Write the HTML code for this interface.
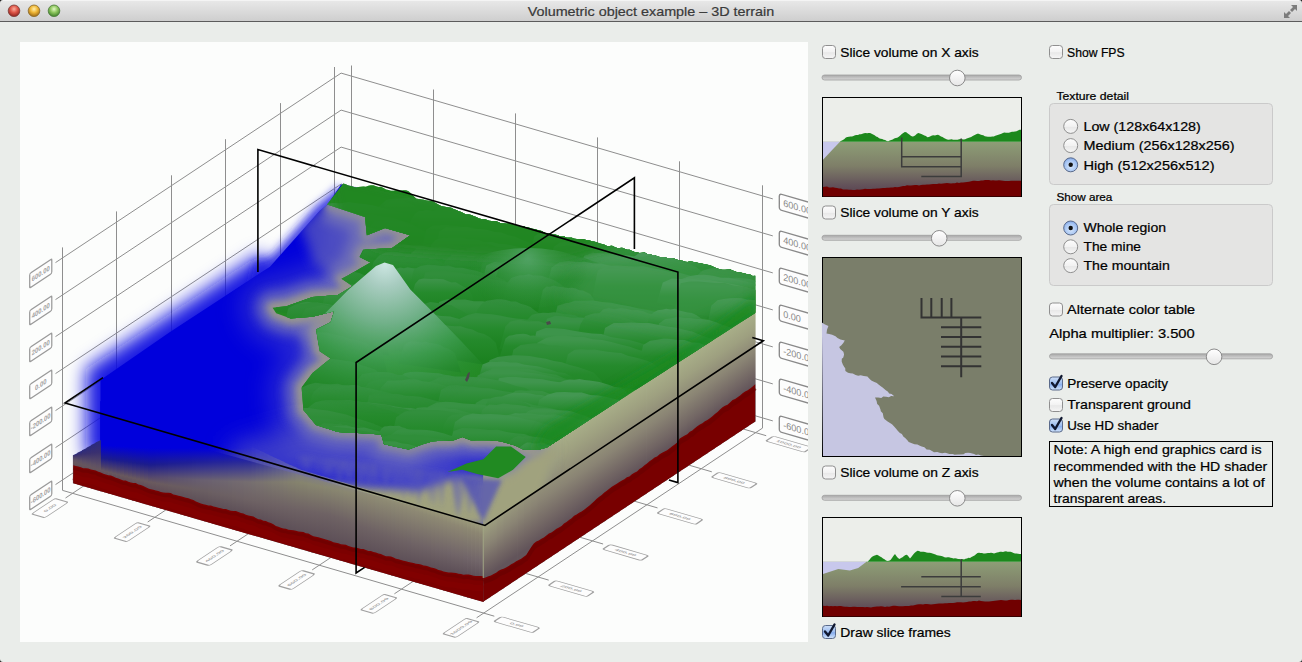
<!DOCTYPE html><html><head><meta charset="utf-8"><title>Volumetric object example - 3D terrain</title><style>html,body{margin:0;padding:0;background:#eaedea;width:1302px;height:662px;overflow:hidden;font-family:"Liberation Sans",sans-serif}</style></head><body><svg width="1302" height="662" viewBox="0 0 1302 662" style="display:block"><defs><linearGradient id="tbar" x1="0" y1="0" x2="0" y2="1"><stop offset="0" stop-color="#e9e9e9"/><stop offset="0.1" stop-color="#e6e6e6"/><stop offset="1" stop-color="#cdcdcd"/></linearGradient><radialGradient id="tlr" cx="0.5" cy="0.35" r="0.6"><stop offset="0" stop-color="#f8b0a0"/><stop offset="0.5" stop-color="#e0584a"/><stop offset="1" stop-color="#9a2a24"/></radialGradient><radialGradient id="tly" cx="0.5" cy="0.35" r="0.6"><stop offset="0" stop-color="#fff0b0"/><stop offset="0.5" stop-color="#f0b838"/><stop offset="1" stop-color="#a87418"/></radialGradient><radialGradient id="tlg" cx="0.5" cy="0.35" r="0.6"><stop offset="0" stop-color="#e4f8c8"/><stop offset="0.5" stop-color="#90c860"/><stop offset="1" stop-color="#4a8a30"/></radialGradient><clipPath id="gclip"><rect x="20" y="42" width="788" height="600"/></clipPath><filter id="blur2" x="-30%" y="-30%" width="160%" height="160%"><feGaussianBlur stdDeviation="2"/></filter><filter id="blur3" x="-30%" y="-30%" width="160%" height="160%"><feGaussianBlur stdDeviation="3"/></filter><filter id="blur4" x="-30%" y="-30%" width="160%" height="160%"><feGaussianBlur stdDeviation="4"/></filter><filter id="blur5" x="-30%" y="-30%" width="160%" height="160%"><feGaussianBlur stdDeviation="5"/></filter><filter id="blur6" x="-30%" y="-30%" width="160%" height="160%"><feGaussianBlur stdDeviation="6"/></filter><filter id="blur8" x="-30%" y="-30%" width="160%" height="160%"><feGaussianBlur stdDeviation="8"/></filter><filter id="blur7" x="-30%" y="-30%" width="160%" height="160%"><feGaussianBlur stdDeviation="9"/></filter><linearGradient id="rf0" gradientUnits="userSpaceOnUse" x1="486.90" y1="467.75" x2="548.04" y2="557.67"><stop offset="0.151" stop-color="#a8ae88"/><stop offset="0.432" stop-color="#9ea080"/><stop offset="0.588" stop-color="#8a8474"/><stop offset="0.728" stop-color="#726664"/><stop offset="0.821" stop-color="#62545a"/></linearGradient><linearGradient id="rf1" gradientUnits="userSpaceOnUse" x1="493.69" y1="463.25" x2="554.83" y2="553.17"><stop offset="0.149" stop-color="#a8ae88"/><stop offset="0.413" stop-color="#9ea080"/><stop offset="0.579" stop-color="#8a8474"/><stop offset="0.725" stop-color="#726664"/><stop offset="0.821" stop-color="#62545a"/></linearGradient><linearGradient id="rf2" gradientUnits="userSpaceOnUse" x1="500.48" y1="458.75" x2="561.62" y2="548.67"><stop offset="0.146" stop-color="#a8ae88"/><stop offset="0.394" stop-color="#9ea080"/><stop offset="0.569" stop-color="#8a8474"/><stop offset="0.722" stop-color="#726664"/><stop offset="0.820" stop-color="#62545a"/></linearGradient><linearGradient id="rf3" gradientUnits="userSpaceOnUse" x1="507.27" y1="454.25" x2="568.42" y2="544.16"><stop offset="0.144" stop-color="#a8ae88"/><stop offset="0.375" stop-color="#9ea080"/><stop offset="0.559" stop-color="#8a8474"/><stop offset="0.719" stop-color="#726664"/><stop offset="0.820" stop-color="#62545a"/></linearGradient><linearGradient id="rf4" gradientUnits="userSpaceOnUse" x1="514.07" y1="449.75" x2="575.21" y2="539.66"><stop offset="0.142" stop-color="#a8ae88"/><stop offset="0.356" stop-color="#9ea080"/><stop offset="0.550" stop-color="#8a8474"/><stop offset="0.715" stop-color="#726664"/><stop offset="0.819" stop-color="#62545a"/></linearGradient><linearGradient id="rf5" gradientUnits="userSpaceOnUse" x1="520.86" y1="445.25" x2="582.00" y2="535.16"><stop offset="0.139" stop-color="#a8ae88"/><stop offset="0.338" stop-color="#9ea080"/><stop offset="0.540" stop-color="#8a8474"/><stop offset="0.712" stop-color="#726664"/><stop offset="0.819" stop-color="#62545a"/></linearGradient><linearGradient id="rf6" gradientUnits="userSpaceOnUse" x1="527.65" y1="440.75" x2="588.79" y2="530.66"><stop offset="0.137" stop-color="#a8ae88"/><stop offset="0.319" stop-color="#9ea080"/><stop offset="0.530" stop-color="#8a8474"/><stop offset="0.709" stop-color="#726664"/><stop offset="0.818" stop-color="#62545a"/></linearGradient><linearGradient id="rf7" gradientUnits="userSpaceOnUse" x1="534.44" y1="436.25" x2="595.58" y2="526.16"><stop offset="0.134" stop-color="#a8ae88"/><stop offset="0.300" stop-color="#9ea080"/><stop offset="0.521" stop-color="#8a8474"/><stop offset="0.706" stop-color="#726664"/><stop offset="0.818" stop-color="#62545a"/></linearGradient><linearGradient id="rf8" gradientUnits="userSpaceOnUse" x1="541.24" y1="431.75" x2="602.37" y2="521.66"><stop offset="0.133" stop-color="#a8ae88"/><stop offset="0.285" stop-color="#9ea080"/><stop offset="0.513" stop-color="#8a8474"/><stop offset="0.703" stop-color="#726664"/><stop offset="0.817" stop-color="#62545a"/></linearGradient><linearGradient id="rf9" gradientUnits="userSpaceOnUse" x1="548.03" y1="427.25" x2="609.16" y2="517.15"><stop offset="0.135" stop-color="#a8ae88"/><stop offset="0.284" stop-color="#9ea080"/><stop offset="0.513" stop-color="#8a8474"/><stop offset="0.700" stop-color="#726664"/><stop offset="0.814" stop-color="#62545a"/></linearGradient><linearGradient id="rf10" gradientUnits="userSpaceOnUse" x1="554.82" y1="422.75" x2="615.96" y2="512.65"><stop offset="0.138" stop-color="#a8ae88"/><stop offset="0.284" stop-color="#9ea080"/><stop offset="0.512" stop-color="#8a8474"/><stop offset="0.697" stop-color="#726664"/><stop offset="0.811" stop-color="#62545a"/></linearGradient><linearGradient id="rf11" gradientUnits="userSpaceOnUse" x1="561.61" y1="418.25" x2="622.75" y2="508.15"><stop offset="0.140" stop-color="#a8ae88"/><stop offset="0.284" stop-color="#9ea080"/><stop offset="0.512" stop-color="#8a8474"/><stop offset="0.694" stop-color="#726664"/><stop offset="0.808" stop-color="#62545a"/></linearGradient><linearGradient id="rf12" gradientUnits="userSpaceOnUse" x1="568.41" y1="413.75" x2="629.54" y2="503.65"><stop offset="0.142" stop-color="#a8ae88"/><stop offset="0.284" stop-color="#9ea080"/><stop offset="0.512" stop-color="#8a8474"/><stop offset="0.691" stop-color="#726664"/><stop offset="0.805" stop-color="#62545a"/></linearGradient><linearGradient id="rf13" gradientUnits="userSpaceOnUse" x1="575.20" y1="409.25" x2="636.33" y2="499.15"><stop offset="0.145" stop-color="#a8ae88"/><stop offset="0.284" stop-color="#9ea080"/><stop offset="0.512" stop-color="#8a8474"/><stop offset="0.689" stop-color="#726664"/><stop offset="0.803" stop-color="#62545a"/></linearGradient><linearGradient id="rf14" gradientUnits="userSpaceOnUse" x1="581.99" y1="404.75" x2="643.12" y2="494.65"><stop offset="0.147" stop-color="#a8ae88"/><stop offset="0.283" stop-color="#9ea080"/><stop offset="0.512" stop-color="#8a8474"/><stop offset="0.686" stop-color="#726664"/><stop offset="0.800" stop-color="#62545a"/></linearGradient><linearGradient id="rf15" gradientUnits="userSpaceOnUse" x1="588.78" y1="400.25" x2="649.91" y2="490.14"><stop offset="0.150" stop-color="#a8ae88"/><stop offset="0.283" stop-color="#9ea080"/><stop offset="0.511" stop-color="#8a8474"/><stop offset="0.683" stop-color="#726664"/><stop offset="0.797" stop-color="#62545a"/></linearGradient><linearGradient id="rf16" gradientUnits="userSpaceOnUse" x1="595.58" y1="395.75" x2="656.70" y2="485.64"><stop offset="0.152" stop-color="#a8ae88"/><stop offset="0.283" stop-color="#9ea080"/><stop offset="0.511" stop-color="#8a8474"/><stop offset="0.680" stop-color="#726664"/><stop offset="0.794" stop-color="#62545a"/></linearGradient><linearGradient id="rf17" gradientUnits="userSpaceOnUse" x1="602.37" y1="391.25" x2="663.49" y2="481.14"><stop offset="0.154" stop-color="#a8ae88"/><stop offset="0.284" stop-color="#9ea080"/><stop offset="0.511" stop-color="#8a8474"/><stop offset="0.678" stop-color="#726664"/><stop offset="0.792" stop-color="#62545a"/></linearGradient><linearGradient id="rf18" gradientUnits="userSpaceOnUse" x1="609.16" y1="386.75" x2="670.29" y2="476.64"><stop offset="0.155" stop-color="#a8ae88"/><stop offset="0.285" stop-color="#9ea080"/><stop offset="0.509" stop-color="#8a8474"/><stop offset="0.678" stop-color="#726664"/><stop offset="0.789" stop-color="#62545a"/></linearGradient><linearGradient id="rf19" gradientUnits="userSpaceOnUse" x1="615.95" y1="382.25" x2="677.08" y2="472.14"><stop offset="0.157" stop-color="#a8ae88"/><stop offset="0.287" stop-color="#9ea080"/><stop offset="0.508" stop-color="#8a8474"/><stop offset="0.677" stop-color="#726664"/><stop offset="0.786" stop-color="#62545a"/></linearGradient><linearGradient id="rf20" gradientUnits="userSpaceOnUse" x1="622.75" y1="377.75" x2="683.87" y2="467.64"><stop offset="0.158" stop-color="#a8ae88"/><stop offset="0.289" stop-color="#9ea080"/><stop offset="0.507" stop-color="#8a8474"/><stop offset="0.676" stop-color="#726664"/><stop offset="0.784" stop-color="#62545a"/></linearGradient><linearGradient id="rf21" gradientUnits="userSpaceOnUse" x1="629.54" y1="373.25" x2="690.66" y2="463.13"><stop offset="0.159" stop-color="#a8ae88"/><stop offset="0.291" stop-color="#9ea080"/><stop offset="0.505" stop-color="#8a8474"/><stop offset="0.676" stop-color="#726664"/><stop offset="0.781" stop-color="#62545a"/></linearGradient><linearGradient id="rf22" gradientUnits="userSpaceOnUse" x1="636.33" y1="368.75" x2="697.45" y2="458.63"><stop offset="0.160" stop-color="#a8ae88"/><stop offset="0.293" stop-color="#9ea080"/><stop offset="0.504" stop-color="#8a8474"/><stop offset="0.675" stop-color="#726664"/><stop offset="0.779" stop-color="#62545a"/></linearGradient><linearGradient id="rf23" gradientUnits="userSpaceOnUse" x1="643.12" y1="364.25" x2="704.24" y2="454.13"><stop offset="0.162" stop-color="#a8ae88"/><stop offset="0.295" stop-color="#9ea080"/><stop offset="0.503" stop-color="#8a8474"/><stop offset="0.674" stop-color="#726664"/><stop offset="0.776" stop-color="#62545a"/></linearGradient><linearGradient id="rf24" gradientUnits="userSpaceOnUse" x1="649.92" y1="359.75" x2="711.03" y2="449.63"><stop offset="0.163" stop-color="#a8ae88"/><stop offset="0.297" stop-color="#9ea080"/><stop offset="0.502" stop-color="#8a8474"/><stop offset="0.674" stop-color="#726664"/><stop offset="0.774" stop-color="#62545a"/></linearGradient><linearGradient id="rf25" gradientUnits="userSpaceOnUse" x1="656.71" y1="355.25" x2="717.83" y2="445.13"><stop offset="0.164" stop-color="#a8ae88"/><stop offset="0.299" stop-color="#9ea080"/><stop offset="0.500" stop-color="#8a8474"/><stop offset="0.673" stop-color="#726664"/><stop offset="0.771" stop-color="#62545a"/></linearGradient><linearGradient id="rf26" gradientUnits="userSpaceOnUse" x1="663.50" y1="350.75" x2="724.62" y2="440.63"><stop offset="0.166" stop-color="#a8ae88"/><stop offset="0.301" stop-color="#9ea080"/><stop offset="0.499" stop-color="#8a8474"/><stop offset="0.672" stop-color="#726664"/><stop offset="0.768" stop-color="#62545a"/></linearGradient><linearGradient id="rf27" gradientUnits="userSpaceOnUse" x1="670.29" y1="346.25" x2="731.41" y2="436.12"><stop offset="0.167" stop-color="#a8ae88"/><stop offset="0.303" stop-color="#9ea080"/><stop offset="0.498" stop-color="#8a8474"/><stop offset="0.672" stop-color="#726664"/><stop offset="0.766" stop-color="#62545a"/></linearGradient><linearGradient id="rf28" gradientUnits="userSpaceOnUse" x1="677.09" y1="341.75" x2="738.20" y2="431.62"><stop offset="0.168" stop-color="#a8ae88"/><stop offset="0.305" stop-color="#9ea080"/><stop offset="0.496" stop-color="#8a8474"/><stop offset="0.671" stop-color="#726664"/><stop offset="0.763" stop-color="#62545a"/></linearGradient><linearGradient id="rf29" gradientUnits="userSpaceOnUse" x1="683.88" y1="337.25" x2="744.99" y2="427.12"><stop offset="0.169" stop-color="#a8ae88"/><stop offset="0.306" stop-color="#9ea080"/><stop offset="0.495" stop-color="#8a8474"/><stop offset="0.669" stop-color="#726664"/><stop offset="0.760" stop-color="#62545a"/></linearGradient><linearGradient id="rf30" gradientUnits="userSpaceOnUse" x1="690.67" y1="332.75" x2="751.78" y2="422.62"><stop offset="0.170" stop-color="#a8ae88"/><stop offset="0.306" stop-color="#9ea080"/><stop offset="0.493" stop-color="#8a8474"/><stop offset="0.664" stop-color="#726664"/><stop offset="0.757" stop-color="#62545a"/></linearGradient><linearGradient id="rf31" gradientUnits="userSpaceOnUse" x1="697.46" y1="328.25" x2="758.57" y2="418.12"><stop offset="0.170" stop-color="#a8ae88"/><stop offset="0.305" stop-color="#9ea080"/><stop offset="0.490" stop-color="#8a8474"/><stop offset="0.660" stop-color="#726664"/><stop offset="0.753" stop-color="#62545a"/></linearGradient><linearGradient id="rf32" gradientUnits="userSpaceOnUse" x1="704.26" y1="323.75" x2="765.36" y2="413.62"><stop offset="0.171" stop-color="#a8ae88"/><stop offset="0.305" stop-color="#9ea080"/><stop offset="0.488" stop-color="#8a8474"/><stop offset="0.656" stop-color="#726664"/><stop offset="0.750" stop-color="#62545a"/></linearGradient><linearGradient id="rf33" gradientUnits="userSpaceOnUse" x1="711.05" y1="319.25" x2="772.16" y2="409.11"><stop offset="0.171" stop-color="#a8ae88"/><stop offset="0.305" stop-color="#9ea080"/><stop offset="0.486" stop-color="#8a8474"/><stop offset="0.652" stop-color="#726664"/><stop offset="0.746" stop-color="#62545a"/></linearGradient><linearGradient id="rf34" gradientUnits="userSpaceOnUse" x1="717.84" y1="314.75" x2="778.95" y2="404.61"><stop offset="0.172" stop-color="#a8ae88"/><stop offset="0.305" stop-color="#9ea080"/><stop offset="0.484" stop-color="#8a8474"/><stop offset="0.647" stop-color="#726664"/><stop offset="0.742" stop-color="#62545a"/></linearGradient><linearGradient id="rf35" gradientUnits="userSpaceOnUse" x1="724.63" y1="310.25" x2="785.74" y2="400.11"><stop offset="0.172" stop-color="#a8ae88"/><stop offset="0.305" stop-color="#9ea080"/><stop offset="0.482" stop-color="#8a8474"/><stop offset="0.643" stop-color="#726664"/><stop offset="0.739" stop-color="#62545a"/></linearGradient><linearGradient id="rf36" gradientUnits="userSpaceOnUse" x1="731.43" y1="305.75" x2="792.53" y2="395.61"><stop offset="0.173" stop-color="#a8ae88"/><stop offset="0.305" stop-color="#9ea080"/><stop offset="0.479" stop-color="#8a8474"/><stop offset="0.639" stop-color="#726664"/><stop offset="0.735" stop-color="#62545a"/></linearGradient><linearGradient id="rf37" gradientUnits="userSpaceOnUse" x1="738.22" y1="301.25" x2="799.32" y2="391.11"><stop offset="0.174" stop-color="#a8ae88"/><stop offset="0.305" stop-color="#9ea080"/><stop offset="0.477" stop-color="#8a8474"/><stop offset="0.635" stop-color="#726664"/><stop offset="0.732" stop-color="#62545a"/></linearGradient><linearGradient id="rf38" gradientUnits="userSpaceOnUse" x1="745.01" y1="296.75" x2="806.11" y2="386.60"><stop offset="0.174" stop-color="#a8ae88"/><stop offset="0.305" stop-color="#9ea080"/><stop offset="0.475" stop-color="#8a8474"/><stop offset="0.630" stop-color="#726664"/><stop offset="0.728" stop-color="#62545a"/></linearGradient><linearGradient id="rf39" gradientUnits="userSpaceOnUse" x1="751.80" y1="292.25" x2="812.90" y2="382.10"><stop offset="0.175" stop-color="#a8ae88"/><stop offset="0.304" stop-color="#9ea080"/><stop offset="0.473" stop-color="#8a8474"/><stop offset="0.626" stop-color="#726664"/><stop offset="0.725" stop-color="#62545a"/></linearGradient><linearGradient id="ff0" gradientUnits="userSpaceOnUse" x1="102.49" y1="401.60" x2="102.49" y2="491.75"><stop offset="0.483" stop-color="#0000dc"/><stop offset="0.629" stop-color="#1c1c8c"/><stop offset="0.719" stop-color="#4a3e6a"/><stop offset="0.764" stop-color="#66565e"/><stop offset="0.799" stop-color="#62505a"/></linearGradient><linearGradient id="ff1" gradientUnits="userSpaceOnUse" x1="106.48" y1="402.80" x2="106.48" y2="492.90"><stop offset="0.472" stop-color="#0000dc"/><stop offset="0.622" stop-color="#1c1c8c"/><stop offset="0.715" stop-color="#4b3f6b"/><stop offset="0.762" stop-color="#66565e"/><stop offset="0.799" stop-color="#62505a"/></linearGradient><linearGradient id="ff2" gradientUnits="userSpaceOnUse" x1="110.47" y1="404.00" x2="110.47" y2="494.06"><stop offset="0.462" stop-color="#0000dc"/><stop offset="0.615" stop-color="#1c1c8c"/><stop offset="0.711" stop-color="#4b3f6b"/><stop offset="0.760" stop-color="#67575e"/><stop offset="0.799" stop-color="#62505a"/></linearGradient><linearGradient id="ff3" gradientUnits="userSpaceOnUse" x1="114.46" y1="405.20" x2="114.46" y2="495.21"><stop offset="0.452" stop-color="#0000dc"/><stop offset="0.609" stop-color="#1c1c8c"/><stop offset="0.707" stop-color="#4c406c"/><stop offset="0.758" stop-color="#67575e"/><stop offset="0.799" stop-color="#62505a"/></linearGradient><linearGradient id="ff4" gradientUnits="userSpaceOnUse" x1="118.45" y1="406.40" x2="118.45" y2="496.37"><stop offset="0.441" stop-color="#0000dc"/><stop offset="0.602" stop-color="#1c1c8c"/><stop offset="0.703" stop-color="#4c406c"/><stop offset="0.755" stop-color="#67575e"/><stop offset="0.799" stop-color="#62505a"/></linearGradient><linearGradient id="ff5" gradientUnits="userSpaceOnUse" x1="122.44" y1="407.60" x2="122.44" y2="497.52"><stop offset="0.431" stop-color="#0000dc"/><stop offset="0.595" stop-color="#1c1c8c"/><stop offset="0.699" stop-color="#4d416d"/><stop offset="0.753" stop-color="#68585e"/><stop offset="0.799" stop-color="#62505a"/></linearGradient><linearGradient id="ff6" gradientUnits="userSpaceOnUse" x1="126.43" y1="408.81" x2="126.43" y2="498.67"><stop offset="0.420" stop-color="#0000dc"/><stop offset="0.588" stop-color="#1c1c8c"/><stop offset="0.695" stop-color="#4d416d"/><stop offset="0.751" stop-color="#68585e"/><stop offset="0.799" stop-color="#62505a"/></linearGradient><linearGradient id="ff7" gradientUnits="userSpaceOnUse" x1="130.42" y1="410.01" x2="130.42" y2="499.83"><stop offset="0.410" stop-color="#0000dc"/><stop offset="0.581" stop-color="#1c1c8c"/><stop offset="0.691" stop-color="#4e426e"/><stop offset="0.749" stop-color="#68585e"/><stop offset="0.800" stop-color="#62505a"/></linearGradient><linearGradient id="ff8" gradientUnits="userSpaceOnUse" x1="134.41" y1="411.21" x2="134.41" y2="500.98"><stop offset="0.399" stop-color="#0000dc"/><stop offset="0.575" stop-color="#1c1c8c"/><stop offset="0.687" stop-color="#4e426e"/><stop offset="0.746" stop-color="#69595e"/><stop offset="0.800" stop-color="#62505a"/></linearGradient><linearGradient id="ff9" gradientUnits="userSpaceOnUse" x1="138.40" y1="412.41" x2="138.40" y2="502.14"><stop offset="0.389" stop-color="#0000dc"/><stop offset="0.568" stop-color="#1c1c8c"/><stop offset="0.683" stop-color="#4f436f"/><stop offset="0.744" stop-color="#69595e"/><stop offset="0.800" stop-color="#62505a"/></linearGradient><linearGradient id="ff10" gradientUnits="userSpaceOnUse" x1="142.39" y1="413.61" x2="142.39" y2="503.29"><stop offset="0.378" stop-color="#0000dc"/><stop offset="0.561" stop-color="#1c1c8c"/><stop offset="0.679" stop-color="#4f436f"/><stop offset="0.742" stop-color="#69595e"/><stop offset="0.800" stop-color="#62505a"/></linearGradient><linearGradient id="ff11" gradientUnits="userSpaceOnUse" x1="146.38" y1="414.81" x2="146.38" y2="504.45"><stop offset="0.368" stop-color="#0000dc"/><stop offset="0.554" stop-color="#1c1c8c"/><stop offset="0.674" stop-color="#504470"/><stop offset="0.740" stop-color="#6a5a5e"/><stop offset="0.800" stop-color="#62505a"/></linearGradient><linearGradient id="ff12" gradientUnits="userSpaceOnUse" x1="150.37" y1="416.01" x2="150.37" y2="505.60"><stop offset="0.357" stop-color="#0000dc"/><stop offset="0.547" stop-color="#1c1c8c"/><stop offset="0.670" stop-color="#504470"/><stop offset="0.737" stop-color="#6a5a5e"/><stop offset="0.800" stop-color="#62505a"/></linearGradient><linearGradient id="ff13" gradientUnits="userSpaceOnUse" x1="154.36" y1="417.21" x2="154.36" y2="506.76"><stop offset="0.344" stop-color="#0000dc"/><stop offset="0.531" stop-color="#1c1c8d"/><stop offset="0.660" stop-color="#524670"/><stop offset="0.731" stop-color="#6a5a5e"/><stop offset="0.800" stop-color="#62505a"/></linearGradient><linearGradient id="ff14" gradientUnits="userSpaceOnUse" x1="158.35" y1="418.41" x2="158.35" y2="507.91"><stop offset="0.331" stop-color="#0000dc"/><stop offset="0.515" stop-color="#1d1d8e"/><stop offset="0.651" stop-color="#544870"/><stop offset="0.725" stop-color="#6a5b5f"/><stop offset="0.800" stop-color="#61505a"/></linearGradient><linearGradient id="ff15" gradientUnits="userSpaceOnUse" x1="162.34" y1="419.61" x2="162.34" y2="509.07"><stop offset="0.317" stop-color="#0000dc"/><stop offset="0.499" stop-color="#1d1d8f"/><stop offset="0.641" stop-color="#564a70"/><stop offset="0.720" stop-color="#6a5b5f"/><stop offset="0.800" stop-color="#61505a"/></linearGradient><linearGradient id="ff16" gradientUnits="userSpaceOnUse" x1="166.33" y1="420.81" x2="166.33" y2="510.22"><stop offset="0.304" stop-color="#0000dc"/><stop offset="0.483" stop-color="#1d1d91"/><stop offset="0.632" stop-color="#584c70"/><stop offset="0.714" stop-color="#6a5b5f"/><stop offset="0.800" stop-color="#615059"/></linearGradient><linearGradient id="ff17" gradientUnits="userSpaceOnUse" x1="170.32" y1="422.02" x2="170.32" y2="511.37"><stop offset="0.291" stop-color="#0000dc"/><stop offset="0.467" stop-color="#1e1e92"/><stop offset="0.622" stop-color="#5a4f70"/><stop offset="0.708" stop-color="#6a5c60"/><stop offset="0.799" stop-color="#605059"/></linearGradient><linearGradient id="ff18" gradientUnits="userSpaceOnUse" x1="174.31" y1="423.22" x2="174.31" y2="512.53"><stop offset="0.277" stop-color="#0000dc"/><stop offset="0.452" stop-color="#1e1e93"/><stop offset="0.613" stop-color="#5c5170"/><stop offset="0.702" stop-color="#6a5c60"/><stop offset="0.799" stop-color="#605059"/></linearGradient><linearGradient id="ff19" gradientUnits="userSpaceOnUse" x1="178.30" y1="424.42" x2="178.30" y2="513.68"><stop offset="0.264" stop-color="#0000dc"/><stop offset="0.436" stop-color="#1e1e94"/><stop offset="0.603" stop-color="#5e5370"/><stop offset="0.696" stop-color="#6a5c60"/><stop offset="0.799" stop-color="#605059"/></linearGradient><linearGradient id="ff20" gradientUnits="userSpaceOnUse" x1="182.29" y1="425.62" x2="182.29" y2="514.84"><stop offset="0.251" stop-color="#0000dc"/><stop offset="0.420" stop-color="#1f1f95"/><stop offset="0.594" stop-color="#5f5570"/><stop offset="0.690" stop-color="#6a5d61"/><stop offset="0.799" stop-color="#5f5059"/></linearGradient><linearGradient id="ff21" gradientUnits="userSpaceOnUse" x1="186.28" y1="426.82" x2="186.28" y2="515.99"><stop offset="0.238" stop-color="#0000dc"/><stop offset="0.404" stop-color="#1f1f96"/><stop offset="0.584" stop-color="#615770"/><stop offset="0.684" stop-color="#6a5d61"/><stop offset="0.799" stop-color="#5f5059"/></linearGradient><linearGradient id="ff22" gradientUnits="userSpaceOnUse" x1="190.27" y1="428.02" x2="190.27" y2="517.15"><stop offset="0.224" stop-color="#0000dc"/><stop offset="0.388" stop-color="#1f1f97"/><stop offset="0.574" stop-color="#635970"/><stop offset="0.678" stop-color="#6a5d61"/><stop offset="0.799" stop-color="#5f5058"/></linearGradient><linearGradient id="ff23" gradientUnits="userSpaceOnUse" x1="194.26" y1="429.22" x2="194.26" y2="518.30"><stop offset="0.211" stop-color="#0000dc"/><stop offset="0.372" stop-color="#202098"/><stop offset="0.565" stop-color="#655b70"/><stop offset="0.672" stop-color="#6a5e62"/><stop offset="0.798" stop-color="#5e5058"/></linearGradient><linearGradient id="ff24" gradientUnits="userSpaceOnUse" x1="198.24" y1="430.42" x2="198.24" y2="519.46"><stop offset="0.197" stop-color="#0000dc"/><stop offset="0.356" stop-color="#20209a"/><stop offset="0.555" stop-color="#675d70"/><stop offset="0.666" stop-color="#6a5e62"/><stop offset="0.798" stop-color="#5e5058"/></linearGradient><linearGradient id="ff25" gradientUnits="userSpaceOnUse" x1="202.23" y1="431.62" x2="202.23" y2="520.61"><stop offset="0.184" stop-color="#0000dc"/><stop offset="0.341" stop-color="#20209a"/><stop offset="0.545" stop-color="#695f70"/><stop offset="0.661" stop-color="#6a5e62"/><stop offset="0.797" stop-color="#5e5058"/></linearGradient><linearGradient id="ff26" gradientUnits="userSpaceOnUse" x1="206.22" y1="432.82" x2="206.22" y2="521.76"><stop offset="0.171" stop-color="#0000dc"/><stop offset="0.328" stop-color="#21219a"/><stop offset="0.533" stop-color="#6a6070"/><stop offset="0.657" stop-color="#6a5e62"/><stop offset="0.796" stop-color="#5e5058"/></linearGradient><linearGradient id="ff27" gradientUnits="userSpaceOnUse" x1="210.21" y1="434.02" x2="210.21" y2="522.92"><stop offset="0.157" stop-color="#0000dc"/><stop offset="0.315" stop-color="#22229a"/><stop offset="0.522" stop-color="#6b6170"/><stop offset="0.653" stop-color="#6b5f62"/><stop offset="0.795" stop-color="#5e5058"/></linearGradient><linearGradient id="ff28" gradientUnits="userSpaceOnUse" x1="214.20" y1="435.23" x2="214.20" y2="524.07"><stop offset="0.144" stop-color="#0000dc"/><stop offset="0.301" stop-color="#23239a"/><stop offset="0.510" stop-color="#6c6370"/><stop offset="0.648" stop-color="#6b5f63"/><stop offset="0.793" stop-color="#5e5058"/></linearGradient><linearGradient id="ff29" gradientUnits="userSpaceOnUse" x1="218.19" y1="436.43" x2="218.19" y2="525.23"><stop offset="0.130" stop-color="#0000dc"/><stop offset="0.288" stop-color="#24249a"/><stop offset="0.499" stop-color="#6d6470"/><stop offset="0.644" stop-color="#6b5f63"/><stop offset="0.792" stop-color="#5e5058"/></linearGradient><linearGradient id="ff30" gradientUnits="userSpaceOnUse" x1="222.18" y1="437.63" x2="222.18" y2="526.38"><stop offset="0.117" stop-color="#0000dc"/><stop offset="0.275" stop-color="#24249a"/><stop offset="0.487" stop-color="#6e6570"/><stop offset="0.640" stop-color="#6c6063"/><stop offset="0.790" stop-color="#5e5058"/></linearGradient><linearGradient id="ff31" gradientUnits="userSpaceOnUse" x1="226.17" y1="438.83" x2="226.17" y2="527.54"><stop offset="0.103" stop-color="#0000dc"/><stop offset="0.261" stop-color="#25259a"/><stop offset="0.476" stop-color="#6f6670"/><stop offset="0.636" stop-color="#6c6063"/><stop offset="0.789" stop-color="#5e5058"/></linearGradient><linearGradient id="ff32" gradientUnits="userSpaceOnUse" x1="230.16" y1="440.03" x2="230.16" y2="528.69"><stop offset="0.090" stop-color="#0000dc"/><stop offset="0.248" stop-color="#26269a"/><stop offset="0.464" stop-color="#706870"/><stop offset="0.632" stop-color="#6c6063"/><stop offset="0.787" stop-color="#5e5058"/></linearGradient><linearGradient id="ff33" gradientUnits="userSpaceOnUse" x1="234.15" y1="441.23" x2="234.15" y2="529.85"><stop offset="0.076" stop-color="#0000dc"/><stop offset="0.234" stop-color="#27279a"/><stop offset="0.453" stop-color="#726970"/><stop offset="0.627" stop-color="#6d6163"/><stop offset="0.786" stop-color="#5e5058"/></linearGradient><linearGradient id="ff34" gradientUnits="userSpaceOnUse" x1="238.14" y1="442.43" x2="238.14" y2="531.00"><stop offset="0.063" stop-color="#0000dc"/><stop offset="0.221" stop-color="#28289a"/><stop offset="0.441" stop-color="#736a70"/><stop offset="0.623" stop-color="#6d6164"/><stop offset="0.785" stop-color="#5e5058"/></linearGradient><linearGradient id="ff35" gradientUnits="userSpaceOnUse" x1="242.13" y1="443.63" x2="242.13" y2="532.15"><stop offset="0.049" stop-color="#0000dc"/><stop offset="0.208" stop-color="#28289a"/><stop offset="0.430" stop-color="#746b70"/><stop offset="0.619" stop-color="#6d6164"/><stop offset="0.783" stop-color="#5e5058"/></linearGradient><linearGradient id="ff36" gradientUnits="userSpaceOnUse" x1="246.12" y1="444.83" x2="246.12" y2="533.31"><stop offset="0.036" stop-color="#0000dc"/><stop offset="0.194" stop-color="#29299a"/><stop offset="0.418" stop-color="#756d70"/><stop offset="0.615" stop-color="#6e6264"/><stop offset="0.782" stop-color="#5e5058"/></linearGradient><linearGradient id="ff37" gradientUnits="userSpaceOnUse" x1="250.11" y1="446.05" x2="250.11" y2="534.46"><stop offset="0.023" stop-color="#0000dc"/><stop offset="0.181" stop-color="#2a2a9a"/><stop offset="0.407" stop-color="#766e70"/><stop offset="0.610" stop-color="#6e6264"/><stop offset="0.780" stop-color="#5e5058"/></linearGradient><linearGradient id="ff38" gradientUnits="userSpaceOnUse" x1="254.10" y1="447.93" x2="254.10" y2="535.62"><stop offset="0.022" stop-color="#0707d8"/><stop offset="0.170" stop-color="#313099"/><stop offset="0.389" stop-color="#777070"/><stop offset="0.603" stop-color="#6e6264"/><stop offset="0.781" stop-color="#5e5058"/></linearGradient><linearGradient id="ff39" gradientUnits="userSpaceOnUse" x1="258.09" y1="449.80" x2="258.09" y2="536.77"><stop offset="0.021" stop-color="#0f0fd4"/><stop offset="0.159" stop-color="#373797"/><stop offset="0.370" stop-color="#797270"/><stop offset="0.596" stop-color="#6e6264"/><stop offset="0.781" stop-color="#5e5058"/></linearGradient><linearGradient id="ff40" gradientUnits="userSpaceOnUse" x1="262.08" y1="451.68" x2="262.08" y2="537.93"><stop offset="0.020" stop-color="#1616cf"/><stop offset="0.148" stop-color="#3d3d96"/><stop offset="0.352" stop-color="#7a7370"/><stop offset="0.588" stop-color="#6e6264"/><stop offset="0.782" stop-color="#5e5058"/></linearGradient><linearGradient id="ff41" gradientUnits="userSpaceOnUse" x1="266.07" y1="453.55" x2="266.07" y2="539.08"><stop offset="0.020" stop-color="#1d1dcb"/><stop offset="0.136" stop-color="#444394"/><stop offset="0.333" stop-color="#7b756f"/><stop offset="0.581" stop-color="#6e6264"/><stop offset="0.782" stop-color="#5e5058"/></linearGradient><linearGradient id="ff42" gradientUnits="userSpaceOnUse" x1="270.06" y1="455.43" x2="270.06" y2="540.24"><stop offset="0.019" stop-color="#2424c7"/><stop offset="0.125" stop-color="#4a4993"/><stop offset="0.313" stop-color="#7c776f"/><stop offset="0.573" stop-color="#6e6264"/><stop offset="0.783" stop-color="#5e5058"/></linearGradient><linearGradient id="ff43" gradientUnits="userSpaceOnUse" x1="274.05" y1="457.30" x2="274.05" y2="541.39"><stop offset="0.018" stop-color="#2b2bc3"/><stop offset="0.113" stop-color="#505091"/><stop offset="0.294" stop-color="#7e796f"/><stop offset="0.565" stop-color="#6e6264"/><stop offset="0.783" stop-color="#5e5058"/></linearGradient><linearGradient id="ff44" gradientUnits="userSpaceOnUse" x1="278.04" y1="459.18" x2="278.04" y2="542.54"><stop offset="0.017" stop-color="#3232bf"/><stop offset="0.101" stop-color="#575690"/><stop offset="0.274" stop-color="#7f7a6f"/><stop offset="0.557" stop-color="#6e6264"/><stop offset="0.784" stop-color="#5e5058"/></linearGradient><linearGradient id="ff45" gradientUnits="userSpaceOnUse" x1="282.03" y1="461.05" x2="282.03" y2="543.70"><stop offset="0.016" stop-color="#3a3abb"/><stop offset="0.089" stop-color="#5d5c8e"/><stop offset="0.253" stop-color="#807c6f"/><stop offset="0.549" stop-color="#6e6264"/><stop offset="0.785" stop-color="#5e5058"/></linearGradient><linearGradient id="ff46" gradientUnits="userSpaceOnUse" x1="286.02" y1="462.93" x2="286.02" y2="544.85"><stop offset="0.016" stop-color="#4141b7"/><stop offset="0.077" stop-color="#64628d"/><stop offset="0.233" stop-color="#827e6f"/><stop offset="0.540" stop-color="#6e6264"/><stop offset="0.785" stop-color="#5e5058"/></linearGradient><linearGradient id="ff47" gradientUnits="userSpaceOnUse" x1="290.01" y1="464.80" x2="290.01" y2="546.01"><stop offset="0.015" stop-color="#4848b2"/><stop offset="0.064" stop-color="#6a688c"/><stop offset="0.212" stop-color="#83806e"/><stop offset="0.532" stop-color="#6e6264"/><stop offset="0.786" stop-color="#5e5058"/></linearGradient><linearGradient id="ff48" gradientUnits="userSpaceOnUse" x1="293.99" y1="466.68" x2="293.99" y2="547.16"><stop offset="0.014" stop-color="#4f4fae"/><stop offset="0.051" stop-color="#706f8a"/><stop offset="0.190" stop-color="#84816e"/><stop offset="0.523" stop-color="#6e6264"/><stop offset="0.786" stop-color="#5e5058"/></linearGradient><linearGradient id="ff49" gradientUnits="userSpaceOnUse" x1="297.98" y1="468.55" x2="297.98" y2="548.32"><stop offset="0.013" stop-color="#5656aa"/><stop offset="0.038" stop-color="#777589"/><stop offset="0.169" stop-color="#85836e"/><stop offset="0.515" stop-color="#6e6264"/><stop offset="0.787" stop-color="#5e5058"/></linearGradient><linearGradient id="ff50" gradientUnits="userSpaceOnUse" x1="301.97" y1="470.09" x2="301.97" y2="549.47"><stop offset="0.013" stop-color="#5b5ba7"/><stop offset="0.032" stop-color="#7b7988"/><stop offset="0.155" stop-color="#86846e"/><stop offset="0.507" stop-color="#6e6264"/><stop offset="0.787" stop-color="#5e5058"/></linearGradient><linearGradient id="ff51" gradientUnits="userSpaceOnUse" x1="305.96" y1="471.28" x2="305.96" y2="550.63"><stop offset="0.014" stop-color="#5e5ea5"/><stop offset="0.032" stop-color="#7c7a87"/><stop offset="0.150" stop-color="#86846e"/><stop offset="0.501" stop-color="#6e6264"/><stop offset="0.785" stop-color="#5e5058"/></linearGradient><linearGradient id="ff52" gradientUnits="userSpaceOnUse" x1="309.95" y1="472.47" x2="309.95" y2="551.78"><stop offset="0.015" stop-color="#6060a3"/><stop offset="0.032" stop-color="#7d7b86"/><stop offset="0.145" stop-color="#87856f"/><stop offset="0.494" stop-color="#6e6264"/><stop offset="0.784" stop-color="#5e5058"/></linearGradient><linearGradient id="ff53" gradientUnits="userSpaceOnUse" x1="313.94" y1="473.66" x2="313.94" y2="552.94"><stop offset="0.016" stop-color="#6363a1"/><stop offset="0.032" stop-color="#7e7c86"/><stop offset="0.140" stop-color="#87856f"/><stop offset="0.488" stop-color="#6e6264"/><stop offset="0.783" stop-color="#5e5058"/></linearGradient><linearGradient id="ff54" gradientUnits="userSpaceOnUse" x1="317.93" y1="474.86" x2="317.93" y2="554.09"><stop offset="0.017" stop-color="#65659f"/><stop offset="0.032" stop-color="#807e85"/><stop offset="0.135" stop-color="#87856f"/><stop offset="0.481" stop-color="#6e6264"/><stop offset="0.782" stop-color="#5e5058"/></linearGradient><linearGradient id="ff55" gradientUnits="userSpaceOnUse" x1="321.92" y1="476.05" x2="321.92" y2="555.24"><stop offset="0.018" stop-color="#68689d"/><stop offset="0.032" stop-color="#817f84"/><stop offset="0.131" stop-color="#88856f"/><stop offset="0.475" stop-color="#6e6264"/><stop offset="0.780" stop-color="#5e5058"/></linearGradient><linearGradient id="ff56" gradientUnits="userSpaceOnUse" x1="325.91" y1="477.24" x2="325.91" y2="556.40"><stop offset="0.019" stop-color="#6b6a9c"/><stop offset="0.032" stop-color="#828084"/><stop offset="0.126" stop-color="#888670"/><stop offset="0.468" stop-color="#6e6264"/><stop offset="0.779" stop-color="#5e5058"/></linearGradient><linearGradient id="ff57" gradientUnits="userSpaceOnUse" x1="329.90" y1="478.43" x2="329.90" y2="557.55"><stop offset="0.019" stop-color="#6d6d9a"/><stop offset="0.032" stop-color="#848283"/><stop offset="0.121" stop-color="#888670"/><stop offset="0.462" stop-color="#6e6264"/><stop offset="0.778" stop-color="#5e5058"/></linearGradient><linearGradient id="ff58" gradientUnits="userSpaceOnUse" x1="333.89" y1="479.62" x2="333.89" y2="558.71"><stop offset="0.017" stop-color="#706f98"/><stop offset="0.029" stop-color="#858383"/><stop offset="0.118" stop-color="#898670"/><stop offset="0.465" stop-color="#6e6264"/><stop offset="0.777" stop-color="#5e5058"/></linearGradient><linearGradient id="ff59" gradientUnits="userSpaceOnUse" x1="337.88" y1="480.81" x2="337.88" y2="559.86"><stop offset="0.014" stop-color="#727196"/><stop offset="0.027" stop-color="#868482"/><stop offset="0.115" stop-color="#898670"/><stop offset="0.468" stop-color="#6e6264"/><stop offset="0.777" stop-color="#5e5058"/></linearGradient><linearGradient id="ff60" gradientUnits="userSpaceOnUse" x1="341.87" y1="482.00" x2="341.87" y2="561.02"><stop offset="0.011" stop-color="#757494"/><stop offset="0.024" stop-color="#878581"/><stop offset="0.112" stop-color="#898771"/><stop offset="0.471" stop-color="#6e6264"/><stop offset="0.777" stop-color="#5e5058"/></linearGradient><linearGradient id="ff61" gradientUnits="userSpaceOnUse" x1="345.86" y1="483.20" x2="345.86" y2="562.17"><stop offset="0.008" stop-color="#777692"/><stop offset="0.021" stop-color="#898781"/><stop offset="0.110" stop-color="#8a8771"/><stop offset="0.474" stop-color="#6e6264"/><stop offset="0.776" stop-color="#5e5058"/></linearGradient><linearGradient id="ff62" gradientUnits="userSpaceOnUse" x1="349.85" y1="484.39" x2="349.85" y2="563.33"><stop offset="0.005" stop-color="#7a7990"/><stop offset="0.018" stop-color="#8a8880"/><stop offset="0.107" stop-color="#8a8771"/><stop offset="0.478" stop-color="#6e6264"/><stop offset="0.776" stop-color="#5e5058"/></linearGradient><linearGradient id="ff63" gradientUnits="userSpaceOnUse" x1="353.84" y1="485.58" x2="353.84" y2="564.48"><stop offset="0.003" stop-color="#7c7b8e"/><stop offset="0.015" stop-color="#8b897f"/><stop offset="0.104" stop-color="#8a8771"/><stop offset="0.481" stop-color="#6e6264"/><stop offset="0.775" stop-color="#5e5058"/></linearGradient><linearGradient id="ff64" gradientUnits="userSpaceOnUse" x1="357.83" y1="486.77" x2="357.83" y2="565.63"><stop offset="0.000" stop-color="#7f7e8c"/><stop offset="0.013" stop-color="#8d8b7f"/><stop offset="0.101" stop-color="#8b8771"/><stop offset="0.484" stop-color="#6e6264"/><stop offset="0.775" stop-color="#5e5058"/></linearGradient><linearGradient id="ff65" gradientUnits="userSpaceOnUse" x1="361.82" y1="487.96" x2="361.82" y2="566.79"><stop offset="0.000" stop-color="#82808a"/><stop offset="0.010" stop-color="#8e8c7e"/><stop offset="0.099" stop-color="#8b8872"/><stop offset="0.487" stop-color="#6e6264"/><stop offset="0.774" stop-color="#5e5058"/></linearGradient><linearGradient id="ff66" gradientUnits="userSpaceOnUse" x1="365.81" y1="489.15" x2="365.81" y2="567.94"><stop offset="0.000" stop-color="#848388"/><stop offset="0.007" stop-color="#8f8d7d"/><stop offset="0.096" stop-color="#8b8872"/><stop offset="0.490" stop-color="#6e6264"/><stop offset="0.774" stop-color="#5e5058"/></linearGradient><linearGradient id="ff67" gradientUnits="userSpaceOnUse" x1="369.80" y1="490.34" x2="369.80" y2="569.10"><stop offset="0.000" stop-color="#878586"/><stop offset="0.004" stop-color="#908e7d"/><stop offset="0.093" stop-color="#8c8872"/><stop offset="0.494" stop-color="#6e6264"/><stop offset="0.773" stop-color="#5e5058"/></linearGradient><linearGradient id="ff68" gradientUnits="userSpaceOnUse" x1="373.79" y1="491.54" x2="373.79" y2="570.25"><stop offset="0.000" stop-color="#898885"/><stop offset="0.001" stop-color="#92907c"/><stop offset="0.090" stop-color="#8c8872"/><stop offset="0.497" stop-color="#6e6264"/><stop offset="0.773" stop-color="#5e5058"/></linearGradient><linearGradient id="ff69" gradientUnits="userSpaceOnUse" x1="377.78" y1="492.73" x2="377.78" y2="571.41"><stop offset="0.000" stop-color="#8c8a83"/><stop offset="0.000" stop-color="#93917c"/><stop offset="0.087" stop-color="#8c8973"/><stop offset="0.500" stop-color="#6e6264"/><stop offset="0.773" stop-color="#5e5058"/></linearGradient><linearGradient id="ff70" gradientUnits="userSpaceOnUse" x1="381.77" y1="493.92" x2="381.77" y2="572.56"><stop offset="0.000" stop-color="#8e8d81"/><stop offset="0.000" stop-color="#94927b"/><stop offset="0.085" stop-color="#8d8973"/><stop offset="0.503" stop-color="#6e6264"/><stop offset="0.772" stop-color="#5e5058"/></linearGradient><linearGradient id="ff71" gradientUnits="userSpaceOnUse" x1="385.76" y1="495.11" x2="385.76" y2="573.72"><stop offset="0.000" stop-color="#918f7f"/><stop offset="0.000" stop-color="#95937a"/><stop offset="0.082" stop-color="#8d8973"/><stop offset="0.506" stop-color="#6e6264"/><stop offset="0.772" stop-color="#5e5058"/></linearGradient><linearGradient id="ff72" gradientUnits="userSpaceOnUse" x1="389.74" y1="496.30" x2="389.74" y2="574.87"><stop offset="0.000" stop-color="#93927d"/><stop offset="0.000" stop-color="#97957a"/><stop offset="0.079" stop-color="#8d8973"/><stop offset="0.510" stop-color="#6e6264"/><stop offset="0.771" stop-color="#5e5058"/></linearGradient><linearGradient id="ff73" gradientUnits="userSpaceOnUse" x1="393.73" y1="497.49" x2="393.73" y2="576.02"><stop offset="0.000" stop-color="#96947b"/><stop offset="0.000" stop-color="#989679"/><stop offset="0.076" stop-color="#8d8a74"/><stop offset="0.513" stop-color="#6e6264"/><stop offset="0.771" stop-color="#5e5058"/></linearGradient><linearGradient id="ff74" gradientUnits="userSpaceOnUse" x1="397.72" y1="498.68" x2="397.72" y2="577.18"><stop offset="0.000" stop-color="#999779"/><stop offset="0.000" stop-color="#999778"/><stop offset="0.073" stop-color="#8e8a74"/><stop offset="0.516" stop-color="#6e6264"/><stop offset="0.770" stop-color="#5e5058"/></linearGradient><linearGradient id="ff75" gradientUnits="userSpaceOnUse" x1="401.71" y1="499.88" x2="401.71" y2="578.33"><stop offset="0.000" stop-color="#9a9878"/><stop offset="0.000" stop-color="#9a9878"/><stop offset="0.073" stop-color="#8e8a74"/><stop offset="0.517" stop-color="#6e6264"/><stop offset="0.769" stop-color="#5e5058"/></linearGradient><linearGradient id="ff76" gradientUnits="userSpaceOnUse" x1="405.70" y1="501.07" x2="405.70" y2="579.49"><stop offset="0.000" stop-color="#9a9878"/><stop offset="0.000" stop-color="#9a9878"/><stop offset="0.076" stop-color="#8e8a74"/><stop offset="0.516" stop-color="#6e6264"/><stop offset="0.765" stop-color="#5e5058"/></linearGradient><linearGradient id="ff77" gradientUnits="userSpaceOnUse" x1="409.69" y1="502.26" x2="409.69" y2="580.64"><stop offset="0.000" stop-color="#9a9878"/><stop offset="0.000" stop-color="#9a9878"/><stop offset="0.079" stop-color="#8e8a74"/><stop offset="0.514" stop-color="#6e6265"/><stop offset="0.761" stop-color="#5e5058"/></linearGradient><linearGradient id="ff78" gradientUnits="userSpaceOnUse" x1="413.68" y1="503.45" x2="413.68" y2="581.80"><stop offset="0.000" stop-color="#9a9979"/><stop offset="0.000" stop-color="#9a9979"/><stop offset="0.083" stop-color="#8e8974"/><stop offset="0.513" stop-color="#6f6365"/><stop offset="0.757" stop-color="#5e5058"/></linearGradient><linearGradient id="ff79" gradientUnits="userSpaceOnUse" x1="417.67" y1="504.64" x2="417.67" y2="582.95"><stop offset="0.000" stop-color="#9a9979"/><stop offset="0.000" stop-color="#9a9979"/><stop offset="0.086" stop-color="#8e8974"/><stop offset="0.511" stop-color="#6f6365"/><stop offset="0.754" stop-color="#5e5058"/></linearGradient><linearGradient id="ff80" gradientUnits="userSpaceOnUse" x1="421.66" y1="505.83" x2="421.66" y2="584.11"><stop offset="0.000" stop-color="#9b9979"/><stop offset="0.000" stop-color="#9b9979"/><stop offset="0.089" stop-color="#8d8973"/><stop offset="0.509" stop-color="#6f6366"/><stop offset="0.750" stop-color="#5e5058"/></linearGradient><linearGradient id="ff81" gradientUnits="userSpaceOnUse" x1="425.65" y1="507.02" x2="425.65" y2="585.26"><stop offset="0.000" stop-color="#9b9979"/><stop offset="0.000" stop-color="#9b9979"/><stop offset="0.092" stop-color="#8d8973"/><stop offset="0.508" stop-color="#6f6366"/><stop offset="0.746" stop-color="#5e5058"/></linearGradient><linearGradient id="ff82" gradientUnits="userSpaceOnUse" x1="429.64" y1="508.22" x2="429.64" y2="586.41"><stop offset="0.000" stop-color="#9b9979"/><stop offset="0.000" stop-color="#9b9979"/><stop offset="0.095" stop-color="#8d8973"/><stop offset="0.506" stop-color="#6f6366"/><stop offset="0.742" stop-color="#5e5058"/></linearGradient><linearGradient id="ff83" gradientUnits="userSpaceOnUse" x1="433.63" y1="509.41" x2="433.63" y2="587.57"><stop offset="0.000" stop-color="#9b9a7a"/><stop offset="0.000" stop-color="#9b9a7a"/><stop offset="0.098" stop-color="#8d8873"/><stop offset="0.505" stop-color="#706466"/><stop offset="0.739" stop-color="#5e5058"/></linearGradient><linearGradient id="ff84" gradientUnits="userSpaceOnUse" x1="437.62" y1="510.60" x2="437.62" y2="588.72"><stop offset="0.000" stop-color="#9b9a7a"/><stop offset="0.000" stop-color="#9b9a7a"/><stop offset="0.101" stop-color="#8d8873"/><stop offset="0.503" stop-color="#706467"/><stop offset="0.735" stop-color="#5e5058"/></linearGradient><linearGradient id="ff85" gradientUnits="userSpaceOnUse" x1="441.61" y1="511.79" x2="441.61" y2="589.88"><stop offset="0.000" stop-color="#9b9a7a"/><stop offset="0.000" stop-color="#9b9a7a"/><stop offset="0.104" stop-color="#8d8873"/><stop offset="0.502" stop-color="#706467"/><stop offset="0.731" stop-color="#5e5058"/></linearGradient><linearGradient id="ff86" gradientUnits="userSpaceOnUse" x1="445.60" y1="512.98" x2="445.60" y2="591.03"><stop offset="0.000" stop-color="#9b9a7a"/><stop offset="0.000" stop-color="#9b9a7a"/><stop offset="0.108" stop-color="#8d8873"/><stop offset="0.500" stop-color="#706467"/><stop offset="0.727" stop-color="#5e5058"/></linearGradient><linearGradient id="ff87" gradientUnits="userSpaceOnUse" x1="449.59" y1="514.17" x2="449.59" y2="592.19"><stop offset="0.000" stop-color="#9b9a7a"/><stop offset="0.000" stop-color="#9b9a7a"/><stop offset="0.111" stop-color="#8d8873"/><stop offset="0.499" stop-color="#706468"/><stop offset="0.723" stop-color="#5e5058"/></linearGradient><linearGradient id="ff88" gradientUnits="userSpaceOnUse" x1="453.58" y1="515.36" x2="453.58" y2="593.34"><stop offset="0.000" stop-color="#9b9b7b"/><stop offset="0.000" stop-color="#9b9b7b"/><stop offset="0.114" stop-color="#8d8773"/><stop offset="0.497" stop-color="#716568"/><stop offset="0.720" stop-color="#5e5058"/></linearGradient><linearGradient id="ff89" gradientUnits="userSpaceOnUse" x1="457.57" y1="516.56" x2="457.57" y2="594.50"><stop offset="0.000" stop-color="#9b9b7b"/><stop offset="0.001" stop-color="#9b9b7b"/><stop offset="0.117" stop-color="#8d8773"/><stop offset="0.495" stop-color="#716568"/><stop offset="0.716" stop-color="#5e5058"/></linearGradient><linearGradient id="ff90" gradientUnits="userSpaceOnUse" x1="461.56" y1="517.75" x2="461.56" y2="595.65"><stop offset="0.000" stop-color="#9b9b7b"/><stop offset="0.002" stop-color="#9b9b7b"/><stop offset="0.120" stop-color="#8d8773"/><stop offset="0.494" stop-color="#716568"/><stop offset="0.712" stop-color="#5e5058"/></linearGradient><linearGradient id="ff91" gradientUnits="userSpaceOnUse" x1="465.55" y1="518.94" x2="465.55" y2="596.80"><stop offset="0.000" stop-color="#9c9b7b"/><stop offset="0.003" stop-color="#9c9b7b"/><stop offset="0.123" stop-color="#8c8772"/><stop offset="0.492" stop-color="#716569"/><stop offset="0.708" stop-color="#5e5058"/></linearGradient><linearGradient id="ff92" gradientUnits="userSpaceOnUse" x1="469.54" y1="520.13" x2="469.54" y2="597.96"><stop offset="0.000" stop-color="#9c9b7b"/><stop offset="0.005" stop-color="#9c9b7b"/><stop offset="0.127" stop-color="#8c8772"/><stop offset="0.491" stop-color="#716569"/><stop offset="0.704" stop-color="#5e5058"/></linearGradient><linearGradient id="ff93" gradientUnits="userSpaceOnUse" x1="473.53" y1="521.32" x2="473.53" y2="599.11"><stop offset="0.000" stop-color="#9c9c7c"/><stop offset="0.006" stop-color="#9c9c7c"/><stop offset="0.130" stop-color="#8c8672"/><stop offset="0.489" stop-color="#726669"/><stop offset="0.701" stop-color="#5e5058"/></linearGradient><linearGradient id="ff94" gradientUnits="userSpaceOnUse" x1="477.52" y1="522.51" x2="477.52" y2="600.27"><stop offset="0.000" stop-color="#9c9c7c"/><stop offset="0.007" stop-color="#9c9c7c"/><stop offset="0.133" stop-color="#8c8672"/><stop offset="0.488" stop-color="#72666a"/><stop offset="0.697" stop-color="#5e5058"/></linearGradient><linearGradient id="ff95" gradientUnits="userSpaceOnUse" x1="481.51" y1="523.70" x2="481.51" y2="601.42"><stop offset="0.002" stop-color="#9c9c7c"/><stop offset="0.008" stop-color="#9c9c7c"/><stop offset="0.136" stop-color="#8c8672"/><stop offset="0.486" stop-color="#72666a"/><stop offset="0.693" stop-color="#5e5058"/></linearGradient><linearGradient id="ffl0" gradientUnits="userSpaceOnUse" x1="75.57" y1="454.06" x2="75.57" y2="483.96"><stop offset="0.002" stop-color="#2a2a80"/><stop offset="0.038" stop-color="#3a3070"/><stop offset="0.185" stop-color="#5e5064"/><stop offset="0.288" stop-color="#66565e"/><stop offset="0.407" stop-color="#62505a"/></linearGradient><linearGradient id="ffl1" gradientUnits="userSpaceOnUse" x1="80.10" y1="451.51" x2="80.10" y2="485.27"><stop offset="0.001" stop-color="#2a2a80"/><stop offset="0.092" stop-color="#3a3070"/><stop offset="0.274" stop-color="#5e5064"/><stop offset="0.370" stop-color="#66565e"/><stop offset="0.472" stop-color="#62505a"/></linearGradient><linearGradient id="ffl2" gradientUnits="userSpaceOnUse" x1="84.63" y1="448.95" x2="84.63" y2="486.58"><stop offset="0.001" stop-color="#2a2a80"/><stop offset="0.135" stop-color="#3a3070"/><stop offset="0.345" stop-color="#5e5064"/><stop offset="0.435" stop-color="#66565e"/><stop offset="0.524" stop-color="#62505a"/></linearGradient><linearGradient id="ffl3" gradientUnits="userSpaceOnUse" x1="89.17" y1="446.39" x2="89.17" y2="487.89"><stop offset="0.001" stop-color="#2a2a80"/><stop offset="0.170" stop-color="#3a3070"/><stop offset="0.402" stop-color="#5e5064"/><stop offset="0.489" stop-color="#66565e"/><stop offset="0.567" stop-color="#62505a"/></linearGradient><linearGradient id="ffl4" gradientUnits="userSpaceOnUse" x1="93.70" y1="443.84" x2="93.70" y2="489.20"><stop offset="0.000" stop-color="#2a2a80"/><stop offset="0.199" stop-color="#3a3070"/><stop offset="0.450" stop-color="#5e5064"/><stop offset="0.533" stop-color="#66565e"/><stop offset="0.602" stop-color="#62505a"/></linearGradient><linearGradient id="ffl5" gradientUnits="userSpaceOnUse" x1="98.23" y1="441.28" x2="98.23" y2="490.51"><stop offset="0.000" stop-color="#2a2a80"/><stop offset="0.224" stop-color="#3a3070"/><stop offset="0.490" stop-color="#5e5064"/><stop offset="0.570" stop-color="#66565e"/><stop offset="0.632" stop-color="#62505a"/></linearGradient><clipPath id="aboveframe"><polygon points="100.5,380 250,279.7 270,266.7 300,233 319.8,210.8 327.4,204.7 343,184 755,276 763.3,340.8 485,525.6 100.5,420"/></clipPath><filter id="blur12" x="-30%" y="-30%" width="160%" height="160%"><feGaussianBlur stdDeviation="12"/></filter><filter id="blur16" x="-30%" y="-30%" width="160%" height="160%"><feGaussianBlur stdDeviation="16"/></filter><clipPath id="landclip"><polygon points="343.3,183.5 345.8,184.2 348.3,185.5 350.8,186.1 353.3,186.7 355.9,187.4 358.4,187.0 360.9,186.7 363.4,186.6 365.9,186.8 368.4,185.8 370.9,185.3 373.4,185.2 376.0,186.2 378.5,187.0 381.0,186.8 383.5,188.1 386.0,189.4 388.5,190.1 391.0,190.8 393.5,190.7 396.0,190.3 398.6,190.7 401.1,190.4 403.6,190.3 406.1,190.3 408.6,191.3 411.1,193.6 413.6,195.9 416.1,198.6 418.6,198.9 421.2,199.5 423.7,199.8 426.2,200.4 428.7,200.7 431.2,200.7 433.7,201.8 436.2,203.3 438.7,204.8 441.3,206.0 443.8,206.6 446.3,207.1 448.8,207.6 451.3,207.8 453.8,209.2 456.3,209.9 458.8,211.3 461.3,211.9 463.9,213.4 466.4,214.6 468.9,214.6 471.4,214.9 473.9,216.3 476.4,217.0 478.9,218.4 481.4,219.0 483.9,219.0 486.5,219.8 489.0,220.8 491.5,221.0 494.0,221.0 496.5,221.3 499.0,222.6 501.5,223.6 504.0,223.5 506.6,223.7 509.1,223.6 511.6,223.6 514.1,224.7 516.6,224.9 519.1,225.7 521.6,226.2 524.1,226.4 526.6,227.5 529.2,227.8 531.7,228.7 534.2,229.1 536.7,229.8 539.2,230.4 541.7,231.1 544.2,232.4 546.7,233.4 549.2,233.5 551.8,234.6 554.3,234.6 556.8,234.9 559.3,235.9 561.8,236.6 564.3,236.4 566.8,237.7 569.3,237.7 571.9,237.7 574.4,238.7 576.9,239.0 579.4,239.2 581.9,239.1 584.4,239.5 586.9,240.2 589.4,240.6 591.9,241.3 594.5,241.7 597.0,242.3 599.5,243.6 602.0,244.1 604.5,244.8 607.0,246.0 609.5,245.9 612.0,245.8 614.6,246.9 617.1,247.9 619.6,247.9 622.1,247.8 624.6,248.7 627.1,249.8 629.6,249.8 632.1,250.9 634.6,252.0 637.2,252.6 639.7,252.9 642.2,252.7 644.7,252.6 647.2,253.9 649.7,254.0 652.2,254.9 654.7,255.1 657.2,256.2 659.8,256.9 662.3,257.1 664.8,257.2 667.3,258.1 669.8,258.0 672.3,258.1 674.8,258.7 677.3,259.8 679.9,260.5 682.4,260.7 684.9,261.8 687.4,261.9 689.9,261.6 692.4,261.7 694.9,262.2 697.4,262.7 699.9,263.2 702.5,263.7 705.0,264.3 707.5,264.7 710.0,265.2 712.5,266.3 715.0,267.6 717.5,268.4 720.0,269.2 722.5,269.8 725.1,269.8 727.6,269.5 730.1,269.3 732.6,270.5 735.1,271.3 737.6,272.5 740.1,272.3 742.6,273.0 745.2,273.5 747.7,274.4 750.2,274.6 752.7,275.9 755.2,275.7 755.2,276.3 755.2,313.0 716.3,338.0 677.5,363.0 620.0,400.0 580.0,426.0 560.0,439.0 546.8,447.6 538.4,449.7 523.6,449.7 515.1,445.4 500.3,441.2 489.8,440.2 470.7,440.2 462.3,437.0 453.8,440.2 432.7,441.2 422.1,444.4 408.5,449.6 384.0,444.2 381.3,434.6 362.3,433.3 337.9,431.9 316.1,425.1 303.4,410.0 301.6,387.5 312.5,373.0 330.6,358.5 319.7,351.2 316.1,329.5 330.6,322.2 334.2,311.3 312.5,316.8 290.7,318.6 276.2,313.2 272.6,307.7 287.1,305.9 312.5,296.9 337.9,295.0 352.4,286.0 341.5,278.7 348.7,275.1 370.5,262.4 359.6,257.0 363.2,249.7 392.2,248.0 410.3,235.2 385.0,228.0 366.9,235.2 365.0,217.0 327.0,204.4"/></clipPath><linearGradient id="bg0" gradientUnits="userSpaceOnUse" x1="0" y1="195.4" x2="0" y2="225.5"><stop offset="0" stop-color="#399246"/><stop offset="0.4" stop-color="#258a2c"/><stop offset="1" stop-color="#1c8220"/></linearGradient><linearGradient id="bg1" gradientUnits="userSpaceOnUse" x1="0" y1="195.8" x2="0" y2="236.0"><stop offset="0" stop-color="#3a9246"/><stop offset="0.4" stop-color="#258a2c"/><stop offset="1" stop-color="#1c8220"/></linearGradient><linearGradient id="bg2" gradientUnits="userSpaceOnUse" x1="0" y1="199.6" x2="0" y2="233.3"><stop offset="0" stop-color="#379143"/><stop offset="0.4" stop-color="#258a2c"/><stop offset="1" stop-color="#1c8220"/></linearGradient><linearGradient id="bg3" gradientUnits="userSpaceOnUse" x1="0" y1="201.4" x2="0" y2="234.7"><stop offset="0" stop-color="#3e954c"/><stop offset="0.4" stop-color="#258a2c"/><stop offset="1" stop-color="#1c8220"/></linearGradient><linearGradient id="bg4" gradientUnits="userSpaceOnUse" x1="0" y1="200.7" x2="0" y2="243.2"><stop offset="0" stop-color="#34903f"/><stop offset="0.4" stop-color="#258a2c"/><stop offset="1" stop-color="#1c8220"/></linearGradient><linearGradient id="bg5" gradientUnits="userSpaceOnUse" x1="0" y1="201.1" x2="0" y2="243.9"><stop offset="0" stop-color="#389143"/><stop offset="0.4" stop-color="#258a2c"/><stop offset="1" stop-color="#1c8220"/></linearGradient><linearGradient id="bg6" gradientUnits="userSpaceOnUse" x1="0" y1="205.0" x2="0" y2="237.1"><stop offset="0" stop-color="#429650"/><stop offset="0.4" stop-color="#258a2c"/><stop offset="1" stop-color="#1c8220"/></linearGradient><linearGradient id="bg7" gradientUnits="userSpaceOnUse" x1="0" y1="204.7" x2="0" y2="241.5"><stop offset="0" stop-color="#3b9347"/><stop offset="0.4" stop-color="#258a2c"/><stop offset="1" stop-color="#1c8220"/></linearGradient><linearGradient id="bg8" gradientUnits="userSpaceOnUse" x1="0" y1="205.9" x2="0" y2="241.0"><stop offset="0" stop-color="#369141"/><stop offset="0.4" stop-color="#258a2c"/><stop offset="1" stop-color="#1c8220"/></linearGradient><linearGradient id="bg9" gradientUnits="userSpaceOnUse" x1="0" y1="213.4" x2="0" y2="240.8"><stop offset="0" stop-color="#318e3b"/><stop offset="0.4" stop-color="#258a2c"/><stop offset="1" stop-color="#1c8220"/></linearGradient><linearGradient id="bg10" gradientUnits="userSpaceOnUse" x1="0" y1="211.2" x2="0" y2="244.8"><stop offset="0" stop-color="#3a9346"/><stop offset="0.4" stop-color="#258a2c"/><stop offset="1" stop-color="#1c8220"/></linearGradient><linearGradient id="bg11" gradientUnits="userSpaceOnUse" x1="0" y1="208.9" x2="0" y2="252.7"><stop offset="0" stop-color="#40954d"/><stop offset="0.4" stop-color="#258a2c"/><stop offset="1" stop-color="#1c8220"/></linearGradient><linearGradient id="bg12" gradientUnits="userSpaceOnUse" x1="0" y1="212.2" x2="0" y2="250.0"><stop offset="0" stop-color="#429650"/><stop offset="0.4" stop-color="#258a2c"/><stop offset="1" stop-color="#1c8220"/></linearGradient><linearGradient id="bg13" gradientUnits="userSpaceOnUse" x1="0" y1="219.3" x2="0" y2="246.2"><stop offset="0" stop-color="#379143"/><stop offset="0.4" stop-color="#258a2c"/><stop offset="1" stop-color="#1c8220"/></linearGradient><linearGradient id="bg14" gradientUnits="userSpaceOnUse" x1="0" y1="213.6" x2="0" y2="249.0"><stop offset="0" stop-color="#369142"/><stop offset="0.4" stop-color="#258a2c"/><stop offset="1" stop-color="#1c8220"/></linearGradient><linearGradient id="bg15" gradientUnits="userSpaceOnUse" x1="0" y1="218.1" x2="0" y2="255.3"><stop offset="0" stop-color="#389244"/><stop offset="0.4" stop-color="#258a2c"/><stop offset="1" stop-color="#1c8220"/></linearGradient><linearGradient id="bg16" gradientUnits="userSpaceOnUse" x1="0" y1="216.8" x2="0" y2="247.5"><stop offset="0" stop-color="#318e3b"/><stop offset="0.4" stop-color="#258a2c"/><stop offset="1" stop-color="#1c8220"/></linearGradient><linearGradient id="bg17" gradientUnits="userSpaceOnUse" x1="0" y1="215.0" x2="0" y2="255.7"><stop offset="0" stop-color="#3e944b"/><stop offset="0.4" stop-color="#258a2c"/><stop offset="1" stop-color="#1c8220"/></linearGradient><linearGradient id="bg18" gradientUnits="userSpaceOnUse" x1="0" y1="223.5" x2="0" y2="257.4"><stop offset="0" stop-color="#469855"/><stop offset="0.4" stop-color="#258a2c"/><stop offset="1" stop-color="#1c8220"/></linearGradient><linearGradient id="bg19" gradientUnits="userSpaceOnUse" x1="0" y1="221.8" x2="0" y2="255.8"><stop offset="0" stop-color="#318e3c"/><stop offset="0.4" stop-color="#258a2c"/><stop offset="1" stop-color="#1c8220"/></linearGradient><linearGradient id="bg20" gradientUnits="userSpaceOnUse" x1="0" y1="226.9" x2="0" y2="261.1"><stop offset="0" stop-color="#34903e"/><stop offset="0.4" stop-color="#258a2c"/><stop offset="1" stop-color="#1c8220"/></linearGradient><linearGradient id="bg21" gradientUnits="userSpaceOnUse" x1="0" y1="222.1" x2="0" y2="265.3"><stop offset="0" stop-color="#2e8d38"/><stop offset="0.4" stop-color="#258a2c"/><stop offset="1" stop-color="#1c8220"/></linearGradient><linearGradient id="bg22" gradientUnits="userSpaceOnUse" x1="0" y1="228.1" x2="0" y2="267.7"><stop offset="0" stop-color="#359040"/><stop offset="0.4" stop-color="#258a2c"/><stop offset="1" stop-color="#1c8220"/></linearGradient><linearGradient id="bg23" gradientUnits="userSpaceOnUse" x1="0" y1="227.5" x2="0" y2="265.4"><stop offset="0" stop-color="#338f3d"/><stop offset="0.4" stop-color="#258a2c"/><stop offset="1" stop-color="#1c8220"/></linearGradient><linearGradient id="bg24" gradientUnits="userSpaceOnUse" x1="0" y1="230.3" x2="0" y2="267.5"><stop offset="0" stop-color="#3d9449"/><stop offset="0.4" stop-color="#258a2c"/><stop offset="1" stop-color="#1c8220"/></linearGradient><linearGradient id="bg25" gradientUnits="userSpaceOnUse" x1="0" y1="234.4" x2="0" y2="266.6"><stop offset="0" stop-color="#41964e"/><stop offset="0.4" stop-color="#258a2c"/><stop offset="1" stop-color="#1c8220"/></linearGradient><linearGradient id="bg26" gradientUnits="userSpaceOnUse" x1="0" y1="238.6" x2="0" y2="267.2"><stop offset="0" stop-color="#328f3c"/><stop offset="0.4" stop-color="#258a2c"/><stop offset="1" stop-color="#1c8220"/></linearGradient><linearGradient id="bg27" gradientUnits="userSpaceOnUse" x1="0" y1="239.5" x2="0" y2="276.0"><stop offset="0" stop-color="#379142"/><stop offset="0.4" stop-color="#258a2c"/><stop offset="1" stop-color="#1c8220"/></linearGradient><linearGradient id="bg28" gradientUnits="userSpaceOnUse" x1="0" y1="242.5" x2="0" y2="271.2"><stop offset="0" stop-color="#3c9349"/><stop offset="0.4" stop-color="#258a2c"/><stop offset="1" stop-color="#1c8220"/></linearGradient><linearGradient id="bg29" gradientUnits="userSpaceOnUse" x1="0" y1="239.7" x2="0" y2="272.0"><stop offset="0" stop-color="#399245"/><stop offset="0.4" stop-color="#258a2c"/><stop offset="1" stop-color="#1c8220"/></linearGradient><linearGradient id="bg30" gradientUnits="userSpaceOnUse" x1="0" y1="245.9" x2="0" y2="272.7"><stop offset="0" stop-color="#3b9348"/><stop offset="0.4" stop-color="#258a2c"/><stop offset="1" stop-color="#1c8220"/></linearGradient><linearGradient id="bg31" gradientUnits="userSpaceOnUse" x1="0" y1="238.0" x2="0" y2="280.2"><stop offset="0" stop-color="#3b9348"/><stop offset="0.4" stop-color="#258a2c"/><stop offset="1" stop-color="#1c8220"/></linearGradient><linearGradient id="bg32" gradientUnits="userSpaceOnUse" x1="0" y1="245.0" x2="0" y2="278.5"><stop offset="0" stop-color="#3f954d"/><stop offset="0.4" stop-color="#258a2c"/><stop offset="1" stop-color="#1c8220"/></linearGradient><linearGradient id="bg33" gradientUnits="userSpaceOnUse" x1="0" y1="239.3" x2="0" y2="279.9"><stop offset="0" stop-color="#379142"/><stop offset="0.4" stop-color="#258a2c"/><stop offset="1" stop-color="#1c8220"/></linearGradient><linearGradient id="bg34" gradientUnits="userSpaceOnUse" x1="0" y1="242.0" x2="0" y2="281.0"><stop offset="0" stop-color="#2f8d38"/><stop offset="0.4" stop-color="#258a2c"/><stop offset="1" stop-color="#1c8220"/></linearGradient><linearGradient id="bg35" gradientUnits="userSpaceOnUse" x1="0" y1="242.0" x2="0" y2="276.6"><stop offset="0" stop-color="#3e944b"/><stop offset="0.4" stop-color="#258a2c"/><stop offset="1" stop-color="#1c8220"/></linearGradient><linearGradient id="bg36" gradientUnits="userSpaceOnUse" x1="0" y1="246.6" x2="0" y2="282.2"><stop offset="0" stop-color="#399245"/><stop offset="0.4" stop-color="#258a2c"/><stop offset="1" stop-color="#1c8220"/></linearGradient><linearGradient id="bg37" gradientUnits="userSpaceOnUse" x1="0" y1="248.7" x2="0" y2="285.4"><stop offset="0" stop-color="#389244"/><stop offset="0.4" stop-color="#258a2c"/><stop offset="1" stop-color="#1c8220"/></linearGradient><linearGradient id="bg38" gradientUnits="userSpaceOnUse" x1="0" y1="243.2" x2="0" y2="281.2"><stop offset="0" stop-color="#359040"/><stop offset="0.4" stop-color="#258a2c"/><stop offset="1" stop-color="#1c8220"/></linearGradient><linearGradient id="bg39" gradientUnits="userSpaceOnUse" x1="0" y1="251.4" x2="0" y2="281.5"><stop offset="0" stop-color="#348f3e"/><stop offset="0.4" stop-color="#258a2c"/><stop offset="1" stop-color="#1c8220"/></linearGradient><linearGradient id="bg40" gradientUnits="userSpaceOnUse" x1="0" y1="247.7" x2="0" y2="292.5"><stop offset="0" stop-color="#359040"/><stop offset="0.4" stop-color="#258a2c"/><stop offset="1" stop-color="#1c8220"/></linearGradient><linearGradient id="bg41" gradientUnits="userSpaceOnUse" x1="0" y1="250.2" x2="0" y2="289.1"><stop offset="0" stop-color="#399245"/><stop offset="0.4" stop-color="#258a2c"/><stop offset="1" stop-color="#1c8220"/></linearGradient><linearGradient id="bg42" gradientUnits="userSpaceOnUse" x1="0" y1="250.2" x2="0" y2="283.5"><stop offset="0" stop-color="#3b9348"/><stop offset="0.4" stop-color="#258a2c"/><stop offset="1" stop-color="#1c8220"/></linearGradient><linearGradient id="bg43" gradientUnits="userSpaceOnUse" x1="0" y1="255.9" x2="0" y2="285.3"><stop offset="0" stop-color="#369041"/><stop offset="0.4" stop-color="#258a2c"/><stop offset="1" stop-color="#1c8220"/></linearGradient><linearGradient id="bg44" gradientUnits="userSpaceOnUse" x1="0" y1="258.1" x2="0" y2="289.4"><stop offset="0" stop-color="#469855"/><stop offset="0.4" stop-color="#258a2c"/><stop offset="1" stop-color="#1c8220"/></linearGradient><linearGradient id="bg45" gradientUnits="userSpaceOnUse" x1="0" y1="255.4" x2="0" y2="286.9"><stop offset="0" stop-color="#489958"/><stop offset="0.4" stop-color="#258a2c"/><stop offset="1" stop-color="#1c8220"/></linearGradient><linearGradient id="bg46" gradientUnits="userSpaceOnUse" x1="0" y1="255.8" x2="0" y2="287.5"><stop offset="0" stop-color="#399245"/><stop offset="0.4" stop-color="#258a2c"/><stop offset="1" stop-color="#1c8220"/></linearGradient><linearGradient id="bg47" gradientUnits="userSpaceOnUse" x1="0" y1="254.2" x2="0" y2="289.0"><stop offset="0" stop-color="#359040"/><stop offset="0.4" stop-color="#258a2c"/><stop offset="1" stop-color="#1c8220"/></linearGradient><linearGradient id="bg48" gradientUnits="userSpaceOnUse" x1="0" y1="255.0" x2="0" y2="300.1"><stop offset="0" stop-color="#379143"/><stop offset="0.4" stop-color="#258a2c"/><stop offset="1" stop-color="#1c8220"/></linearGradient><linearGradient id="bg49" gradientUnits="userSpaceOnUse" x1="0" y1="257.6" x2="0" y2="298.3"><stop offset="0" stop-color="#40964e"/><stop offset="0.4" stop-color="#258a2c"/><stop offset="1" stop-color="#1c8220"/></linearGradient><linearGradient id="bg50" gradientUnits="userSpaceOnUse" x1="0" y1="265.8" x2="0" y2="299.1"><stop offset="0" stop-color="#40954d"/><stop offset="0.4" stop-color="#258a2c"/><stop offset="1" stop-color="#1c8220"/></linearGradient><linearGradient id="bg51" gradientUnits="userSpaceOnUse" x1="0" y1="259.1" x2="0" y2="295.3"><stop offset="0" stop-color="#3a9246"/><stop offset="0.4" stop-color="#258a2c"/><stop offset="1" stop-color="#1c8220"/></linearGradient><linearGradient id="bg52" gradientUnits="userSpaceOnUse" x1="0" y1="269.4" x2="0" y2="302.6"><stop offset="0" stop-color="#369142"/><stop offset="0.4" stop-color="#258a2c"/><stop offset="1" stop-color="#1c8220"/></linearGradient><linearGradient id="bg53" gradientUnits="userSpaceOnUse" x1="0" y1="265.2" x2="0" y2="300.8"><stop offset="0" stop-color="#449752"/><stop offset="0.4" stop-color="#258a2c"/><stop offset="1" stop-color="#1c8220"/></linearGradient><linearGradient id="bg54" gradientUnits="userSpaceOnUse" x1="0" y1="268.2" x2="0" y2="305.4"><stop offset="0" stop-color="#328f3d"/><stop offset="0.4" stop-color="#258a2c"/><stop offset="1" stop-color="#1c8220"/></linearGradient><linearGradient id="bg55" gradientUnits="userSpaceOnUse" x1="0" y1="268.1" x2="0" y2="305.6"><stop offset="0" stop-color="#318e3b"/><stop offset="0.4" stop-color="#258a2c"/><stop offset="1" stop-color="#1c8220"/></linearGradient><linearGradient id="bg56" gradientUnits="userSpaceOnUse" x1="0" y1="274.8" x2="0" y2="310.4"><stop offset="0" stop-color="#318e3b"/><stop offset="0.4" stop-color="#258a2c"/><stop offset="1" stop-color="#1c8220"/></linearGradient><linearGradient id="bg57" gradientUnits="userSpaceOnUse" x1="0" y1="269.7" x2="0" y2="311.8"><stop offset="0" stop-color="#40954d"/><stop offset="0.4" stop-color="#258a2c"/><stop offset="1" stop-color="#1c8220"/></linearGradient><linearGradient id="bg58" gradientUnits="userSpaceOnUse" x1="0" y1="271.0" x2="0" y2="307.3"><stop offset="0" stop-color="#369041"/><stop offset="0.4" stop-color="#258a2c"/><stop offset="1" stop-color="#1c8220"/></linearGradient><linearGradient id="bg59" gradientUnits="userSpaceOnUse" x1="0" y1="280.5" x2="0" y2="312.3"><stop offset="0" stop-color="#3b9348"/><stop offset="0.4" stop-color="#258a2c"/><stop offset="1" stop-color="#1c8220"/></linearGradient><linearGradient id="bg60" gradientUnits="userSpaceOnUse" x1="0" y1="279.9" x2="0" y2="312.2"><stop offset="0" stop-color="#3c9348"/><stop offset="0.4" stop-color="#258a2c"/><stop offset="1" stop-color="#1c8220"/></linearGradient><linearGradient id="bg61" gradientUnits="userSpaceOnUse" x1="0" y1="275.5" x2="0" y2="311.6"><stop offset="0" stop-color="#359040"/><stop offset="0.4" stop-color="#258a2c"/><stop offset="1" stop-color="#1c8220"/></linearGradient><linearGradient id="bg62" gradientUnits="userSpaceOnUse" x1="0" y1="279.4" x2="0" y2="308.9"><stop offset="0" stop-color="#469855"/><stop offset="0.4" stop-color="#258a2c"/><stop offset="1" stop-color="#1c8220"/></linearGradient><linearGradient id="bg63" gradientUnits="userSpaceOnUse" x1="0" y1="284.6" x2="0" y2="312.5"><stop offset="0" stop-color="#2f8d39"/><stop offset="0.4" stop-color="#258a2c"/><stop offset="1" stop-color="#1c8220"/></linearGradient><linearGradient id="bg64" gradientUnits="userSpaceOnUse" x1="0" y1="281.8" x2="0" y2="317.1"><stop offset="0" stop-color="#2e8d38"/><stop offset="0.4" stop-color="#258a2c"/><stop offset="1" stop-color="#1c8220"/></linearGradient><linearGradient id="bg65" gradientUnits="userSpaceOnUse" x1="0" y1="287.3" x2="0" y2="320.8"><stop offset="0" stop-color="#389244"/><stop offset="0.4" stop-color="#258a2c"/><stop offset="1" stop-color="#1c8220"/></linearGradient><linearGradient id="bg66" gradientUnits="userSpaceOnUse" x1="0" y1="283.7" x2="0" y2="314.4"><stop offset="0" stop-color="#499a59"/><stop offset="0.4" stop-color="#258a2c"/><stop offset="1" stop-color="#1c8220"/></linearGradient><linearGradient id="bg67" gradientUnits="userSpaceOnUse" x1="0" y1="286.5" x2="0" y2="321.9"><stop offset="0" stop-color="#379143"/><stop offset="0.4" stop-color="#258a2c"/><stop offset="1" stop-color="#1c8220"/></linearGradient><linearGradient id="bg68" gradientUnits="userSpaceOnUse" x1="0" y1="289.4" x2="0" y2="321.4"><stop offset="0" stop-color="#2e8d38"/><stop offset="0.4" stop-color="#258a2c"/><stop offset="1" stop-color="#1c8220"/></linearGradient><linearGradient id="bg69" gradientUnits="userSpaceOnUse" x1="0" y1="288.8" x2="0" y2="329.5"><stop offset="0" stop-color="#359040"/><stop offset="0.4" stop-color="#258a2c"/><stop offset="1" stop-color="#1c8220"/></linearGradient><linearGradient id="bg70" gradientUnits="userSpaceOnUse" x1="0" y1="293.9" x2="0" y2="329.2"><stop offset="0" stop-color="#369141"/><stop offset="0.4" stop-color="#258a2c"/><stop offset="1" stop-color="#1c8220"/></linearGradient><linearGradient id="bg71" gradientUnits="userSpaceOnUse" x1="0" y1="300.1" x2="0" y2="342.5"><stop offset="0" stop-color="#40954d"/><stop offset="0.4" stop-color="#258a2c"/><stop offset="1" stop-color="#1c8220"/></linearGradient><linearGradient id="bg72" gradientUnits="userSpaceOnUse" x1="0" y1="304.3" x2="0" y2="338.4"><stop offset="0" stop-color="#369141"/><stop offset="0.4" stop-color="#258a2c"/><stop offset="1" stop-color="#1c8220"/></linearGradient><linearGradient id="bg73" gradientUnits="userSpaceOnUse" x1="0" y1="304.0" x2="0" y2="333.6"><stop offset="0" stop-color="#359040"/><stop offset="0.4" stop-color="#258a2c"/><stop offset="1" stop-color="#1c8220"/></linearGradient><linearGradient id="bg74" gradientUnits="userSpaceOnUse" x1="0" y1="308.2" x2="0" y2="336.6"><stop offset="0" stop-color="#40954e"/><stop offset="0.4" stop-color="#258a2c"/><stop offset="1" stop-color="#1c8220"/></linearGradient><linearGradient id="bg75" gradientUnits="userSpaceOnUse" x1="0" y1="302.8" x2="0" y2="336.9"><stop offset="0" stop-color="#389244"/><stop offset="0.4" stop-color="#258a2c"/><stop offset="1" stop-color="#1c8220"/></linearGradient><linearGradient id="bg76" gradientUnits="userSpaceOnUse" x1="0" y1="306.1" x2="0" y2="341.7"><stop offset="0" stop-color="#359040"/><stop offset="0.4" stop-color="#258a2c"/><stop offset="1" stop-color="#1c8220"/></linearGradient><linearGradient id="bg77" gradientUnits="userSpaceOnUse" x1="0" y1="308.3" x2="0" y2="338.7"><stop offset="0" stop-color="#348f3e"/><stop offset="0.4" stop-color="#258a2c"/><stop offset="1" stop-color="#1c8220"/></linearGradient><linearGradient id="bg78" gradientUnits="userSpaceOnUse" x1="0" y1="301.0" x2="0" y2="342.8"><stop offset="0" stop-color="#338f3e"/><stop offset="0.4" stop-color="#258a2c"/><stop offset="1" stop-color="#1c8220"/></linearGradient><linearGradient id="bg79" gradientUnits="userSpaceOnUse" x1="0" y1="306.9" x2="0" y2="340.3"><stop offset="0" stop-color="#308e3a"/><stop offset="0.4" stop-color="#258a2c"/><stop offset="1" stop-color="#1c8220"/></linearGradient><linearGradient id="bg80" gradientUnits="userSpaceOnUse" x1="0" y1="303.4" x2="0" y2="338.9"><stop offset="0" stop-color="#308e3a"/><stop offset="0.4" stop-color="#258a2c"/><stop offset="1" stop-color="#1c8220"/></linearGradient><linearGradient id="bg81" gradientUnits="userSpaceOnUse" x1="0" y1="306.6" x2="0" y2="346.7"><stop offset="0" stop-color="#338f3d"/><stop offset="0.4" stop-color="#258a2c"/><stop offset="1" stop-color="#1c8220"/></linearGradient><linearGradient id="bg82" gradientUnits="userSpaceOnUse" x1="0" y1="310.6" x2="0" y2="348.9"><stop offset="0" stop-color="#3d944a"/><stop offset="0.4" stop-color="#258a2c"/><stop offset="1" stop-color="#1c8220"/></linearGradient><linearGradient id="bg83" gradientUnits="userSpaceOnUse" x1="0" y1="306.2" x2="0" y2="351.4"><stop offset="0" stop-color="#359041"/><stop offset="0.4" stop-color="#258a2c"/><stop offset="1" stop-color="#1c8220"/></linearGradient><linearGradient id="bg84" gradientUnits="userSpaceOnUse" x1="0" y1="309.8" x2="0" y2="341.6"><stop offset="0" stop-color="#439752"/><stop offset="0.4" stop-color="#258a2c"/><stop offset="1" stop-color="#1c8220"/></linearGradient><linearGradient id="bg85" gradientUnits="userSpaceOnUse" x1="0" y1="315.4" x2="0" y2="346.8"><stop offset="0" stop-color="#3b9348"/><stop offset="0.4" stop-color="#258a2c"/><stop offset="1" stop-color="#1c8220"/></linearGradient><linearGradient id="bg86" gradientUnits="userSpaceOnUse" x1="0" y1="313.8" x2="0" y2="351.8"><stop offset="0" stop-color="#34903f"/><stop offset="0.4" stop-color="#258a2c"/><stop offset="1" stop-color="#1c8220"/></linearGradient><linearGradient id="bg87" gradientUnits="userSpaceOnUse" x1="0" y1="317.8" x2="0" y2="346.3"><stop offset="0" stop-color="#34903f"/><stop offset="0.4" stop-color="#258a2c"/><stop offset="1" stop-color="#1c8220"/></linearGradient><linearGradient id="bg88" gradientUnits="userSpaceOnUse" x1="0" y1="321.7" x2="0" y2="349.7"><stop offset="0" stop-color="#399246"/><stop offset="0.4" stop-color="#258a2c"/><stop offset="1" stop-color="#1c8220"/></linearGradient><linearGradient id="bg89" gradientUnits="userSpaceOnUse" x1="0" y1="314.7" x2="0" y2="352.5"><stop offset="0" stop-color="#399245"/><stop offset="0.4" stop-color="#258a2c"/><stop offset="1" stop-color="#1c8220"/></linearGradient><linearGradient id="bg90" gradientUnits="userSpaceOnUse" x1="0" y1="321.5" x2="0" y2="354.7"><stop offset="0" stop-color="#34903f"/><stop offset="0.4" stop-color="#258a2c"/><stop offset="1" stop-color="#1c8220"/></linearGradient><linearGradient id="bg91" gradientUnits="userSpaceOnUse" x1="0" y1="319.4" x2="0" y2="360.3"><stop offset="0" stop-color="#3c9449"/><stop offset="0.4" stop-color="#258a2c"/><stop offset="1" stop-color="#1c8220"/></linearGradient><linearGradient id="bg92" gradientUnits="userSpaceOnUse" x1="0" y1="322.0" x2="0" y2="355.1"><stop offset="0" stop-color="#379142"/><stop offset="0.4" stop-color="#258a2c"/><stop offset="1" stop-color="#1c8220"/></linearGradient><linearGradient id="bg93" gradientUnits="userSpaceOnUse" x1="0" y1="325.8" x2="0" y2="360.1"><stop offset="0" stop-color="#379142"/><stop offset="0.4" stop-color="#258a2c"/><stop offset="1" stop-color="#1c8220"/></linearGradient><linearGradient id="bg94" gradientUnits="userSpaceOnUse" x1="0" y1="326.5" x2="0" y2="366.6"><stop offset="0" stop-color="#429650"/><stop offset="0.4" stop-color="#258a2c"/><stop offset="1" stop-color="#1c8220"/></linearGradient><linearGradient id="bg95" gradientUnits="userSpaceOnUse" x1="0" y1="334.6" x2="0" y2="369.7"><stop offset="0" stop-color="#3d944b"/><stop offset="0.4" stop-color="#258a2c"/><stop offset="1" stop-color="#1c8220"/></linearGradient><linearGradient id="bg96" gradientUnits="userSpaceOnUse" x1="0" y1="333.0" x2="0" y2="366.5"><stop offset="0" stop-color="#34903f"/><stop offset="0.4" stop-color="#258a2c"/><stop offset="1" stop-color="#1c8220"/></linearGradient><linearGradient id="bg97" gradientUnits="userSpaceOnUse" x1="0" y1="335.2" x2="0" y2="361.9"><stop offset="0" stop-color="#3a9346"/><stop offset="0.4" stop-color="#258a2c"/><stop offset="1" stop-color="#1c8220"/></linearGradient><linearGradient id="bg98" gradientUnits="userSpaceOnUse" x1="0" y1="342.9" x2="0" y2="368.0"><stop offset="0" stop-color="#379143"/><stop offset="0.4" stop-color="#258a2c"/><stop offset="1" stop-color="#1c8220"/></linearGradient><linearGradient id="bg99" gradientUnits="userSpaceOnUse" x1="0" y1="341.9" x2="0" y2="378.6"><stop offset="0" stop-color="#3c9449"/><stop offset="0.4" stop-color="#258a2c"/><stop offset="1" stop-color="#1c8220"/></linearGradient><linearGradient id="bg100" gradientUnits="userSpaceOnUse" x1="0" y1="340.0" x2="0" y2="381.3"><stop offset="0" stop-color="#3f954c"/><stop offset="0.4" stop-color="#258a2c"/><stop offset="1" stop-color="#1c8220"/></linearGradient><linearGradient id="bg101" gradientUnits="userSpaceOnUse" x1="0" y1="347.1" x2="0" y2="385.0"><stop offset="0" stop-color="#338f3d"/><stop offset="0.4" stop-color="#258a2c"/><stop offset="1" stop-color="#1c8220"/></linearGradient><linearGradient id="bg102" gradientUnits="userSpaceOnUse" x1="0" y1="352.1" x2="0" y2="386.4"><stop offset="0" stop-color="#389244"/><stop offset="0.4" stop-color="#258a2c"/><stop offset="1" stop-color="#1c8220"/></linearGradient><linearGradient id="bg103" gradientUnits="userSpaceOnUse" x1="0" y1="359.6" x2="0" y2="393.0"><stop offset="0" stop-color="#318e3b"/><stop offset="0.4" stop-color="#258a2c"/><stop offset="1" stop-color="#1c8220"/></linearGradient><linearGradient id="bg104" gradientUnits="userSpaceOnUse" x1="0" y1="359.0" x2="0" y2="396.6"><stop offset="0" stop-color="#3a9246"/><stop offset="0.4" stop-color="#258a2c"/><stop offset="1" stop-color="#1c8220"/></linearGradient><linearGradient id="bg105" gradientUnits="userSpaceOnUse" x1="0" y1="365.3" x2="0" y2="393.9"><stop offset="0" stop-color="#40954e"/><stop offset="0.4" stop-color="#258a2c"/><stop offset="1" stop-color="#1c8220"/></linearGradient><linearGradient id="bg106" gradientUnits="userSpaceOnUse" x1="0" y1="370.2" x2="0" y2="406.4"><stop offset="0" stop-color="#3b9347"/><stop offset="0.4" stop-color="#258a2c"/><stop offset="1" stop-color="#1c8220"/></linearGradient><linearGradient id="bg107" gradientUnits="userSpaceOnUse" x1="0" y1="378.1" x2="0" y2="413.4"><stop offset="0" stop-color="#399245"/><stop offset="0.4" stop-color="#258a2c"/><stop offset="1" stop-color="#1c8220"/></linearGradient><linearGradient id="bg108" gradientUnits="userSpaceOnUse" x1="0" y1="373.7" x2="0" y2="404.8"><stop offset="0" stop-color="#3a9347"/><stop offset="0.4" stop-color="#258a2c"/><stop offset="1" stop-color="#1c8220"/></linearGradient><linearGradient id="bg109" gradientUnits="userSpaceOnUse" x1="0" y1="373.4" x2="0" y2="405.8"><stop offset="0" stop-color="#3c9349"/><stop offset="0.4" stop-color="#258a2c"/><stop offset="1" stop-color="#1c8220"/></linearGradient><linearGradient id="bg110" gradientUnits="userSpaceOnUse" x1="0" y1="373.3" x2="0" y2="414.9"><stop offset="0" stop-color="#308e3a"/><stop offset="0.4" stop-color="#258a2c"/><stop offset="1" stop-color="#1c8220"/></linearGradient><linearGradient id="bg111" gradientUnits="userSpaceOnUse" x1="0" y1="382.2" x2="0" y2="414.6"><stop offset="0" stop-color="#40954e"/><stop offset="0.4" stop-color="#258a2c"/><stop offset="1" stop-color="#1c8220"/></linearGradient><linearGradient id="bg112" gradientUnits="userSpaceOnUse" x1="0" y1="381.3" x2="0" y2="415.6"><stop offset="0" stop-color="#429650"/><stop offset="0.4" stop-color="#258a2c"/><stop offset="1" stop-color="#1c8220"/></linearGradient><linearGradient id="bg113" gradientUnits="userSpaceOnUse" x1="0" y1="381.7" x2="0" y2="408.1"><stop offset="0" stop-color="#369041"/><stop offset="0.4" stop-color="#258a2c"/><stop offset="1" stop-color="#1c8220"/></linearGradient><linearGradient id="bg114" gradientUnits="userSpaceOnUse" x1="0" y1="379.5" x2="0" y2="418.4"><stop offset="0" stop-color="#399245"/><stop offset="0.4" stop-color="#258a2c"/><stop offset="1" stop-color="#1c8220"/></linearGradient><linearGradient id="bg115" gradientUnits="userSpaceOnUse" x1="0" y1="380.8" x2="0" y2="418.9"><stop offset="0" stop-color="#2f8e39"/><stop offset="0.4" stop-color="#258a2c"/><stop offset="1" stop-color="#1c8220"/></linearGradient><linearGradient id="bg116" gradientUnits="userSpaceOnUse" x1="0" y1="381.8" x2="0" y2="415.1"><stop offset="0" stop-color="#3b9347"/><stop offset="0.4" stop-color="#258a2c"/><stop offset="1" stop-color="#1c8220"/></linearGradient><linearGradient id="bg117" gradientUnits="userSpaceOnUse" x1="0" y1="386.8" x2="0" y2="420.8"><stop offset="0" stop-color="#318e3b"/><stop offset="0.4" stop-color="#258a2c"/><stop offset="1" stop-color="#1c8220"/></linearGradient><linearGradient id="bg118" gradientUnits="userSpaceOnUse" x1="0" y1="391.9" x2="0" y2="428.3"><stop offset="0" stop-color="#2f8d38"/><stop offset="0.4" stop-color="#258a2c"/><stop offset="1" stop-color="#1c8220"/></linearGradient><linearGradient id="bg119" gradientUnits="userSpaceOnUse" x1="0" y1="389.9" x2="0" y2="425.5"><stop offset="0" stop-color="#369142"/><stop offset="0.4" stop-color="#258a2c"/><stop offset="1" stop-color="#1c8220"/></linearGradient><linearGradient id="bg120" gradientUnits="userSpaceOnUse" x1="0" y1="388.5" x2="0" y2="422.1"><stop offset="0" stop-color="#34903f"/><stop offset="0.4" stop-color="#258a2c"/><stop offset="1" stop-color="#1c8220"/></linearGradient><linearGradient id="bg121" gradientUnits="userSpaceOnUse" x1="0" y1="385.9" x2="0" y2="428.2"><stop offset="0" stop-color="#359041"/><stop offset="0.4" stop-color="#258a2c"/><stop offset="1" stop-color="#1c8220"/></linearGradient><linearGradient id="bg122" gradientUnits="userSpaceOnUse" x1="0" y1="392.6" x2="0" y2="422.4"><stop offset="0" stop-color="#379142"/><stop offset="0.4" stop-color="#258a2c"/><stop offset="1" stop-color="#1c8220"/></linearGradient><linearGradient id="bg123" gradientUnits="userSpaceOnUse" x1="0" y1="397.3" x2="0" y2="430.5"><stop offset="0" stop-color="#308e3a"/><stop offset="0.4" stop-color="#258a2c"/><stop offset="1" stop-color="#1c8220"/></linearGradient><linearGradient id="bg124" gradientUnits="userSpaceOnUse" x1="0" y1="394.0" x2="0" y2="430.4"><stop offset="0" stop-color="#40954e"/><stop offset="0.4" stop-color="#258a2c"/><stop offset="1" stop-color="#1c8220"/></linearGradient><linearGradient id="bg125" gradientUnits="userSpaceOnUse" x1="0" y1="395.6" x2="0" y2="433.4"><stop offset="0" stop-color="#439752"/><stop offset="0.4" stop-color="#258a2c"/><stop offset="1" stop-color="#1c8220"/></linearGradient><linearGradient id="bg126" gradientUnits="userSpaceOnUse" x1="0" y1="402.8" x2="0" y2="441.8"><stop offset="0" stop-color="#369142"/><stop offset="0.4" stop-color="#258a2c"/><stop offset="1" stop-color="#1c8220"/></linearGradient><linearGradient id="bg127" gradientUnits="userSpaceOnUse" x1="0" y1="397.7" x2="0" y2="433.5"><stop offset="0" stop-color="#399246"/><stop offset="0.4" stop-color="#258a2c"/><stop offset="1" stop-color="#1c8220"/></linearGradient><linearGradient id="bg128" gradientUnits="userSpaceOnUse" x1="0" y1="408.6" x2="0" y2="433.3"><stop offset="0" stop-color="#379143"/><stop offset="0.4" stop-color="#258a2c"/><stop offset="1" stop-color="#1c8220"/></linearGradient><linearGradient id="bg129" gradientUnits="userSpaceOnUse" x1="0" y1="408.6" x2="0" y2="441.4"><stop offset="0" stop-color="#3a9246"/><stop offset="0.4" stop-color="#258a2c"/><stop offset="1" stop-color="#1c8220"/></linearGradient><linearGradient id="bg130" gradientUnits="userSpaceOnUse" x1="0" y1="404.3" x2="0" y2="435.0"><stop offset="0" stop-color="#369041"/><stop offset="0.4" stop-color="#258a2c"/><stop offset="1" stop-color="#1c8220"/></linearGradient><linearGradient id="bg131" gradientUnits="userSpaceOnUse" x1="0" y1="405.2" x2="0" y2="443.1"><stop offset="0" stop-color="#308e3a"/><stop offset="0.4" stop-color="#258a2c"/><stop offset="1" stop-color="#1c8220"/></linearGradient><linearGradient id="bg132" gradientUnits="userSpaceOnUse" x1="0" y1="402.9" x2="0" y2="436.0"><stop offset="0" stop-color="#2f8e39"/><stop offset="0.4" stop-color="#258a2c"/><stop offset="1" stop-color="#1c8220"/></linearGradient><linearGradient id="bg133" gradientUnits="userSpaceOnUse" x1="0" y1="406.3" x2="0" y2="438.5"><stop offset="0" stop-color="#389244"/><stop offset="0.4" stop-color="#258a2c"/><stop offset="1" stop-color="#1c8220"/></linearGradient><linearGradient id="bg134" gradientUnits="userSpaceOnUse" x1="0" y1="407.5" x2="0" y2="448.0"><stop offset="0" stop-color="#3a9246"/><stop offset="0.4" stop-color="#258a2c"/><stop offset="1" stop-color="#1c8220"/></linearGradient><linearGradient id="bg135" gradientUnits="userSpaceOnUse" x1="0" y1="409.5" x2="0" y2="447.0"><stop offset="0" stop-color="#389244"/><stop offset="0.4" stop-color="#258a2c"/><stop offset="1" stop-color="#1c8220"/></linearGradient><linearGradient id="bg136" gradientUnits="userSpaceOnUse" x1="0" y1="410.2" x2="0" y2="444.2"><stop offset="0" stop-color="#379143"/><stop offset="0.4" stop-color="#258a2c"/><stop offset="1" stop-color="#1c8220"/></linearGradient><linearGradient id="bg137" gradientUnits="userSpaceOnUse" x1="0" y1="411.2" x2="0" y2="453.6"><stop offset="0" stop-color="#3c9349"/><stop offset="0.4" stop-color="#258a2c"/><stop offset="1" stop-color="#1c8220"/></linearGradient><linearGradient id="bg138" gradientUnits="userSpaceOnUse" x1="0" y1="416.8" x2="0" y2="446.7"><stop offset="0" stop-color="#348f3e"/><stop offset="0.4" stop-color="#258a2c"/><stop offset="1" stop-color="#1c8220"/></linearGradient><linearGradient id="bg139" gradientUnits="userSpaceOnUse" x1="0" y1="411.6" x2="0" y2="448.1"><stop offset="0" stop-color="#359040"/><stop offset="0.4" stop-color="#258a2c"/><stop offset="1" stop-color="#1c8220"/></linearGradient><linearGradient id="bg140" gradientUnits="userSpaceOnUse" x1="0" y1="414.3" x2="0" y2="449.6"><stop offset="0" stop-color="#3f954d"/><stop offset="0.4" stop-color="#258a2c"/><stop offset="1" stop-color="#1c8220"/></linearGradient><linearGradient id="bg141" gradientUnits="userSpaceOnUse" x1="0" y1="411.4" x2="0" y2="455.4"><stop offset="0" stop-color="#348f3e"/><stop offset="0.4" stop-color="#258a2c"/><stop offset="1" stop-color="#1c8220"/></linearGradient><linearGradient id="bg142" gradientUnits="userSpaceOnUse" x1="0" y1="412.4" x2="0" y2="453.5"><stop offset="0" stop-color="#328f3d"/><stop offset="0.4" stop-color="#258a2c"/><stop offset="1" stop-color="#1c8220"/></linearGradient><linearGradient id="bg143" gradientUnits="userSpaceOnUse" x1="0" y1="422.4" x2="0" y2="447.1"><stop offset="0" stop-color="#2f8d39"/><stop offset="0.4" stop-color="#258a2c"/><stop offset="1" stop-color="#1c8220"/></linearGradient><linearGradient id="bg144" gradientUnits="userSpaceOnUse" x1="0" y1="417.4" x2="0" y2="457.6"><stop offset="0" stop-color="#3d944a"/><stop offset="0.4" stop-color="#258a2c"/><stop offset="1" stop-color="#1c8220"/></linearGradient><linearGradient id="bg145" gradientUnits="userSpaceOnUse" x1="0" y1="419.4" x2="0" y2="455.3"><stop offset="0" stop-color="#2f8d39"/><stop offset="0.4" stop-color="#258a2c"/><stop offset="1" stop-color="#1c8220"/></linearGradient><linearGradient id="bg146" gradientUnits="userSpaceOnUse" x1="0" y1="414.7" x2="0" y2="453.0"><stop offset="0" stop-color="#34903f"/><stop offset="0.4" stop-color="#258a2c"/><stop offset="1" stop-color="#1c8220"/></linearGradient><linearGradient id="bg147" gradientUnits="userSpaceOnUse" x1="0" y1="424.0" x2="0" y2="461.0"><stop offset="0" stop-color="#318e3b"/><stop offset="0.4" stop-color="#258a2c"/><stop offset="1" stop-color="#1c8220"/></linearGradient><linearGradient id="bg148" gradientUnits="userSpaceOnUse" x1="0" y1="417.6" x2="0" y2="452.5"><stop offset="0" stop-color="#3c9348"/><stop offset="0.4" stop-color="#258a2c"/><stop offset="1" stop-color="#1c8220"/></linearGradient><linearGradient id="bg149" gradientUnits="userSpaceOnUse" x1="0" y1="417.7" x2="0" y2="458.6"><stop offset="0" stop-color="#3f954d"/><stop offset="0.4" stop-color="#258a2c"/><stop offset="1" stop-color="#1c8220"/></linearGradient><linearGradient id="bg150" gradientUnits="userSpaceOnUse" x1="0" y1="428.2" x2="0" y2="463.7"><stop offset="0" stop-color="#379143"/><stop offset="0.4" stop-color="#258a2c"/><stop offset="1" stop-color="#1c8220"/></linearGradient><linearGradient id="bg151" gradientUnits="userSpaceOnUse" x1="0" y1="426.4" x2="0" y2="465.6"><stop offset="0" stop-color="#379143"/><stop offset="0.4" stop-color="#258a2c"/><stop offset="1" stop-color="#1c8220"/></linearGradient><linearGradient id="bg152" gradientUnits="userSpaceOnUse" x1="0" y1="429.9" x2="0" y2="467.9"><stop offset="0" stop-color="#308e3a"/><stop offset="0.4" stop-color="#258a2c"/><stop offset="1" stop-color="#1c8220"/></linearGradient><linearGradient id="bg153" gradientUnits="userSpaceOnUse" x1="0" y1="431.5" x2="0" y2="465.5"><stop offset="0" stop-color="#369142"/><stop offset="0.4" stop-color="#258a2c"/><stop offset="1" stop-color="#1c8220"/></linearGradient><linearGradient id="bg154" gradientUnits="userSpaceOnUse" x1="0" y1="432.9" x2="0" y2="462.1"><stop offset="0" stop-color="#34903f"/><stop offset="0.4" stop-color="#258a2c"/><stop offset="1" stop-color="#1c8220"/></linearGradient><linearGradient id="bg155" gradientUnits="userSpaceOnUse" x1="0" y1="440.1" x2="0" y2="472.2"><stop offset="0" stop-color="#3a9347"/><stop offset="0.4" stop-color="#258a2c"/><stop offset="1" stop-color="#1c8220"/></linearGradient><linearGradient id="bg156" gradientUnits="userSpaceOnUse" x1="0" y1="437.4" x2="0" y2="475.0"><stop offset="0" stop-color="#348f3e"/><stop offset="0.4" stop-color="#258a2c"/><stop offset="1" stop-color="#1c8220"/></linearGradient><linearGradient id="bg157" gradientUnits="userSpaceOnUse" x1="0" y1="438.8" x2="0" y2="477.6"><stop offset="0" stop-color="#308e3a"/><stop offset="0.4" stop-color="#258a2c"/><stop offset="1" stop-color="#1c8220"/></linearGradient><linearGradient id="bg158" gradientUnits="userSpaceOnUse" x1="0" y1="443.7" x2="0" y2="481.4"><stop offset="0" stop-color="#3e944b"/><stop offset="0.4" stop-color="#258a2c"/><stop offset="1" stop-color="#1c8220"/></linearGradient><linearGradient id="bg159" gradientUnits="userSpaceOnUse" x1="0" y1="436.8" x2="0" y2="474.8"><stop offset="0" stop-color="#308e3a"/><stop offset="0.4" stop-color="#258a2c"/><stop offset="1" stop-color="#1c8220"/></linearGradient><linearGradient id="bg160" gradientUnits="userSpaceOnUse" x1="0" y1="438.2" x2="0" y2="475.2"><stop offset="0" stop-color="#2e8d38"/><stop offset="0.4" stop-color="#258a2c"/><stop offset="1" stop-color="#1c8220"/></linearGradient><linearGradient id="bg161" gradientUnits="userSpaceOnUse" x1="0" y1="444.0" x2="0" y2="476.0"><stop offset="0" stop-color="#3e944b"/><stop offset="0.4" stop-color="#258a2c"/><stop offset="1" stop-color="#1c8220"/></linearGradient><linearGradient id="bg162" gradientUnits="userSpaceOnUse" x1="0" y1="443.7" x2="0" y2="479.6"><stop offset="0" stop-color="#389244"/><stop offset="0.4" stop-color="#258a2c"/><stop offset="1" stop-color="#1c8220"/></linearGradient><linearGradient id="bg163" gradientUnits="userSpaceOnUse" x1="0" y1="448.9" x2="0" y2="487.0"><stop offset="0" stop-color="#379143"/><stop offset="0.4" stop-color="#258a2c"/><stop offset="1" stop-color="#1c8220"/></linearGradient><linearGradient id="bg164" gradientUnits="userSpaceOnUse" x1="0" y1="448.5" x2="0" y2="478.6"><stop offset="0" stop-color="#379143"/><stop offset="0.4" stop-color="#258a2c"/><stop offset="1" stop-color="#1c8220"/></linearGradient><linearGradient id="bg165" gradientUnits="userSpaceOnUse" x1="0" y1="452.2" x2="0" y2="490.0"><stop offset="0" stop-color="#3e944b"/><stop offset="0.4" stop-color="#258a2c"/><stop offset="1" stop-color="#1c8220"/></linearGradient><linearGradient id="bg166" gradientUnits="userSpaceOnUse" x1="0" y1="451.4" x2="0" y2="487.6"><stop offset="0" stop-color="#3e944b"/><stop offset="0.4" stop-color="#258a2c"/><stop offset="1" stop-color="#1c8220"/></linearGradient><linearGradient id="bg167" gradientUnits="userSpaceOnUse" x1="0" y1="449.9" x2="0" y2="483.5"><stop offset="0" stop-color="#308e3a"/><stop offset="0.4" stop-color="#258a2c"/><stop offset="1" stop-color="#1c8220"/></linearGradient><linearGradient id="bg168" gradientUnits="userSpaceOnUse" x1="0" y1="455.2" x2="0" y2="491.5"><stop offset="0" stop-color="#399245"/><stop offset="0.4" stop-color="#258a2c"/><stop offset="1" stop-color="#1c8220"/></linearGradient><linearGradient id="bg169" gradientUnits="userSpaceOnUse" x1="0" y1="457.0" x2="0" y2="496.5"><stop offset="0" stop-color="#308e3a"/><stop offset="0.4" stop-color="#258a2c"/><stop offset="1" stop-color="#1c8220"/></linearGradient><radialGradient id="hill2" gradientUnits="userSpaceOnUse" cx="528" cy="258" r="60"><stop offset="0" stop-color="#5aa870" stop-opacity="0.8"/><stop offset="1" stop-color="#2c8c34" stop-opacity="0"/></radialGradient><radialGradient id="mtn" gradientUnits="userSpaceOnUse" cx="385" cy="264" r="150" fx="385" fy="264"><stop offset="0" stop-color="#cce6e2"/><stop offset="0.15" stop-color="#a8ccc0"/><stop offset="0.4" stop-color="#70b088"/><stop offset="0.65" stop-color="#44a058" stop-opacity="0.75"/><stop offset="1" stop-color="#2a8e34" stop-opacity="0"/></radialGradient><linearGradient id="cbg" x1="0" y1="0" x2="0" y2="1"><stop offset="0" stop-color="#fdfdfd"/><stop offset="0.5" stop-color="#f2f2f2"/><stop offset="0.55" stop-color="#e8e8e8"/><stop offset="1" stop-color="#f6f6f6"/></linearGradient><linearGradient id="cbchk" x1="0" y1="0" x2="0" y2="1"><stop offset="0" stop-color="#cfe0f8"/><stop offset="0.5" stop-color="#9cbdf0"/><stop offset="0.55" stop-color="#86adee"/><stop offset="1" stop-color="#d4e6fc"/></linearGradient><radialGradient id="rbchk" cx="0.5" cy="0.6" r="0.6"><stop offset="0" stop-color="#d8e8fc"/><stop offset="0.7" stop-color="#a6c4f2"/><stop offset="1" stop-color="#7ea4e6"/></radialGradient><linearGradient id="trk" x1="0" y1="0" x2="0" y2="1"><stop offset="0" stop-color="#a8a8a8"/><stop offset="1" stop-color="#d8d8d8"/></linearGradient><linearGradient id="knob" x1="0" y1="0" x2="0" y2="1"><stop offset="0" stop-color="#ffffff"/><stop offset="1" stop-color="#e6e6e6"/></linearGradient><linearGradient id="thg" x1="0" y1="0" x2="0" y2="1"><stop offset="0" stop-color="#8d9e76"/><stop offset="0.45" stop-color="#7e7e68"/><stop offset="0.8" stop-color="#63525a"/><stop offset="1" stop-color="#553f4c"/></linearGradient></defs><rect x="0" y="0" width="1302" height="662" fill="#eaedea"/>
<rect x="0" y="0" width="1302" height="22" fill="url(#tbar)"/>
<rect x="0" y="0" width="1302" height="1" fill="#f4f4f4"/>
<rect x="0" y="21" width="1302" height="1" fill="#5c5c5c"/>
<circle cx="14" cy="10.8" r="5.8" fill="url(#tlr)" stroke="#7a3a36" stroke-width="0.8"/>
<circle cx="34" cy="10.8" r="5.8" fill="url(#tly)" stroke="#8a6a2a" stroke-width="0.8"/>
<circle cx="54" cy="10.8" r="5.8" fill="url(#tlg)" stroke="#4a7a3a" stroke-width="0.8"/>
<text x="651" y="16" font-size="13.5" fill="#3a3a3a" stroke="#3a3a3a" stroke-width="0.22" font-family='"Liberation Sans", sans-serif' text-anchor="middle" textLength="246.6" lengthAdjust="spacingAndGlyphs">Volumetric object example – 3D terrain</text>
<path d="M1291,5 h6 v6 l-2,-2 l-3,3 l-2,-2 l3,-3 z M1284,18 h6 l-2,-2 l3,-3 l-2,-2 l-3,3 l-2,-2 z" fill="#7c7c7c"/>
<path d="M0,0 h3 a3,3 0 0 0 -3,3 z" fill="#111"/><path d="M1302,0 h-3 a3,3 0 0 1 3,3 z" fill="#111"/>
<path d="M0,662 h3 a3,3 0 0 1 -3,-3 z" fill="#222"/><path d="M1302,662 h-3 a3,3 0 0 0 3,-3 z" fill="#222"/>
<rect x="20" y="42" width="788" height="600" fill="#fcfdfc"/>
<g clip-path="url(#gclip)">
<line x1="341.1" y1="73.1" x2="55.5" y2="262.6" stroke="#8e8e8e" stroke-width="1.0" />
<line x1="341.1" y1="73.1" x2="772.8" y2="198.9" stroke="#8e8e8e" stroke-width="1.0" />
<line x1="341.1" y1="110.1" x2="55.5" y2="299.6" stroke="#8e8e8e" stroke-width="1.0" />
<line x1="341.1" y1="110.1" x2="772.8" y2="235.9" stroke="#8e8e8e" stroke-width="1.0" />
<line x1="341.1" y1="147.1" x2="55.5" y2="336.6" stroke="#8e8e8e" stroke-width="1.0" />
<line x1="341.1" y1="147.1" x2="772.8" y2="272.9" stroke="#8e8e8e" stroke-width="1.0" />
<line x1="341.1" y1="184.1" x2="55.5" y2="373.6" stroke="#8e8e8e" stroke-width="1.0" />
<line x1="341.1" y1="184.1" x2="772.8" y2="309.9" stroke="#8e8e8e" stroke-width="1.0" />
<line x1="341.1" y1="221.1" x2="55.5" y2="410.6" stroke="#8e8e8e" stroke-width="1.0" />
<line x1="341.1" y1="221.1" x2="772.8" y2="346.9" stroke="#8e8e8e" stroke-width="1.0" />
<line x1="341.1" y1="258.1" x2="55.5" y2="447.6" stroke="#8e8e8e" stroke-width="1.0" />
<line x1="341.1" y1="258.1" x2="772.8" y2="383.9" stroke="#8e8e8e" stroke-width="1.0" />
<line x1="341.1" y1="295.1" x2="55.5" y2="484.6" stroke="#8e8e8e" stroke-width="1.0" />
<line x1="341.1" y1="295.1" x2="772.8" y2="420.9" stroke="#8e8e8e" stroke-width="1.0" />
<line x1="334.5" y1="67.0" x2="334.5" y2="310.0" stroke="#8e8e8e" stroke-width="1.0" />
<line x1="351.5" y1="65.5" x2="351.5" y2="308.5" stroke="#8e8e8e" stroke-width="1.0" />
<line x1="280.5" y1="103.1" x2="280.5" y2="346.1" stroke="#8e8e8e" stroke-width="1.0" />
<line x1="433.5" y1="89.5" x2="433.5" y2="332.5" stroke="#8e8e8e" stroke-width="1.0" />
<line x1="225.5" y1="139.2" x2="225.5" y2="382.2" stroke="#8e8e8e" stroke-width="1.0" />
<line x1="515.5" y1="113.4" x2="515.5" y2="356.4" stroke="#8e8e8e" stroke-width="1.0" />
<line x1="171.5" y1="175.3" x2="171.5" y2="418.3" stroke="#8e8e8e" stroke-width="1.0" />
<line x1="597.5" y1="137.4" x2="597.5" y2="380.4" stroke="#8e8e8e" stroke-width="1.0" />
<line x1="116.5" y1="211.4" x2="116.5" y2="454.4" stroke="#8e8e8e" stroke-width="1.0" />
<line x1="679.5" y1="161.3" x2="679.5" y2="404.3" stroke="#8e8e8e" stroke-width="1.0" />
<line x1="62.5" y1="247.4" x2="62.5" y2="490.4" stroke="#8e8e8e" stroke-width="1.0" />
<line x1="762.5" y1="185.3" x2="762.5" y2="428.3" stroke="#8e8e8e" stroke-width="1.0" />
<line x1="334.5" y1="310.0" x2="766.2" y2="435.7" stroke="#8e8e8e" stroke-width="1.0" />
<line x1="351.1" y1="308.5" x2="65.5" y2="498.0" stroke="#8e8e8e" stroke-width="1.0" />
<line x1="280.1" y1="346.1" x2="711.8" y2="471.8" stroke="#8e8e8e" stroke-width="1.0" />
<line x1="433.3" y1="332.5" x2="147.7" y2="522.0" stroke="#8e8e8e" stroke-width="1.0" />
<line x1="225.7" y1="382.2" x2="657.5" y2="507.9" stroke="#8e8e8e" stroke-width="1.0" />
<line x1="515.5" y1="356.4" x2="230.0" y2="545.9" stroke="#8e8e8e" stroke-width="1.0" />
<line x1="171.3" y1="418.3" x2="603.1" y2="544.0" stroke="#8e8e8e" stroke-width="1.0" />
<line x1="597.7" y1="380.4" x2="312.2" y2="569.9" stroke="#8e8e8e" stroke-width="1.0" />
<line x1="117.0" y1="454.4" x2="548.7" y2="580.1" stroke="#8e8e8e" stroke-width="1.0" />
<line x1="680.0" y1="404.3" x2="394.4" y2="593.8" stroke="#8e8e8e" stroke-width="1.0" />
<line x1="62.6" y1="490.4" x2="494.3" y2="616.2" stroke="#8e8e8e" stroke-width="1.0" />
<line x1="762.2" y1="428.3" x2="476.6" y2="617.8" stroke="#8e8e8e" stroke-width="1.0" />
<g transform="matrix(0.8332,-0.5530,0.0000,1.0000,40.7,273.4)"><rect x="-13.2" y="-7.2" width="26.5" height="14.5" rx="1.5" fill="#fdfdfd" stroke="#9a9a9a" stroke-width="1.5"/><text x="0" y="2.5" font-size="7" text-anchor="middle" fill="#a0a0a0" font-weight="bold" font-family='"Liberation Sans", sans-serif'>600.00</text></g>
<g transform="matrix(0.8332,-0.5530,0.0000,1.0000,40.7,310.4)"><rect x="-13.2" y="-7.2" width="26.5" height="14.5" rx="1.5" fill="#fdfdfd" stroke="#9a9a9a" stroke-width="1.5"/><text x="0" y="2.5" font-size="7" text-anchor="middle" fill="#a0a0a0" font-weight="bold" font-family='"Liberation Sans", sans-serif'>400.00</text></g>
<g transform="matrix(0.8332,-0.5530,0.0000,1.0000,40.7,347.4)"><rect x="-13.2" y="-7.2" width="26.5" height="14.5" rx="1.5" fill="#fdfdfd" stroke="#9a9a9a" stroke-width="1.5"/><text x="0" y="2.5" font-size="7" text-anchor="middle" fill="#a0a0a0" font-weight="bold" font-family='"Liberation Sans", sans-serif'>200.00</text></g>
<g transform="matrix(0.8332,-0.5530,0.0000,1.0000,40.7,384.4)"><rect x="-13.2" y="-7.2" width="26.5" height="14.5" rx="1.5" fill="#fdfdfd" stroke="#9a9a9a" stroke-width="1.5"/><text x="0" y="2.5" font-size="7" text-anchor="middle" fill="#a0a0a0" font-weight="bold" font-family='"Liberation Sans", sans-serif'>0.00</text></g>
<g transform="matrix(0.8332,-0.5530,0.0000,1.0000,40.7,421.4)"><rect x="-13.2" y="-7.2" width="26.5" height="14.5" rx="1.5" fill="#fdfdfd" stroke="#9a9a9a" stroke-width="1.5"/><text x="0" y="2.5" font-size="7" text-anchor="middle" fill="#a0a0a0" font-weight="bold" font-family='"Liberation Sans", sans-serif'>-200.00</text></g>
<g transform="matrix(0.8332,-0.5530,0.0000,1.0000,40.7,458.4)"><rect x="-13.2" y="-7.2" width="26.5" height="14.5" rx="1.5" fill="#fdfdfd" stroke="#9a9a9a" stroke-width="1.5"/><text x="0" y="2.5" font-size="7" text-anchor="middle" fill="#a0a0a0" font-weight="bold" font-family='"Liberation Sans", sans-serif'>-400.00</text></g>
<g transform="matrix(0.8332,-0.5530,0.0000,1.0000,40.7,495.4)"><rect x="-13.2" y="-7.2" width="26.5" height="14.5" rx="1.5" fill="#fdfdfd" stroke="#9a9a9a" stroke-width="1.5"/><text x="0" y="2.5" font-size="7" text-anchor="middle" fill="#a0a0a0" font-weight="bold" font-family='"Liberation Sans", sans-serif'>-600.00</text></g>
<g transform="matrix(0.9601,0.2797,0.0000,1.0000,798.5,207.3)"><rect x="-20.0" y="-8.0" width="40.0" height="16.0" rx="2.5" fill="#fdfdfd" stroke="#8a8a8a" stroke-width="1.4"/><text x="-16" y="3.4" font-size="9.5" text-anchor="start" fill="#888" font-weight="normal" font-family='"Liberation Sans", sans-serif'>600.00</text></g>
<g transform="matrix(0.9601,0.2797,0.0000,1.0000,798.5,244.3)"><rect x="-20.0" y="-8.0" width="40.0" height="16.0" rx="2.5" fill="#fdfdfd" stroke="#8a8a8a" stroke-width="1.4"/><text x="-16" y="3.4" font-size="9.5" text-anchor="start" fill="#888" font-weight="normal" font-family='"Liberation Sans", sans-serif'>400.00</text></g>
<g transform="matrix(0.9601,0.2797,0.0000,1.0000,798.5,281.3)"><rect x="-20.0" y="-8.0" width="40.0" height="16.0" rx="2.5" fill="#fdfdfd" stroke="#8a8a8a" stroke-width="1.4"/><text x="-16" y="3.4" font-size="9.5" text-anchor="start" fill="#888" font-weight="normal" font-family='"Liberation Sans", sans-serif'>200.00</text></g>
<g transform="matrix(0.9601,0.2797,0.0000,1.0000,798.5,318.3)"><rect x="-20.0" y="-8.0" width="40.0" height="16.0" rx="2.5" fill="#fdfdfd" stroke="#8a8a8a" stroke-width="1.4"/><text x="-16" y="3.4" font-size="9.5" text-anchor="start" fill="#888" font-weight="normal" font-family='"Liberation Sans", sans-serif'>0.00</text></g>
<g transform="matrix(0.9601,0.2797,0.0000,1.0000,798.5,355.3)"><rect x="-20.0" y="-8.0" width="40.0" height="16.0" rx="2.5" fill="#fdfdfd" stroke="#8a8a8a" stroke-width="1.4"/><text x="-16" y="3.4" font-size="9.5" text-anchor="start" fill="#888" font-weight="normal" font-family='"Liberation Sans", sans-serif'>-200.00</text></g>
<g transform="matrix(0.9601,0.2797,0.0000,1.0000,798.5,392.3)"><rect x="-20.0" y="-8.0" width="40.0" height="16.0" rx="2.5" fill="#fdfdfd" stroke="#8a8a8a" stroke-width="1.4"/><text x="-16" y="3.4" font-size="9.5" text-anchor="start" fill="#888" font-weight="normal" font-family='"Liberation Sans", sans-serif'>-400.00</text></g>
<g transform="matrix(0.9601,0.2797,0.0000,1.0000,798.5,429.3)"><rect x="-20.0" y="-8.0" width="40.0" height="16.0" rx="2.5" fill="#fdfdfd" stroke="#8a8a8a" stroke-width="1.4"/><text x="-16" y="3.4" font-size="9.5" text-anchor="start" fill="#888" font-weight="normal" font-family='"Liberation Sans", sans-serif'>-600.00</text></g>
<g transform="matrix(0.8332,-0.5530,0.5761,0.1678,49.9,508.1)"><rect x="-14.0" y="-11.5" width="28.0" height="23.0" rx="2.5" fill="#fdfdfd" stroke="#a0a0a0" stroke-width="1.6"/><text x="0" y="2.5" font-size="7" text-anchor="middle" fill="#a8a8a8" font-weight="bold" font-family='"Liberation Sans", sans-serif'>0.00</text></g>
<g transform="matrix(0.8332,-0.5530,0.5761,0.1678,132.1,532.1)"><rect x="-14.0" y="-11.5" width="28.0" height="23.0" rx="2.5" fill="#fdfdfd" stroke="#a0a0a0" stroke-width="1.6"/><text x="0" y="2.5" font-size="7" text-anchor="middle" fill="#a8a8a8" font-weight="bold" font-family='"Liberation Sans", sans-serif'>200.00</text></g>
<g transform="matrix(0.8332,-0.5530,0.5761,0.1678,214.4,556.0)"><rect x="-14.0" y="-11.5" width="28.0" height="23.0" rx="2.5" fill="#fdfdfd" stroke="#a0a0a0" stroke-width="1.6"/><text x="0" y="2.5" font-size="7" text-anchor="middle" fill="#a8a8a8" font-weight="bold" font-family='"Liberation Sans", sans-serif'>400.00</text></g>
<g transform="matrix(0.8332,-0.5530,0.5761,0.1678,296.6,580.0)"><rect x="-14.0" y="-11.5" width="28.0" height="23.0" rx="2.5" fill="#fdfdfd" stroke="#a0a0a0" stroke-width="1.6"/><text x="0" y="2.5" font-size="7" text-anchor="middle" fill="#a8a8a8" font-weight="bold" font-family='"Liberation Sans", sans-serif'>600.00</text></g>
<g transform="matrix(0.8332,-0.5530,0.5761,0.1678,378.8,603.9)"><rect x="-14.0" y="-11.5" width="28.0" height="23.0" rx="2.5" fill="#fdfdfd" stroke="#a0a0a0" stroke-width="1.6"/><text x="0" y="2.5" font-size="7" text-anchor="middle" fill="#a8a8a8" font-weight="bold" font-family='"Liberation Sans", sans-serif'>800.00</text></g>
<g transform="matrix(0.8332,-0.5530,0.5761,0.1678,461.0,627.9)"><rect x="-14.0" y="-11.5" width="28.0" height="23.0" rx="2.5" fill="#fdfdfd" stroke="#a0a0a0" stroke-width="1.6"/><text x="0" y="2.5" font-size="7" text-anchor="middle" fill="#a8a8a8" font-weight="bold" font-family='"Liberation Sans", sans-serif'>1000.00</text></g>
<g transform="matrix(0.9601,0.2797,-0.4999,0.3318,788.7,444.2)"><rect x="-20.0" y="-7.5" width="40.0" height="15.0" rx="2.5" fill="#fdfdfd" stroke="#a0a0a0" stroke-width="1.6"/><text x="0" y="2.5" font-size="7" text-anchor="middle" fill="#a8a8a8" font-weight="bold" font-family='"Liberation Sans", sans-serif'>1000.00</text></g>
<g transform="matrix(0.9601,0.2797,-0.4999,0.3318,734.3,480.3)"><rect x="-20.0" y="-7.5" width="40.0" height="15.0" rx="2.5" fill="#fdfdfd" stroke="#a0a0a0" stroke-width="1.6"/><text x="0" y="2.5" font-size="7" text-anchor="middle" fill="#a8a8a8" font-weight="bold" font-family='"Liberation Sans", sans-serif'>800.00</text></g>
<g transform="matrix(0.9601,0.2797,-0.4999,0.3318,680.0,516.4)"><rect x="-20.0" y="-7.5" width="40.0" height="15.0" rx="2.5" fill="#fdfdfd" stroke="#a0a0a0" stroke-width="1.6"/><text x="0" y="2.5" font-size="7" text-anchor="middle" fill="#a8a8a8" font-weight="bold" font-family='"Liberation Sans", sans-serif'>600.00</text></g>
<g transform="matrix(0.9601,0.2797,-0.4999,0.3318,625.6,552.5)"><rect x="-20.0" y="-7.5" width="40.0" height="15.0" rx="2.5" fill="#fdfdfd" stroke="#a0a0a0" stroke-width="1.6"/><text x="0" y="2.5" font-size="7" text-anchor="middle" fill="#a8a8a8" font-weight="bold" font-family='"Liberation Sans", sans-serif'>400.00</text></g>
<g transform="matrix(0.9601,0.2797,-0.4999,0.3318,571.2,588.6)"><rect x="-20.0" y="-7.5" width="40.0" height="15.0" rx="2.5" fill="#fdfdfd" stroke="#a0a0a0" stroke-width="1.6"/><text x="0" y="2.5" font-size="7" text-anchor="middle" fill="#a8a8a8" font-weight="bold" font-family='"Liberation Sans", sans-serif'>200.00</text></g>
<g transform="matrix(0.9601,0.2797,-0.4999,0.3318,516.8,624.7)"><rect x="-20.0" y="-7.5" width="40.0" height="15.0" rx="2.5" fill="#fdfdfd" stroke="#a0a0a0" stroke-width="1.6"/><text x="0" y="2.5" font-size="7" text-anchor="middle" fill="#a8a8a8" font-weight="bold" font-family='"Liberation Sans", sans-serif'>0.00</text></g>
<g filter="url(#blur7)"><polygon points="86.0,458.0 86.0,369.0 200.0,294.0 262.0,253.0 285.0,290.0 300.0,420.0 200.0,460.0" fill="#1010e0" opacity="0.95"/></g>
<g filter="url(#blur4)"><polygon points="255.0,262.0 270.0,258.0 296.0,229.0 316.0,206.0 326.0,198.0 339.0,186.0 348.0,200.0 320.0,250.0 280.0,280.0 250.0,285.0" fill="#2020e0" opacity="0.85"/></g>
<polygon points="100.5,380.0 170.0,332.0 250.0,279.7 270.0,266.7 300.0,233.0 319.8,210.8 327.4,204.7 341.0,184.4 420.0,200.0 560.0,380.0 540.0,470.0 483.5,526.0 300.0,490.0 100.5,460.0" fill="#0000dc" />
<polygon points="483.1,470.0 490.7,465.5 490.7,597.0 483.1,601.5" fill="url(#rf0)"/>
<polygon points="489.9,465.5 497.5,461.0 497.5,592.5 489.9,597.0" fill="url(#rf1)"/>
<polygon points="496.7,461.0 504.3,456.5 504.3,588.0 496.7,592.5" fill="url(#rf2)"/>
<polygon points="503.5,456.5 511.1,452.0 511.1,583.5 503.5,588.0" fill="url(#rf3)"/>
<polygon points="510.3,452.0 517.9,447.5 517.9,579.0 510.3,583.5" fill="url(#rf4)"/>
<polygon points="517.1,447.5 524.7,443.0 524.7,574.5 517.1,579.0" fill="url(#rf5)"/>
<polygon points="523.9,443.0 531.4,438.5 531.4,570.0 523.9,574.5" fill="url(#rf6)"/>
<polygon points="530.6,438.5 538.2,434.0 538.2,565.5 530.6,570.0" fill="url(#rf7)"/>
<polygon points="537.4,434.0 545.0,429.5 545.0,561.0 537.4,565.5" fill="url(#rf8)"/>
<polygon points="544.2,429.5 551.8,425.0 551.8,556.5 544.2,561.0" fill="url(#rf9)"/>
<polygon points="551.0,425.0 558.6,420.5 558.6,552.0 551.0,556.5" fill="url(#rf10)"/>
<polygon points="557.8,420.5 565.4,416.0 565.4,547.5 557.8,552.0" fill="url(#rf11)"/>
<polygon points="564.6,416.0 572.2,411.5 572.2,543.0 564.6,547.5" fill="url(#rf12)"/>
<polygon points="571.4,411.5 579.0,407.0 579.0,538.5 571.4,543.0" fill="url(#rf13)"/>
<polygon points="578.2,407.0 585.8,402.5 585.8,534.0 578.2,538.5" fill="url(#rf14)"/>
<polygon points="585.0,402.5 592.6,398.0 592.6,529.5 585.0,534.0" fill="url(#rf15)"/>
<polygon points="591.8,398.0 599.4,393.5 599.4,525.0 591.8,529.5" fill="url(#rf16)"/>
<polygon points="598.6,393.5 606.2,389.0 606.2,520.5 598.6,525.0" fill="url(#rf17)"/>
<polygon points="605.4,389.0 613.0,384.5 613.0,516.0 605.4,520.5" fill="url(#rf18)"/>
<polygon points="612.2,384.5 619.8,380.0 619.8,511.4 612.2,516.0" fill="url(#rf19)"/>
<polygon points="619.0,380.0 626.5,375.5 626.5,506.9 619.0,511.4" fill="url(#rf20)"/>
<polygon points="625.7,375.5 633.3,371.0 633.3,502.4 625.7,506.9" fill="url(#rf21)"/>
<polygon points="632.5,371.0 640.1,366.5 640.1,497.9 632.5,502.4" fill="url(#rf22)"/>
<polygon points="639.3,366.5 646.9,362.0 646.9,493.4 639.3,497.9" fill="url(#rf23)"/>
<polygon points="646.1,362.0 653.7,357.5 653.7,488.9 646.1,493.4" fill="url(#rf24)"/>
<polygon points="652.9,357.5 660.5,353.0 660.5,484.4 652.9,488.9" fill="url(#rf25)"/>
<polygon points="659.7,353.0 667.3,348.5 667.3,479.9 659.7,484.4" fill="url(#rf26)"/>
<polygon points="666.5,348.5 674.1,344.0 674.1,475.4 666.5,479.9" fill="url(#rf27)"/>
<polygon points="673.3,344.0 680.9,339.5 680.9,470.9 673.3,475.4" fill="url(#rf28)"/>
<polygon points="680.1,339.5 687.7,335.0 687.7,466.4 680.1,470.9" fill="url(#rf29)"/>
<polygon points="686.9,335.0 694.5,330.5 694.5,461.9 686.9,466.4" fill="url(#rf30)"/>
<polygon points="693.7,330.5 701.3,326.0 701.3,457.4 693.7,461.9" fill="url(#rf31)"/>
<polygon points="700.5,326.0 708.1,321.5 708.1,452.9 700.5,457.4" fill="url(#rf32)"/>
<polygon points="707.3,321.5 714.8,317.0 714.8,448.4 707.3,452.9" fill="url(#rf33)"/>
<polygon points="714.0,317.0 721.6,312.5 721.6,443.9 714.0,448.4" fill="url(#rf34)"/>
<polygon points="720.8,312.5 728.4,308.0 728.4,439.4 720.8,443.9" fill="url(#rf35)"/>
<polygon points="727.6,308.0 735.2,303.5 735.2,434.9 727.6,439.4" fill="url(#rf36)"/>
<polygon points="734.4,303.5 742.0,299.0 742.0,430.4 734.4,434.9" fill="url(#rf37)"/>
<polygon points="741.2,299.0 748.8,294.5 748.8,425.9 741.2,430.4" fill="url(#rf38)"/>
<polygon points="748.0,294.5 755.6,290.0 755.6,421.4 748.0,425.9" fill="url(#rf39)"/>
<polygon points="100.1,401.0 104.9,402.2 104.9,492.3 100.1,491.2" fill="url(#ff0)"/>
<polygon points="104.1,402.2 108.9,403.4 108.9,493.5 104.1,492.3" fill="url(#ff1)"/>
<polygon points="108.1,403.4 112.9,404.6 112.9,494.6 108.1,493.5" fill="url(#ff2)"/>
<polygon points="112.1,404.6 116.9,405.8 116.9,495.8 112.1,494.6" fill="url(#ff3)"/>
<polygon points="116.1,405.8 120.8,407.0 120.8,496.9 116.1,495.8" fill="url(#ff4)"/>
<polygon points="120.0,407.0 124.8,408.2 124.8,498.1 120.0,496.9" fill="url(#ff5)"/>
<polygon points="124.0,408.2 128.8,409.4 128.8,499.3 124.0,498.1" fill="url(#ff6)"/>
<polygon points="128.0,409.4 132.8,410.6 132.8,500.4 128.0,499.3" fill="url(#ff7)"/>
<polygon points="132.0,410.6 136.8,411.8 136.8,501.6 132.0,500.4" fill="url(#ff8)"/>
<polygon points="136.0,411.8 140.8,413.0 140.8,502.7 136.0,501.6" fill="url(#ff9)"/>
<polygon points="140.0,413.0 144.8,414.2 144.8,503.9 140.0,502.7" fill="url(#ff10)"/>
<polygon points="144.0,414.2 148.8,415.4 148.8,505.0 144.0,503.9" fill="url(#ff11)"/>
<polygon points="148.0,415.4 152.8,416.6 152.8,506.2 148.0,505.0" fill="url(#ff12)"/>
<polygon points="152.0,416.6 156.8,417.8 156.8,507.3 152.0,506.2" fill="url(#ff13)"/>
<polygon points="156.0,417.8 160.7,419.0 160.7,508.5 156.0,507.3" fill="url(#ff14)"/>
<polygon points="159.9,419.0 164.7,420.2 164.7,509.6 159.9,508.5" fill="url(#ff15)"/>
<polygon points="163.9,420.2 168.7,421.4 168.7,510.8 163.9,509.6" fill="url(#ff16)"/>
<polygon points="167.9,421.4 172.7,422.6 172.7,512.0 167.9,510.8" fill="url(#ff17)"/>
<polygon points="171.9,422.6 176.7,423.8 176.7,513.1 171.9,512.0" fill="url(#ff18)"/>
<polygon points="175.9,423.8 180.7,425.0 180.7,514.3 175.9,513.1" fill="url(#ff19)"/>
<polygon points="179.9,425.0 184.7,426.2 184.7,515.4 179.9,514.3" fill="url(#ff20)"/>
<polygon points="183.9,426.2 188.7,427.4 188.7,516.6 183.9,515.4" fill="url(#ff21)"/>
<polygon points="187.9,427.4 192.7,428.6 192.7,517.7 187.9,516.6" fill="url(#ff22)"/>
<polygon points="191.9,428.6 196.7,429.8 196.7,518.9 191.9,517.7" fill="url(#ff23)"/>
<polygon points="195.8,429.8 200.6,431.0 200.6,520.0 195.8,518.9" fill="url(#ff24)"/>
<polygon points="199.8,431.0 204.6,432.2 204.6,521.2 199.8,520.0" fill="url(#ff25)"/>
<polygon points="203.8,432.2 208.6,433.4 208.6,522.3 203.8,521.2" fill="url(#ff26)"/>
<polygon points="207.8,433.4 212.6,434.6 212.6,523.5 207.8,522.3" fill="url(#ff27)"/>
<polygon points="211.8,434.6 216.6,435.8 216.6,524.7 211.8,523.5" fill="url(#ff28)"/>
<polygon points="215.8,435.8 220.6,437.0 220.6,525.8 215.8,524.7" fill="url(#ff29)"/>
<polygon points="219.8,437.0 224.6,438.2 224.6,527.0 219.8,525.8" fill="url(#ff30)"/>
<polygon points="223.8,438.2 228.6,439.4 228.6,528.1 223.8,527.0" fill="url(#ff31)"/>
<polygon points="227.8,439.4 232.6,440.6 232.6,529.3 227.8,528.1" fill="url(#ff32)"/>
<polygon points="231.8,440.6 236.5,441.8 236.5,530.4 231.8,529.3" fill="url(#ff33)"/>
<polygon points="235.7,441.8 240.5,443.0 240.5,531.6 235.7,530.4" fill="url(#ff34)"/>
<polygon points="239.7,443.0 244.5,444.2 244.5,532.7 239.7,531.6" fill="url(#ff35)"/>
<polygon points="243.7,444.2 248.5,445.4 248.5,533.9 243.7,532.7" fill="url(#ff36)"/>
<polygon points="247.7,445.4 252.5,447.0 252.5,535.0 247.7,533.9" fill="url(#ff37)"/>
<polygon points="251.7,447.0 256.5,448.9 256.5,536.2 251.7,535.0" fill="url(#ff38)"/>
<polygon points="255.7,448.9 260.5,450.7 260.5,537.3 255.7,536.2" fill="url(#ff39)"/>
<polygon points="259.7,450.7 264.5,452.6 264.5,538.5 259.7,537.3" fill="url(#ff40)"/>
<polygon points="263.7,452.6 268.5,454.5 268.5,539.7 263.7,538.5" fill="url(#ff41)"/>
<polygon points="267.7,454.5 272.5,456.4 272.5,540.8 267.7,539.7" fill="url(#ff42)"/>
<polygon points="271.7,456.4 276.4,458.2 276.4,542.0 271.7,540.8" fill="url(#ff43)"/>
<polygon points="275.6,458.2 280.4,460.1 280.4,543.1 275.6,542.0" fill="url(#ff44)"/>
<polygon points="279.6,460.1 284.4,462.0 284.4,544.3 279.6,543.1" fill="url(#ff45)"/>
<polygon points="283.6,462.0 288.4,463.9 288.4,545.4 283.6,544.3" fill="url(#ff46)"/>
<polygon points="287.6,463.9 292.4,465.7 292.4,546.6 287.6,545.4" fill="url(#ff47)"/>
<polygon points="291.6,465.7 296.4,467.6 296.4,547.7 291.6,546.6" fill="url(#ff48)"/>
<polygon points="295.6,467.6 300.4,469.5 300.4,548.9 295.6,547.7" fill="url(#ff49)"/>
<polygon points="299.6,469.5 304.4,470.7 304.4,550.0 299.6,548.9" fill="url(#ff50)"/>
<polygon points="303.6,470.7 308.4,471.9 308.4,551.2 303.6,550.0" fill="url(#ff51)"/>
<polygon points="307.6,471.9 312.3,473.1 312.3,552.4 307.6,551.2" fill="url(#ff52)"/>
<polygon points="311.5,473.1 316.3,474.3 316.3,553.5 311.5,552.4" fill="url(#ff53)"/>
<polygon points="315.5,474.3 320.3,475.5 320.3,554.7 315.5,553.5" fill="url(#ff54)"/>
<polygon points="319.5,475.5 324.3,476.6 324.3,555.8 319.5,554.7" fill="url(#ff55)"/>
<polygon points="323.5,476.6 328.3,477.8 328.3,557.0 323.5,555.8" fill="url(#ff56)"/>
<polygon points="327.5,477.8 332.3,479.0 332.3,558.1 327.5,557.0" fill="url(#ff57)"/>
<polygon points="331.5,479.0 336.3,480.2 336.3,559.3 331.5,558.1" fill="url(#ff58)"/>
<polygon points="335.5,480.2 340.3,481.4 340.3,560.4 335.5,559.3" fill="url(#ff59)"/>
<polygon points="339.5,481.4 344.3,482.6 344.3,561.6 339.5,560.4" fill="url(#ff60)"/>
<polygon points="343.5,482.6 348.3,483.8 348.3,562.7 343.5,561.6" fill="url(#ff61)"/>
<polygon points="347.5,483.8 352.2,485.0 352.2,563.9 347.5,562.7" fill="url(#ff62)"/>
<polygon points="351.4,485.0 356.2,486.2 356.2,565.1 351.4,563.9" fill="url(#ff63)"/>
<polygon points="355.4,486.2 360.2,487.4 360.2,566.2 355.4,565.1" fill="url(#ff64)"/>
<polygon points="359.4,487.4 364.2,488.6 364.2,567.4 359.4,566.2" fill="url(#ff65)"/>
<polygon points="363.4,488.6 368.2,489.7 368.2,568.5 363.4,567.4" fill="url(#ff66)"/>
<polygon points="367.4,489.7 372.2,490.9 372.2,569.7 367.4,568.5" fill="url(#ff67)"/>
<polygon points="371.4,490.9 376.2,492.1 376.2,570.8 371.4,569.7" fill="url(#ff68)"/>
<polygon points="375.4,492.1 380.2,493.3 380.2,572.0 375.4,570.8" fill="url(#ff69)"/>
<polygon points="379.4,493.3 384.2,494.5 384.2,573.1 379.4,572.0" fill="url(#ff70)"/>
<polygon points="383.4,494.5 388.1,495.7 388.1,574.3 383.4,573.1" fill="url(#ff71)"/>
<polygon points="387.4,495.7 392.1,496.9 392.1,575.4 387.4,574.3" fill="url(#ff72)"/>
<polygon points="391.3,496.9 396.1,498.1 396.1,576.6 391.3,575.4" fill="url(#ff73)"/>
<polygon points="395.3,498.1 400.1,499.3 400.1,577.8 395.3,576.6" fill="url(#ff74)"/>
<polygon points="399.3,499.3 404.1,500.5 404.1,578.9 399.3,577.8" fill="url(#ff75)"/>
<polygon points="403.3,500.5 408.1,501.7 408.1,580.1 403.3,578.9" fill="url(#ff76)"/>
<polygon points="407.3,501.7 412.1,502.9 412.1,581.2 407.3,580.1" fill="url(#ff77)"/>
<polygon points="411.3,502.9 416.1,504.0 416.1,582.4 411.3,581.2" fill="url(#ff78)"/>
<polygon points="415.3,504.0 420.1,505.2 420.1,583.5 415.3,582.4" fill="url(#ff79)"/>
<polygon points="419.3,505.2 424.1,506.4 424.1,584.7 419.3,583.5" fill="url(#ff80)"/>
<polygon points="423.3,506.4 428.0,507.6 428.0,585.8 423.3,584.7" fill="url(#ff81)"/>
<polygon points="427.2,507.6 432.0,508.8 432.0,587.0 427.2,585.8" fill="url(#ff82)"/>
<polygon points="431.2,508.8 436.0,510.0 436.0,588.1 431.2,587.0" fill="url(#ff83)"/>
<polygon points="435.2,510.0 440.0,511.2 440.0,589.3 435.2,588.1" fill="url(#ff84)"/>
<polygon points="439.2,511.2 444.0,512.4 444.0,590.5 439.2,589.3" fill="url(#ff85)"/>
<polygon points="443.2,512.4 448.0,513.6 448.0,591.6 443.2,590.5" fill="url(#ff86)"/>
<polygon points="447.2,513.6 452.0,514.8 452.0,592.8 447.2,591.6" fill="url(#ff87)"/>
<polygon points="451.2,514.8 456.0,516.0 456.0,593.9 451.2,592.8" fill="url(#ff88)"/>
<polygon points="455.2,516.0 460.0,517.2 460.0,595.1 455.2,593.9" fill="url(#ff89)"/>
<polygon points="459.2,517.2 464.0,518.3 464.0,596.2 459.2,595.1" fill="url(#ff90)"/>
<polygon points="463.2,518.3 467.9,519.5 467.9,597.4 463.2,596.2" fill="url(#ff91)"/>
<polygon points="467.1,519.5 471.9,520.7 471.9,598.5 467.1,597.4" fill="url(#ff92)"/>
<polygon points="471.1,520.7 475.9,521.9 475.9,599.7 471.1,598.5" fill="url(#ff93)"/>
<polygon points="475.1,521.9 479.9,523.1 479.9,600.8 475.1,599.7" fill="url(#ff94)"/>
<polygon points="479.1,523.1 483.9,524.3 483.9,602.0 479.1,600.8" fill="url(#ff95)"/>
<polygon points="72.9,455.3 78.2,452.8 78.2,484.6 72.9,483.3" fill="url(#ffl0)"/>
<polygon points="77.4,452.8 82.8,450.2 82.8,485.9 77.4,484.6" fill="url(#ffl1)"/>
<polygon points="82.0,450.2 87.3,447.7 87.3,487.2 82.0,485.9" fill="url(#ffl2)"/>
<polygon points="86.5,447.7 91.8,445.1 91.8,488.5 86.5,487.2" fill="url(#ffl3)"/>
<polygon points="91.0,445.1 96.4,442.6 96.4,489.9 91.0,488.5" fill="url(#ffl4)"/>
<polygon points="95.6,442.6 100.9,440.0 100.9,491.2 95.6,489.9" fill="url(#ffl5)"/>
<polygon points="73.3,465.2 75.8,466.0 78.3,466.5 80.8,467.3 83.3,468.2 85.8,468.3 88.3,468.4 90.8,469.5 93.3,469.9 95.8,470.4 98.3,471.8 100.8,472.5 103.3,473.7 105.8,474.4 108.3,475.3 110.8,475.6 113.3,476.5 115.8,477.7 118.3,478.5 120.8,479.6 123.3,480.5 125.8,480.6 128.3,481.7 130.8,482.6 133.3,483.0 135.8,483.1 138.3,484.4 140.8,485.1 143.3,486.1 145.8,487.3 148.3,488.4 150.8,489.2 153.3,489.7 155.8,490.6 158.3,491.1 160.8,491.9 163.3,492.6 165.8,492.7 168.3,492.8 170.8,493.1 173.3,494.4 175.9,495.0 178.4,495.8 180.9,496.3 183.4,497.1 185.9,497.7 188.4,498.3 190.9,499.2 193.4,500.1 195.9,501.5 198.4,502.6 200.9,503.6 203.4,504.2 205.9,504.8 208.4,505.4 210.9,505.5 213.4,506.5 215.9,507.1 218.4,507.7 220.9,508.3 223.4,508.9 225.9,509.1 228.4,510.1 230.9,510.7 233.4,510.9 235.9,510.9 238.4,512.0 240.9,513.1 243.4,513.4 245.9,514.8 248.4,515.5 250.9,516.0 253.4,516.6 255.9,517.9 258.4,519.3 260.9,519.6 263.4,520.7 265.9,521.0 268.4,522.2 270.9,522.9 273.4,524.3 275.9,525.9 278.4,526.8 280.9,527.8 283.4,528.4 285.9,528.7 288.4,529.8 290.9,530.0 293.4,530.2 295.9,530.8 298.4,531.6 300.9,531.8 303.4,532.0 305.9,533.2 308.4,533.6 310.9,534.9 313.4,536.2 315.9,536.7 318.4,537.3 320.9,538.0 323.4,538.8 325.9,539.5 328.4,540.2 330.9,541.0 333.4,542.2 335.9,542.8 338.4,543.3 340.9,544.2 343.4,544.4 345.9,544.8 348.4,546.0 350.9,546.7 353.4,547.5 355.9,547.6 358.4,548.2 360.9,549.0 363.4,549.1 365.9,550.0 368.4,550.9 370.9,551.0 373.4,551.9 375.9,552.6 378.4,553.6 380.9,554.1 383.5,555.2 386.0,556.2 388.5,556.3 391.0,556.4 393.5,557.4 396.0,558.8 398.5,559.2 401.0,559.9 403.5,560.8 406.0,561.3 408.5,561.9 411.0,562.4 413.5,562.9 416.0,563.8 418.5,564.1 421.0,564.6 423.5,565.6 426.0,565.7 428.5,566.4 431.0,567.5 433.5,568.1 436.0,568.8 438.5,570.1 441.0,570.6 443.5,571.5 446.0,572.1 448.5,572.6 451.0,572.6 453.5,572.8 456.0,573.1 458.5,573.8 461.0,574.0 463.5,574.7 466.0,574.5 468.5,574.5 471.0,575.0 473.5,575.7 476.0,576.0 478.5,576.1 481.0,576.1 483.5,576.6 483.5,602.0 73.3,483.3" fill="#7c0000" />
<polygon points="483.5,578.2 486.0,577.2 488.5,576.3 491.0,575.4 493.6,574.1 496.1,572.8 498.6,570.8 501.1,569.4 503.6,568.7 506.1,567.5 508.7,566.1 511.2,564.3 513.7,562.9 516.2,561.2 518.7,559.9 521.2,558.7 523.8,556.7 526.3,555.0 528.8,551.1 531.3,547.0 533.8,543.5 536.3,541.6 538.8,540.6 541.4,538.7 543.9,537.4 546.4,535.5 548.9,533.4 551.4,532.6 553.9,530.7 556.5,528.8 559.0,527.4 561.5,525.9 564.0,523.5 566.5,522.1 569.0,520.1 571.6,518.3 574.1,515.8 576.6,514.4 579.1,512.7 581.6,511.4 584.1,509.7 586.6,507.7 589.2,505.7 591.7,503.5 594.2,501.2 596.7,498.8 599.2,496.7 601.7,494.9 604.3,492.4 606.8,490.8 609.3,488.7 611.8,486.8 614.3,485.3 616.8,483.8 619.4,482.0 621.9,480.4 624.4,479.2 626.9,477.3 629.4,476.4 631.9,474.2 634.4,472.8 637.0,471.4 639.5,468.9 642.0,467.4 644.5,465.3 647.0,463.6 649.5,461.2 652.1,459.4 654.6,457.6 657.1,456.4 659.6,454.2 662.1,452.7 664.6,451.5 667.1,450.3 669.7,448.3 672.2,446.3 674.7,444.5 677.2,442.4 679.7,438.5 682.2,436.9 684.8,435.5 687.3,434.2 689.8,431.7 692.3,430.6 694.8,428.2 697.3,426.2 699.9,424.5 702.4,423.3 704.9,421.3 707.4,420.1 709.9,418.3 712.4,416.2 714.9,414.1 717.5,411.9 720.0,409.6 722.5,407.3 725.0,405.8 727.5,404.7 730.0,402.5 732.6,400.1 735.1,399.0 737.6,397.3 740.1,395.4 742.6,393.3 745.1,391.6 747.7,390.3 750.2,388.5 752.7,386.6 755.2,384.2 755.2,421.4 483.5,601.5" fill="#780000" />
<polyline points="73.3,468.2 75.8,469.0 78.3,469.5 80.8,470.3 83.3,471.2 85.8,471.3 88.3,471.4 90.8,472.5 93.3,472.9 95.8,473.4 98.3,474.8 100.8,475.5 103.3,476.7 105.8,477.4 108.3,478.3 110.8,478.6 113.3,479.5 115.8,480.7 118.3,481.5 120.8,482.6 123.3,483.5 125.8,483.6 128.3,484.7 130.8,485.6 133.3,486.0 135.8,486.1 138.3,487.4 140.8,488.1 143.3,489.1 145.8,490.3 148.3,491.4 150.8,492.2 153.3,492.7 155.8,493.6 158.3,494.1 160.8,494.9 163.3,495.6 165.8,495.7 168.3,495.8 170.8,496.1 173.3,497.4 175.9,498.0 178.4,498.8 180.9,499.3 183.4,500.1 185.9,500.7 188.4,501.3 190.9,502.2 193.4,503.1 195.9,504.5 198.4,505.6 200.9,506.6 203.4,507.2 205.9,507.8 208.4,508.4 210.9,508.5 213.4,509.5 215.9,510.1 218.4,510.7 220.9,511.3 223.4,511.9 225.9,512.1 228.4,513.1 230.9,513.7 233.4,513.9 235.9,513.9 238.4,515.0 240.9,516.1 243.4,516.4 245.9,517.8 248.4,518.5 250.9,519.0 253.4,519.6 255.9,520.9 258.4,522.3 260.9,522.6 263.4,523.7 265.9,524.0 268.4,525.2 270.9,525.9 273.4,527.3 275.9,528.9 278.4,529.8 280.9,530.8 283.4,531.4 285.9,531.7 288.4,532.8 290.9,533.0 293.4,533.2 295.9,533.8 298.4,534.6 300.9,534.8 303.4,535.0 305.9,536.2 308.4,536.6 310.9,537.9 313.4,539.2 315.9,539.7 318.4,540.3 320.9,541.0 323.4,541.8 325.9,542.5 328.4,543.2 330.9,544.0 333.4,545.2 335.9,545.8 338.4,546.3 340.9,547.2 343.4,547.4 345.9,547.8 348.4,549.0 350.9,549.7 353.4,550.5 355.9,550.6 358.4,551.2 360.9,552.0 363.4,552.1 365.9,553.0 368.4,553.9 370.9,554.0 373.4,554.9 375.9,555.6 378.4,556.6 380.9,557.1 383.5,558.2 386.0,559.2 388.5,559.3 391.0,559.4 393.5,560.4 396.0,561.8 398.5,562.2 401.0,562.9 403.5,563.8 406.0,564.3 408.5,564.9 411.0,565.4 413.5,565.9 416.0,566.8 418.5,567.1 421.0,567.6 423.5,568.6 426.0,568.7 428.5,569.4 431.0,570.5 433.5,571.1 436.0,571.8 438.5,573.1 441.0,573.6 443.5,574.5 446.0,575.1 448.5,575.6 451.0,575.6 453.5,575.8 456.0,576.1 458.5,576.8 461.0,577.0 463.5,577.7 466.0,577.5 468.5,577.5 471.0,578.0 473.5,578.7 476.0,579.0 478.5,579.1 481.0,579.1 483.5,579.6" fill="none" stroke="#6a0000" stroke-width="3" opacity="0.6"/>
<polyline points="483.5,582.2 486.0,581.2 488.5,580.3 491.0,579.4 493.6,578.1 496.1,576.8 498.6,574.8 501.1,573.4 503.6,572.7 506.1,571.5 508.7,570.1 511.2,568.3 513.7,566.9 516.2,565.2 518.7,563.9 521.2,562.7 523.8,560.7 526.3,559.0 528.8,555.1 531.3,551.0 533.8,547.5 536.3,545.6 538.8,544.6 541.4,542.7 543.9,541.4 546.4,539.5 548.9,537.4 551.4,536.6 553.9,534.7 556.5,532.8 559.0,531.4 561.5,529.9 564.0,527.5 566.5,526.1 569.0,524.1 571.6,522.3 574.1,519.8 576.6,518.4 579.1,516.7 581.6,515.4 584.1,513.7 586.6,511.7 589.2,509.7 591.7,507.5 594.2,505.2 596.7,502.8 599.2,500.7 601.7,498.9 604.3,496.4 606.8,494.8 609.3,492.7 611.8,490.8 614.3,489.3 616.8,487.8 619.4,486.0 621.9,484.4 624.4,483.2 626.9,481.3 629.4,480.4 631.9,478.2 634.4,476.8 637.0,475.4 639.5,472.9 642.0,471.4 644.5,469.3 647.0,467.6 649.5,465.2 652.1,463.4 654.6,461.6 657.1,460.4 659.6,458.2 662.1,456.7 664.6,455.5 667.1,454.3 669.7,452.3 672.2,450.3 674.7,448.5 677.2,446.4 679.7,442.5 682.2,440.9 684.8,439.5 687.3,438.2 689.8,435.7 692.3,434.6 694.8,432.2 697.3,430.2 699.9,428.5 702.4,427.3 704.9,425.3 707.4,424.1 709.9,422.3 712.4,420.2 714.9,418.1 717.5,415.9 720.0,413.6 722.5,411.3 725.0,409.8 727.5,408.7 730.0,406.5 732.6,404.1 735.1,403.0 737.6,401.3 740.1,399.4 742.6,397.3 745.1,395.6 747.7,394.3 750.2,392.5 752.7,390.6 755.2,388.2" fill="none" stroke="#680000" stroke-width="4" opacity="0.6"/>
<polyline points="73.3,477.2 75.8,478.0 78.3,478.5 80.8,479.3 83.3,480.2 85.8,480.3 88.3,480.4 90.8,481.5 93.3,481.9 95.8,482.4 98.3,483.8 100.8,484.5 103.3,485.7 105.8,486.4 108.3,487.3 110.8,487.6 113.3,488.5 115.8,489.7 118.3,490.5 120.8,491.6 123.3,492.5 125.8,492.6 128.3,493.7 130.8,494.6 133.3,495.0 135.8,495.1 138.3,496.4 140.8,497.1 143.3,498.1 145.8,499.3 148.3,500.4 150.8,501.2 153.3,501.7 155.8,502.6 158.3,503.1 160.8,503.9 163.3,504.6 165.8,504.7 168.3,504.8 170.8,505.1 173.3,506.4 175.9,507.0 178.4,507.8 180.9,508.3 183.4,509.1 185.9,509.7 188.4,510.3 190.9,511.2 193.4,512.1 195.9,513.5 198.4,514.6 200.9,515.6 203.4,516.2 205.9,516.8 208.4,517.4 210.9,517.5 213.4,518.5 215.9,519.1 218.4,519.7 220.9,520.3 223.4,520.9 225.9,521.1 228.4,522.1 230.9,522.7 233.4,522.9 235.9,522.9 238.4,524.0 240.9,525.1 243.4,525.4 245.9,526.8 248.4,527.5 250.9,528.0 253.4,528.6 255.9,529.9 258.4,531.3 260.9,531.6 263.4,532.7 265.9,533.0 268.4,534.2 270.9,534.9 273.4,536.3 275.9,537.9 278.4,538.8 280.9,539.8 283.4,540.4 285.9,540.7 288.4,541.8 290.9,542.0 293.4,542.2 295.9,542.8 298.4,543.6 300.9,543.8 303.4,544.0 305.9,545.2 308.4,545.6 310.9,546.9 313.4,548.2 315.9,548.7 318.4,549.3 320.9,550.0 323.4,550.8 325.9,551.5 328.4,552.2 330.9,553.0 333.4,554.2 335.9,554.8 338.4,555.3 340.9,556.2 343.4,556.4 345.9,556.8 348.4,558.0 350.9,558.7 353.4,559.5 355.9,559.6 358.4,560.2 360.9,561.0 363.4,561.1 365.9,562.0 368.4,562.9 370.9,563.0 373.4,563.9 375.9,564.6 378.4,565.6 380.9,566.1 383.5,567.2 386.0,568.2 388.5,568.3 391.0,568.4 393.5,569.4 396.0,570.8 398.5,571.2 401.0,571.9 403.5,572.8 406.0,573.3 408.5,573.9 411.0,574.4 413.5,574.9 416.0,575.8 418.5,576.1 421.0,576.6 423.5,577.6 426.0,577.7 428.5,578.4 431.0,579.5 433.5,580.1 436.0,580.8 438.5,582.1 441.0,582.6 443.5,583.5 446.0,584.1 448.5,584.6 451.0,584.6 453.5,584.8 456.0,585.1 458.5,585.8 461.0,586.0 463.5,586.7 466.0,586.5 468.5,586.5 471.0,587.0 473.5,587.7 476.0,588.0 478.5,588.1 481.0,588.1 483.5,588.6" fill="none" stroke="#860000" stroke-width="6" opacity="0.5"/>
<line x1="483.3" y1="524.0" x2="483.3" y2="578.0" stroke="#a4aa86" stroke-width="1.2" opacity="0.8"/>
<g clip-path="url(#aboveframe)">
<g filter="url(#blur12)" opacity="0.5"><polyline points="538.4,449.7 523.6,449.7 515.1,445.4 500.3,441.2 489.8,440.2 470.7,440.2 462.3,437.0 453.8,440.2 432.7,441.2 422.1,444.4 408.5,449.6 384.0,444.2 381.3,434.6 362.3,433.3 337.9,431.9 316.1,425.1 303.4,410.0 301.6,387.5 312.5,373.0 330.6,358.5 319.7,351.2 316.1,329.5 330.6,322.2 334.2,311.3 312.5,316.8 290.7,318.6 276.2,313.2 272.6,307.7 287.1,305.9 312.5,296.9 337.9,295.0 352.4,286.0 341.5,278.7 348.7,275.1 370.5,262.4 359.6,257.0 363.2,249.7 392.2,248.0 410.3,235.2 385.0,228.0 366.9,235.2 365.0,217.0 327.0,204.4" fill="none" stroke="#5050c8" stroke-width="64" stroke-linejoin="round"/></g>
<g filter="url(#blur6)" opacity="0.8"><polyline points="538.4,449.7 523.6,449.7 515.1,445.4 500.3,441.2 489.8,440.2 470.7,440.2 462.3,437.0 453.8,440.2 432.7,441.2 422.1,444.4 408.5,449.6 384.0,444.2 381.3,434.6 362.3,433.3 337.9,431.9 316.1,425.1 303.4,410.0 301.6,387.5 312.5,373.0 330.6,358.5 319.7,351.2 316.1,329.5 330.6,322.2 334.2,311.3 312.5,316.8 290.7,318.6 276.2,313.2 272.6,307.7 287.1,305.9 312.5,296.9 337.9,295.0 352.4,286.0 341.5,278.7 348.7,275.1 370.5,262.4 359.6,257.0 363.2,249.7 392.2,248.0 410.3,235.2 385.0,228.0 366.9,235.2 365.0,217.0 327.0,204.4" fill="none" stroke="#7676b8" stroke-width="32" stroke-linejoin="round"/></g>
<g filter="url(#blur3)" opacity="0.9"><polyline points="538.4,449.7 523.6,449.7 515.1,445.4 500.3,441.2 489.8,440.2 470.7,440.2 462.3,437.0 453.8,440.2 432.7,441.2 422.1,444.4 408.5,449.6 384.0,444.2 381.3,434.6 362.3,433.3 337.9,431.9 316.1,425.1 303.4,410.0 301.6,387.5 312.5,373.0 330.6,358.5 319.7,351.2 316.1,329.5 330.6,322.2 334.2,311.3 312.5,316.8 290.7,318.6 276.2,313.2 272.6,307.7 287.1,305.9 312.5,296.9 337.9,295.0 352.4,286.0 341.5,278.7 348.7,275.1 370.5,262.4 359.6,257.0 363.2,249.7 392.2,248.0 410.3,235.2 385.0,228.0 366.9,235.2 365.0,217.0 327.0,204.4" fill="none" stroke="#9c9a8c" stroke-width="12" stroke-linejoin="round"/></g>
<g filter="url(#blur12)"><polygon points="230.0,445.0 300.0,425.0 420.0,445.0 480.0,470.0 483.0,524.0 300.0,482.0 230.0,470.0" fill="#6a6abc" opacity="0.55"/></g>
<g filter="url(#blur6)"><polygon points="300.0,225.0 330.0,203.0 345.0,195.0 380.0,230.0 410.0,235.0 370.0,250.0 350.0,280.0 315.0,265.0" fill="#7a7ab0" opacity="0.5"/><polygon points="300.0,322.0 320.0,318.0 330.0,330.0 320.0,345.0 305.0,340.0" fill="#8a8aa8" opacity="0.5"/></g>
</g>
<g clip-path="url(#aboveframe)">
<g filter="url(#blur4)"><polygon points="330.0,484.0 380.0,488.0 420.0,490.0 447.0,480.0 477.0,477.0 498.0,481.0 513.0,472.0 526.0,459.0 546.8,450.0 560.0,446.0 540.0,500.0 483.5,526.0 330.0,530.0" fill="#a0a27e" /></g>
<g filter="url(#blur2)"><polygon points="296.6,455.2 307.0,455.2 303.1,470.1" fill="#5a5ab8" opacity="0.28"/><polygon points="301.3,456.0 315.4,456.0 306.9,470.7" fill="#5a5ab8" opacity="0.41"/><polygon points="312.9,457.0 321.1,457.0 318.8,471.4" fill="#5a5ab8" opacity="0.29"/><polygon points="319.2,458.3 335.6,458.3 326.1,476.5" fill="#5a5ab8" opacity="0.33"/><polygon points="324.9,458.8 338.2,458.8 330.3,476.1" fill="#5a5ab8" opacity="0.30"/><polygon points="333.2,459.8 346.8,459.8 339.7,482.1" fill="#5a5ab8" opacity="0.43"/><polygon points="339.5,460.8 357.4,460.8 349.4,480.7" fill="#5a5ab8" opacity="0.44"/><polygon points="355.3,462.4 367.9,462.4 359.9,489.0" fill="#5a5ab8" opacity="0.45"/><polygon points="362.0,463.2 374.5,463.2 369.3,490.9" fill="#5a5ab8" opacity="0.39"/><polygon points="369.9,463.9 378.5,463.9 375.6,487.6" fill="#5a5ab8" opacity="0.49"/><polygon points="379.9,465.4 393.2,465.4 385.4,491.2" fill="#5a5ab8" opacity="0.37"/><polygon points="389.0,466.4 400.9,466.4 396.7,494.7" fill="#5a5ab8" opacity="0.26"/><polygon points="396.2,467.2 407.8,467.2 403.9,501.1" fill="#5a5ab8" opacity="0.28"/><polygon points="406.0,468.6 420.9,468.6 411.6,499.3" fill="#5a5ab8" opacity="0.37"/><polygon points="414.7,469.4 425.6,469.4 418.5,506.1" fill="#5a5ab8" opacity="0.46"/><polygon points="422.2,470.6 437.7,470.6 430.3,504.0" fill="#5a5ab8" opacity="0.27"/><polygon points="428.1,471.3 443.7,471.3 434.0,506.7" fill="#5a5ab8" opacity="0.25"/><polygon points="437.5,472.0 446.6,472.0 441.6,507.5" fill="#5a5ab8" opacity="0.37"/><polygon points="450.0,473.6 460.6,473.6 456.4,516.1" fill="#5a5ab8" opacity="0.27"/><polygon points="450.7,474.1 468.3,474.1 458.4,518.0" fill="#5a5ab8" opacity="0.38"/><polygon points="461.7,475.3 476.8,475.3 469.7,515.1" fill="#5a5ab8" opacity="0.37"/><polygon points="472.6,476.3 481.6,476.3 477.6,518.3" fill="#5a5ab8" opacity="0.32"/><polygon points="462.0,478.0 502.0,480.0 483.0,522.0" fill="#4646c0" opacity="0.65"/></g>
</g>
<polygon points="343.3,183.5 345.8,184.2 348.3,185.5 350.8,186.1 353.3,186.7 355.9,187.4 358.4,187.0 360.9,186.7 363.4,186.6 365.9,186.8 368.4,185.8 370.9,185.3 373.4,185.2 376.0,186.2 378.5,187.0 381.0,186.8 383.5,188.1 386.0,189.4 388.5,190.1 391.0,190.8 393.5,190.7 396.0,190.3 398.6,190.7 401.1,190.4 403.6,190.3 406.1,190.3 408.6,191.3 411.1,193.6 413.6,195.9 416.1,198.6 418.6,198.9 421.2,199.5 423.7,199.8 426.2,200.4 428.7,200.7 431.2,200.7 433.7,201.8 436.2,203.3 438.7,204.8 441.3,206.0 443.8,206.6 446.3,207.1 448.8,207.6 451.3,207.8 453.8,209.2 456.3,209.9 458.8,211.3 461.3,211.9 463.9,213.4 466.4,214.6 468.9,214.6 471.4,214.9 473.9,216.3 476.4,217.0 478.9,218.4 481.4,219.0 483.9,219.0 486.5,219.8 489.0,220.8 491.5,221.0 494.0,221.0 496.5,221.3 499.0,222.6 501.5,223.6 504.0,223.5 506.6,223.7 509.1,223.6 511.6,223.6 514.1,224.7 516.6,224.9 519.1,225.7 521.6,226.2 524.1,226.4 526.6,227.5 529.2,227.8 531.7,228.7 534.2,229.1 536.7,229.8 539.2,230.4 541.7,231.1 544.2,232.4 546.7,233.4 549.2,233.5 551.8,234.6 554.3,234.6 556.8,234.9 559.3,235.9 561.8,236.6 564.3,236.4 566.8,237.7 569.3,237.7 571.9,237.7 574.4,238.7 576.9,239.0 579.4,239.2 581.9,239.1 584.4,239.5 586.9,240.2 589.4,240.6 591.9,241.3 594.5,241.7 597.0,242.3 599.5,243.6 602.0,244.1 604.5,244.8 607.0,246.0 609.5,245.9 612.0,245.8 614.6,246.9 617.1,247.9 619.6,247.9 622.1,247.8 624.6,248.7 627.1,249.8 629.6,249.8 632.1,250.9 634.6,252.0 637.2,252.6 639.7,252.9 642.2,252.7 644.7,252.6 647.2,253.9 649.7,254.0 652.2,254.9 654.7,255.1 657.2,256.2 659.8,256.9 662.3,257.1 664.8,257.2 667.3,258.1 669.8,258.0 672.3,258.1 674.8,258.7 677.3,259.8 679.9,260.5 682.4,260.7 684.9,261.8 687.4,261.9 689.9,261.6 692.4,261.7 694.9,262.2 697.4,262.7 699.9,263.2 702.5,263.7 705.0,264.3 707.5,264.7 710.0,265.2 712.5,266.3 715.0,267.6 717.5,268.4 720.0,269.2 722.5,269.8 725.1,269.8 727.6,269.5 730.1,269.3 732.6,270.5 735.1,271.3 737.6,272.5 740.1,272.3 742.6,273.0 745.2,273.5 747.7,274.4 750.2,274.6 752.7,275.9 755.2,275.7 755.2,276.3 755.2,313.0 716.3,338.0 677.5,363.0 620.0,400.0 580.0,426.0 560.0,439.0 546.8,447.6 538.4,449.7 523.6,449.7 515.1,445.4 500.3,441.2 489.8,440.2 470.7,440.2 462.3,437.0 453.8,440.2 432.7,441.2 422.1,444.4 408.5,449.6 384.0,444.2 381.3,434.6 362.3,433.3 337.9,431.9 316.1,425.1 303.4,410.0 301.6,387.5 312.5,373.0 330.6,358.5 319.7,351.2 316.1,329.5 330.6,322.2 334.2,311.3 312.5,316.8 290.7,318.6 276.2,313.2 272.6,307.7 287.1,305.9 312.5,296.9 337.9,295.0 352.4,286.0 341.5,278.7 348.7,275.1 370.5,262.4 359.6,257.0 363.2,249.7 392.2,248.0 410.3,235.2 385.0,228.0 366.9,235.2 365.0,217.0 327.0,204.4" fill="#238a24" />
<polygon points="447.5,471.9 466.5,463.4 483.4,459.2 496.1,446.5 510.9,446.5 525.7,457.0 513.0,469.8 498.2,478.2 477.1,474.0 462.3,469.8" fill="#218a22" />
<g clip-path="url(#landclip)"><polygon points="683.0,199.5 687.4,195.0 691.8,193.8 696.2,194.4 700.6,194.3 705.0,194.0 709.5,195.2 713.9,195.7 718.3,195.7 722.7,197.9 727.1,199.5 731.5,200.8 736.0,201.9 740.4,205.0 744.8,211.5 750.8,231.1 677.0,220.0" fill="url(#bg0)" /><polygon points="449.1,200.8 456.7,195.4 464.3,192.7 471.9,192.9 479.5,193.8 487.1,193.1 494.7,195.2 502.3,195.7 509.9,197.0 517.5,199.6 525.1,200.9 532.8,204.6 540.4,207.4 548.0,210.6 555.6,219.7 561.6,245.6 443.1,226.5" fill="url(#bg1)" /><polygon points="500.2,207.5 503.4,201.3 506.6,199.5 509.8,198.9 513.0,199.2 516.1,199.5 519.3,198.6 522.5,198.9 525.7,199.5 528.9,201.8 532.1,203.1 535.3,203.8 538.5,206.6 541.6,208.2 544.8,215.9 550.8,237.3 494.2,229.3" fill="url(#bg2)" /><polygon points="555.6,206.9 559.2,202.4 562.8,201.0 566.3,200.2 569.9,200.7 573.5,200.8 577.0,200.3 580.6,201.8 584.1,202.4 587.7,202.5 591.3,204.9 594.8,206.5 598.4,207.7 601.9,211.0 605.5,216.0 611.5,239.1 549.6,230.2" fill="url(#bg3)" /><polygon points="378.8,206.7 386.1,200.1 393.4,198.8 400.6,198.5 407.9,197.8 415.2,199.0 422.4,198.9 429.7,200.5 437.0,202.9 444.2,204.6 451.5,205.9 458.8,207.9 466.0,212.3 473.3,215.5 480.6,223.6 486.6,252.3 372.8,234.0" fill="url(#bg4)" /><polygon points="381.6,212.6 384.6,204.8 387.6,203.5 390.5,201.0 393.5,200.6 396.5,200.0 399.5,200.6 402.5,200.3 405.5,202.1 408.4,202.8 411.4,204.4 414.4,205.6 417.4,208.1 420.4,210.8 423.3,219.3 429.3,247.6 375.6,240.1" fill="url(#bg5)" /><polygon points="590.5,209.1 598.2,202.9 605.9,201.9 613.5,202.1 621.2,202.8 628.8,202.2 636.5,204.1 644.2,204.5 651.8,206.8 659.5,208.9 667.2,210.1 674.8,213.1 682.5,216.4 690.1,219.4 697.8,227.3 703.8,246.7 584.5,227.4" fill="url(#bg6)" /><polygon points="561.5,211.8 566.2,206.2 570.8,204.8 575.4,203.5 580.0,203.3 584.6,203.8 589.2,204.3 593.9,204.6 598.5,206.4 603.1,206.7 607.7,208.1 612.3,210.1 617.0,212.1 621.6,216.2 626.2,224.7 632.2,247.3 555.5,235.7" fill="url(#bg7)" /><polygon points="317.2,207.5 325.2,204.0 333.1,202.9 341.0,203.2 348.9,202.0 356.8,203.3 364.7,204.1 372.6,205.2 380.5,207.2 388.4,209.6 396.3,212.0 404.3,213.3 412.2,216.4 420.1,220.7 428.0,228.6 434.0,251.0 311.2,231.0" fill="url(#bg8)" /><polygon points="432.5,215.0 435.9,212.8 439.3,212.9 442.7,211.4 446.1,212.4 449.5,211.8 452.9,212.7 456.3,213.2 459.7,214.7 463.1,215.3 466.5,215.3 469.9,216.8 473.3,217.8 476.7,220.9 480.1,224.2 486.1,245.1 426.5,236.6" fill="url(#bg9)" /><polygon points="411.5,219.1 415.3,213.4 419.0,210.9 422.7,211.0 426.4,210.1 430.2,210.4 433.9,210.9 437.6,210.7 441.4,212.2 445.1,212.4 448.8,213.9 452.6,215.5 456.3,218.2 460.0,221.6 463.7,228.2 469.7,249.5 405.5,240.1" fill="url(#bg10)" /><polygon points="698.5,215.9 704.9,210.3 711.3,207.4 717.7,207.3 724.2,207.2 730.6,207.6 737.0,208.3 743.5,209.1 749.9,210.4 756.3,211.2 762.8,213.3 769.2,216.6 775.6,219.1 782.1,222.8 788.5,232.0 794.5,260.8 692.5,244.6" fill="url(#bg11)" /><polygon points="543.3,216.0 551.1,210.5 558.8,209.9 566.5,209.5 574.3,209.0 582.0,209.5 589.7,210.3 597.5,211.9 605.2,214.0 612.9,215.8 620.7,218.1 628.4,220.4 636.1,223.4 643.9,226.5 651.6,234.7 657.6,259.8 537.3,240.3" fill="url(#bg12)" /><polygon points="478.5,217.8 485.1,215.0 491.6,215.2 498.2,215.9 504.8,216.4 511.4,217.2 518.0,218.6 524.6,219.8 531.2,220.8 537.8,222.7 544.4,223.8 550.9,224.6 557.5,227.2 564.1,229.9 570.7,234.5 576.7,254.5 472.5,237.9" fill="url(#bg13)" /><polygon points="420.7,215.8 429.3,211.6 438.0,209.8 446.7,210.0 455.4,209.5 464.0,211.7 472.7,211.7 481.4,213.8 490.0,215.8 498.7,216.5 507.4,220.1 516.1,222.4 524.7,225.8 533.4,229.9 542.1,237.5 548.1,260.0 414.7,238.1" fill="url(#bg14)" /><polygon points="690.6,218.0 698.3,214.5 706.1,214.0 713.9,213.7 721.7,214.2 729.4,216.3 737.2,217.3 745.0,217.6 752.8,219.0 760.5,221.8 768.3,223.1 776.1,225.2 783.9,227.9 791.7,231.9 799.4,236.9 805.4,265.1 684.6,245.5" fill="url(#bg15)" /><polygon points="341.5,221.0 347.8,216.3 354.2,214.6 360.5,214.4 366.8,215.0 373.2,214.6 379.5,216.2 385.8,217.2 392.1,217.6 398.5,220.0 404.8,221.7 411.1,223.5 417.5,226.7 423.8,229.0 430.1,236.5 436.1,255.5 335.5,239.5" fill="url(#bg16)" /><polygon points="589.0,221.1 596.2,214.4 603.3,212.5 610.4,212.3 617.5,212.9 624.7,212.7 631.8,214.1 638.9,214.7 646.0,215.7 653.1,217.9 660.3,220.8 667.4,222.7 674.5,225.7 681.6,229.3 688.7,238.6 694.7,264.7 583.0,246.7" fill="url(#bg17)" /><polygon points="663.6,227.1 666.5,224.2 669.4,223.3 672.3,223.2 675.2,221.9 678.0,222.9 680.9,223.2 683.8,223.4 686.7,224.7 689.6,225.4 692.5,225.8 695.4,227.3 698.2,227.7 701.1,229.6 704.0,234.8 710.0,261.0 657.6,253.8" fill="url(#bg18)" /><polygon points="370.7,225.8 374.8,221.6 378.9,220.9 383.0,221.3 387.2,220.1 391.3,220.4 395.4,221.7 399.5,221.5 403.6,222.1 407.7,224.4 411.8,224.4 416.0,227.1 420.1,229.2 424.2,231.3 428.3,237.6 434.3,261.0 364.7,250.7" fill="url(#bg19)" /><polygon points="334.5,228.0 338.6,225.9 342.8,225.6 347.0,224.7 351.2,225.0 355.4,224.9 359.6,226.3 363.8,226.4 368.0,227.0 372.2,228.1 376.3,229.3 380.5,230.3 384.7,233.5 388.9,234.6 393.1,239.5 399.1,266.4 328.5,255.8" fill="url(#bg20)" /><polygon points="299.7,232.2 303.4,225.2 307.1,222.3 310.7,222.5 314.4,222.2 318.0,221.0 321.7,221.4 325.4,221.9 329.0,223.2 332.7,224.1 336.4,225.5 340.0,228.0 343.7,230.0 347.4,232.9 351.0,241.7 357.0,269.9 293.7,260.7" fill="url(#bg21)" /><polygon points="544.0,233.4 547.7,228.9 551.4,228.3 555.1,227.6 558.8,226.8 562.5,227.1 566.2,227.7 569.9,228.1 573.6,229.6 577.3,230.4 581.0,230.9 584.7,233.0 588.3,234.7 592.0,237.6 595.7,241.9 601.7,272.3 538.0,263.0" fill="url(#bg22)" /><polygon points="426.1,230.1 432.7,225.6 439.2,225.2 445.8,224.7 452.3,225.6 458.8,226.3 465.4,227.2 471.9,227.3 478.5,229.5 485.0,229.8 491.5,231.8 498.1,233.3 504.6,236.7 511.2,239.6 517.7,245.7 523.7,273.7 420.1,257.2" fill="url(#bg23)" /><polygon points="439.3,231.7 446.2,226.9 453.1,227.4 460.0,227.3 466.9,226.7 473.8,228.9 480.7,229.1 487.6,230.0 494.5,232.1 501.4,232.5 508.3,235.3 515.2,236.8 522.2,239.9 529.1,242.4 536.0,249.0 542.0,276.2 433.3,258.8" fill="url(#bg24)" /><polygon points="534.3,236.3 537.9,234.0 541.4,233.1 545.0,232.5 548.5,233.3 552.1,233.6 555.6,233.9 559.2,234.5 562.7,235.3 566.3,235.5 569.8,236.3 573.4,238.1 576.9,239.1 580.5,242.2 584.0,246.7 590.0,271.1 528.3,262.1" fill="url(#bg25)" /><polygon points="286.0,241.8 288.9,238.6 291.9,238.5 294.8,237.7 297.8,237.1 300.8,237.4 303.7,238.0 306.7,238.2 309.6,238.9 312.6,240.4 315.5,240.0 318.5,241.2 321.5,243.5 324.4,245.3 327.4,248.4 333.4,270.9 280.0,263.5" fill="url(#bg26)" /><polygon points="431.3,244.4 435.6,240.1 439.8,238.5 444.1,237.7 448.3,239.0 452.5,238.3 456.8,239.1 461.0,238.9 465.3,241.2 469.5,241.4 473.7,243.5 478.0,245.1 482.2,245.8 486.5,249.4 490.7,254.4 496.7,281.3 425.3,270.6" fill="url(#bg27)" /><polygon points="598.4,249.2 601.6,244.9 604.8,243.1 608.0,241.8 611.2,242.4 614.4,241.7 617.6,242.0 620.8,242.9 624.0,242.6 627.2,244.6 630.4,246.0 633.6,246.3 636.9,248.9 640.1,251.2 643.3,257.3 649.3,275.2 592.4,267.1" fill="url(#bg28)" /><polygon points="635.2,242.5 643.8,237.3 652.4,235.6 661.1,235.6 669.7,236.6 678.3,237.1 686.9,238.1 695.5,239.1 704.1,241.7 712.7,243.5 721.3,245.5 729.9,248.7 738.5,252.1 747.1,254.9 755.7,264.4 761.7,282.9 629.2,261.2" fill="url(#bg29)" /><polygon points="464.3,244.4 471.2,241.8 478.0,241.5 484.9,242.5 491.7,242.1 498.6,243.8 505.4,244.3 512.3,245.5 519.2,247.1 526.0,247.9 532.9,251.1 539.7,252.0 546.6,253.5 553.4,256.8 560.3,262.7 566.3,281.3 458.3,264.0" fill="url(#bg30)" /><polygon points="660.5,250.4 663.5,241.9 666.5,240.7 669.5,238.8 672.6,237.2 675.6,237.7 678.6,237.6 681.6,238.3 684.6,238.2 687.7,239.4 690.7,241.5 693.7,243.3 696.7,245.4 699.8,248.2 702.8,257.5 708.8,284.0 654.5,276.4" fill="url(#bg31)" /><polygon points="553.9,246.7 560.0,242.6 566.0,242.1 572.1,242.5 578.1,242.5 584.1,242.9 590.2,244.6 596.2,244.9 602.3,246.9 608.3,246.9 614.4,249.8 620.4,251.0 626.4,253.4 632.5,255.8 638.5,262.8 644.5,286.1 547.9,270.8" fill="url(#bg32)" /><polygon points="430.5,247.2 436.6,239.8 442.7,238.8 448.7,237.8 454.8,237.7 460.9,237.2 466.9,238.9 473.0,239.4 479.1,240.1 485.1,242.7 491.2,244.5 497.3,246.9 503.3,250.0 509.4,253.5 515.5,263.4 521.5,287.6 424.5,272.3" fill="url(#bg33)" /><polygon points="350.6,249.9 355.5,244.0 360.3,242.1 365.2,241.5 370.1,240.4 375.0,240.2 379.8,241.3 384.7,242.3 389.6,243.5 394.4,244.6 399.3,245.7 404.2,247.4 409.1,250.0 413.9,253.0 418.8,261.5 424.8,287.1 344.6,274.8" fill="url(#bg34)" /><polygon points="586.1,244.9 595.1,238.6 604.1,237.5 613.1,238.0 622.1,238.2 631.1,239.5 640.1,240.6 649.1,241.5 658.1,244.0 667.1,246.3 676.1,248.8 685.1,251.7 694.1,254.4 703.1,257.7 712.1,267.0 718.1,288.0 580.1,265.3" fill="url(#bg35)" /><polygon points="571.1,252.5 574.3,248.2 577.5,246.4 580.7,246.7 583.9,246.4 587.1,245.7 590.3,246.1 593.5,246.0 596.7,247.8 599.9,248.4 603.1,248.7 606.3,251.0 609.5,252.1 612.7,254.4 615.9,260.4 621.9,286.2 565.1,278.2" fill="url(#bg36)" /><polygon points="379.1,248.1 387.6,243.8 396.1,244.4 404.7,244.6 413.2,245.6 421.7,245.6 430.2,247.2 438.8,249.4 447.3,250.6 455.8,252.1 464.3,253.5 472.9,256.8 481.4,259.3 489.9,262.2 498.4,269.1 504.4,296.1 373.1,274.6" fill="url(#bg37)" /><polygon points="362.7,252.7 367.5,245.1 372.2,243.0 377.0,242.9 381.7,241.3 386.5,241.4 391.2,242.1 396.0,243.5 400.8,244.7 405.5,246.2 410.3,247.1 415.0,248.8 419.8,252.3 424.5,255.7 429.3,264.8 435.3,287.1 356.7,275.2" fill="url(#bg38)" /><polygon points="466.8,248.7 475.1,245.9 483.3,245.5 491.5,246.9 499.8,247.0 508.0,248.0 516.2,250.1 524.5,251.2 532.7,252.3 540.9,255.1 549.2,255.9 557.4,258.8 565.6,260.9 573.9,264.2 582.1,268.8 588.1,291.8 460.8,271.1" fill="url(#bg39)" /><polygon points="547.9,254.5 554.5,248.6 561.0,246.5 567.6,245.5 574.2,246.2 580.7,246.7 587.3,246.6 593.9,248.0 600.4,249.5 607.0,250.0 613.5,252.3 620.1,255.8 626.7,258.9 633.2,262.2 639.8,271.0 645.8,300.8 541.9,284.3" fill="url(#bg40)" /><polygon points="409.7,254.7 417.1,248.3 424.5,247.9 431.9,247.5 439.2,247.2 446.6,247.6 454.0,249.4 461.3,250.0 468.7,250.9 476.1,253.3 483.5,254.9 490.8,258.6 498.2,261.3 505.6,265.1 513.0,273.3 519.0,298.4 403.7,279.8" fill="url(#bg41)" /><polygon points="683.8,255.0 692.0,248.7 700.2,246.8 708.3,246.4 716.5,247.5 724.7,248.6 732.9,248.9 741.0,250.0 749.2,251.4 757.4,253.6 765.5,256.5 773.7,259.2 781.9,262.3 790.1,266.0 798.2,274.8 804.2,293.8 677.8,273.2" fill="url(#bg42)" /><polygon points="444.9,261.4 449.0,257.0 453.0,254.6 457.0,254.6 461.0,254.8 465.1,254.4 469.1,255.9 473.1,256.1 477.1,256.9 481.2,257.3 485.2,258.6 489.2,260.9 493.2,261.8 497.3,265.3 501.3,271.1 507.3,290.4 438.9,280.2" fill="url(#bg43)" /><polygon points="584.1,255.7 592.7,252.8 601.3,253.3 609.9,253.8 618.6,254.9 627.2,255.3 635.8,256.8 644.4,258.6 653.0,259.3 661.7,262.3 670.3,263.4 678.9,266.2 687.5,268.8 696.1,271.4 704.7,276.3 710.7,300.2 578.1,278.5" fill="url(#bg44)" /><polygon points="631.5,258.7 638.2,253.7 644.9,252.1 651.6,253.2 658.3,253.5 665.0,253.9 671.7,254.1 678.3,254.8 685.0,256.7 691.7,257.6 698.4,259.9 705.1,262.1 711.8,264.6 718.5,268.8 725.1,275.0 731.1,295.3 625.5,278.5" fill="url(#bg45)" /><polygon points="537.0,260.5 542.3,255.1 547.6,255.3 552.9,253.5 558.2,254.3 563.5,253.9 568.9,254.8 574.2,255.6 579.5,257.5 584.8,258.0 590.1,260.3 595.4,261.9 600.7,264.0 606.0,267.2 611.4,273.7 617.4,294.2 531.0,280.9" fill="url(#bg46)" /><polygon points="373.7,261.5 379.7,255.0 385.6,252.5 391.6,251.8 397.5,252.1 403.5,253.5 409.5,253.7 415.4,255.0 421.4,255.4 427.3,257.1 433.3,258.6 439.3,261.3 445.2,264.6 451.2,267.3 457.1,276.6 463.1,296.5 367.7,281.4" fill="url(#bg47)" /><polygon points="482.7,261.4 490.3,255.0 497.9,253.0 505.5,252.6 513.1,251.9 520.7,253.5 528.3,253.1 535.9,254.7 543.5,256.8 551.1,258.6 558.7,260.9 566.3,263.4 574.0,266.9 581.6,270.2 589.2,279.8 595.2,309.7 476.7,290.5" fill="url(#bg48)" /><polygon points="626.8,265.2 632.5,259.3 638.3,257.5 644.0,256.7 649.8,255.3 655.5,256.5 661.3,256.3 667.0,257.2 672.8,259.2 678.5,260.5 684.3,262.7 690.0,264.4 695.8,266.8 701.5,271.5 707.2,280.0 713.2,305.6 620.8,291.1" fill="url(#bg49)" /><polygon points="486.3,265.4 493.4,262.1 500.4,262.7 507.5,262.3 514.5,263.2 521.6,263.6 528.6,264.4 535.7,266.6 542.7,267.8 549.8,268.4 556.8,269.7 563.9,272.7 571.0,274.4 578.0,277.5 585.1,284.2 591.1,308.0 480.3,290.2" fill="url(#bg50)" /><polygon points="498.7,267.8 504.3,261.2 510.0,259.1 515.6,257.9 521.3,257.1 527.0,258.5 532.6,258.5 538.3,259.5 543.9,260.4 549.6,262.5 555.3,263.7 560.9,266.7 566.6,269.1 572.2,272.3 577.9,282.3 583.9,302.4 492.7,288.1" fill="url(#bg51)" /><polygon points="392.5,272.0 396.3,268.7 400.1,267.4 403.9,268.2 407.7,267.2 411.5,267.9 415.3,268.4 419.1,269.5 422.9,270.7 426.7,271.4 430.5,271.9 434.3,273.1 438.1,274.3 441.9,277.7 445.7,281.6 451.7,307.4 386.5,297.8" fill="url(#bg52)" /><polygon points="551.6,267.4 559.8,262.0 568.0,261.1 576.3,262.1 584.5,261.7 592.7,263.2 600.9,263.4 609.1,265.6 617.4,267.2 625.6,268.4 633.8,270.2 642.0,273.2 650.2,277.1 658.5,280.8 666.7,288.1 672.7,311.2 545.6,290.5" fill="url(#bg53)" /><polygon points="413.7,269.4 420.6,266.0 427.6,264.7 434.5,264.9 441.5,265.9 448.5,265.5 455.4,267.7 462.4,267.7 469.3,269.5 476.3,270.7 483.2,273.3 490.2,275.6 497.1,277.0 504.1,280.1 511.1,287.4 517.1,314.1 407.7,296.6" fill="url(#bg54)" /><polygon points="279.0,269.7 287.0,264.8 295.1,264.6 303.1,263.7 311.1,264.8 319.2,265.1 327.2,266.9 335.2,268.4 343.2,269.9 351.3,271.3 359.3,273.1 367.3,276.4 375.4,278.5 383.4,282.7 391.4,288.9 397.4,315.7 273.0,295.5" fill="url(#bg55)" /><polygon points="425.1,272.5 431.9,271.3 438.7,271.3 445.5,270.9 452.3,272.1 459.1,272.4 465.9,274.1 472.7,274.6 479.5,276.3 486.3,277.5 493.0,279.6 499.8,280.3 506.6,282.1 513.4,285.8 520.2,289.4 526.2,319.0 419.1,301.8" fill="url(#bg56)" /><polygon points="597.8,270.6 606.9,266.0 616.1,265.6 625.2,266.0 634.3,266.4 643.5,266.3 652.6,268.3 661.8,269.9 670.9,271.9 680.1,273.1 689.2,275.4 698.4,278.2 707.5,281.2 716.7,286.6 725.8,293.8 731.8,323.3 591.8,300.2" fill="url(#bg57)" /><polygon points="695.1,277.2 702.4,270.8 709.7,268.4 717.0,268.0 724.3,267.9 731.5,269.4 738.8,269.4 746.1,270.5 753.4,272.7 760.7,274.6 768.0,276.1 775.3,278.3 782.6,281.4 789.9,286.1 797.2,294.6 803.2,316.5 689.1,298.1" fill="url(#bg58)" /><polygon points="723.0,280.5 727.4,278.3 731.9,277.9 736.4,277.7 740.8,278.2 745.3,278.6 749.8,279.1 754.2,280.5 758.7,281.6 763.2,282.1 767.6,284.0 772.1,285.4 776.6,286.5 781.1,287.9 785.5,292.5 791.5,318.0 717.0,306.7" fill="url(#bg59)" /><polygon points="415.0,283.9 419.0,279.6 423.1,278.6 427.1,278.7 431.2,279.1 435.3,278.7 439.3,279.1 443.4,279.3 447.5,281.0 451.5,282.5 455.6,282.2 459.6,284.4 463.7,286.8 467.8,288.8 471.8,294.4 477.8,317.3 409.0,307.1" fill="url(#bg60)" /><polygon points="506.8,283.8 511.2,278.0 515.6,276.5 520.0,275.2 524.4,275.3 528.8,274.1 533.2,275.6 537.5,275.6 541.9,275.7 546.3,277.5 550.7,278.7 555.1,280.8 559.5,283.6 563.9,286.7 568.3,295.1 574.3,317.2 500.8,306.1" fill="url(#bg61)" /><polygon points="680.8,279.5 688.8,276.2 696.8,275.0 704.8,274.7 712.9,275.8 720.9,277.7 728.9,277.8 737.0,279.6 745.0,281.2 753.0,283.4 761.0,285.2 769.1,287.5 777.1,289.9 785.1,292.2 793.2,299.4 799.2,319.1 674.8,298.8" fill="url(#bg62)" /><polygon points="329.0,284.9 333.3,282.7 337.5,282.4 341.8,283.0 346.1,283.3 350.3,283.9 354.6,284.6 358.8,284.4 363.1,286.0 367.3,285.7 371.6,286.9 375.8,289.0 380.1,290.4 384.4,292.2 388.6,295.9 394.6,317.9 323.0,307.1" fill="url(#bg63)" /><polygon points="291.5,286.3 295.1,282.9 298.8,281.5 302.4,280.5 306.0,280.9 309.7,280.4 313.3,281.7 317.0,281.9 320.6,282.8 324.2,282.8 327.9,285.3 331.5,286.9 335.2,288.6 338.8,291.2 342.4,296.2 348.4,321.7 285.5,312.5" fill="url(#bg64)" /><polygon points="542.9,289.7 546.5,286.5 550.1,286.8 553.8,285.5 557.4,286.6 561.1,286.9 564.7,287.5 568.4,288.0 572.0,287.8 575.7,288.4 579.3,290.2 582.9,290.4 586.6,292.2 590.2,293.9 593.9,299.4 599.9,325.4 536.9,316.2" fill="url(#bg65)" /><polygon points="662.8,282.6 672.0,278.4 681.3,278.9 690.6,278.7 699.9,279.8 709.2,280.0 718.4,281.7 727.7,283.3 737.0,284.9 746.3,287.6 755.6,289.8 764.8,292.8 774.1,295.4 783.4,298.2 792.7,305.5 798.7,326.1 656.8,302.7" fill="url(#bg66)" /><polygon points="680.6,283.3 689.5,281.6 698.4,281.4 707.2,282.2 716.1,283.1 725.0,283.1 733.9,285.8 742.8,286.4 751.7,289.0 760.6,290.4 769.5,291.5 778.3,293.8 787.2,296.9 796.1,300.5 805.0,306.8 811.0,333.1 674.6,310.7" fill="url(#bg67)" /><polygon points="280.9,287.1 288.9,284.5 297.0,285.0 305.0,285.8 313.0,285.8 321.0,286.5 329.0,288.6 337.1,289.2 345.1,291.0 353.1,292.9 361.1,294.2 369.1,297.4 377.2,299.5 385.2,302.1 393.2,307.6 399.2,331.5 274.9,311.3" fill="url(#bg68)" /><polygon points="290.7,293.4 295.3,289.1 300.0,288.5 304.6,287.0 309.3,287.4 313.9,288.3 318.6,287.8 323.2,289.4 327.9,289.3 332.5,290.5 337.2,292.8 341.8,294.3 346.5,295.9 351.1,299.8 355.8,305.0 361.8,335.3 284.7,323.6" fill="url(#bg69)" /><polygon points="324.6,297.0 333.0,290.5 341.4,289.6 349.9,289.9 358.3,291.4 366.8,292.0 375.2,292.9 383.6,293.8 392.1,295.4 400.5,297.4 408.9,299.5 417.4,302.3 425.8,305.0 434.2,308.5 442.7,317.2 448.7,339.8 318.6,318.6" fill="url(#bg70)" /><polygon points="711.4,305.5 717.5,300.3 723.5,299.0 729.6,298.3 735.6,298.1 741.7,298.2 747.7,299.7 753.8,300.2 759.8,301.3 765.9,303.1 771.9,304.4 778.0,307.5 784.0,309.6 790.1,313.5 796.1,320.4 802.1,350.1 705.4,334.8" fill="url(#bg71)" /><polygon points="439.2,302.1 447.8,298.9 456.4,299.7 465.1,299.5 473.7,301.2 482.3,301.2 491.0,302.5 499.6,304.1 508.2,305.3 516.9,307.1 525.5,310.1 534.1,312.3 542.8,314.9 551.4,317.4 560.0,324.7 566.0,349.3 433.2,327.6" fill="url(#bg72)" /><polygon points="292.1,307.4 297.2,304.2 302.3,302.5 307.4,301.7 312.5,302.8 317.6,302.5 322.7,303.6 327.8,304.0 332.9,305.3 338.0,306.9 343.2,307.3 348.3,309.5 353.4,311.3 358.5,314.9 363.6,319.9 369.6,340.1 286.1,327.2" fill="url(#bg73)" /><polygon points="582.7,308.9 586.4,307.3 590.1,307.0 593.9,306.6 597.6,306.2 601.3,306.5 605.0,306.8 608.7,308.9 612.5,309.6 616.2,310.4 619.9,310.1 623.6,312.6 627.3,313.3 631.1,315.0 634.8,319.2 640.8,341.3 576.7,331.9" fill="url(#bg74)" /><polygon points="377.7,308.9 382.8,302.5 387.8,302.1 392.9,302.1 398.0,301.5 403.0,301.8 408.1,301.3 413.1,303.3 418.2,303.4 423.3,304.9 428.3,306.8 433.4,307.9 438.4,311.2 443.5,314.5 448.6,321.0 454.6,343.3 371.7,330.5" fill="url(#bg75)" /><polygon points="565.8,303.9 574.8,300.8 583.9,300.8 592.9,300.5 602.0,302.1 611.0,302.7 620.1,304.7 629.1,306.3 638.2,308.5 647.2,310.1 656.3,312.2 665.3,313.6 674.4,317.3 683.4,321.0 692.5,326.8 698.5,353.1 559.8,330.3" fill="url(#bg76)" /><polygon points="557.6,305.7 566.1,303.0 574.7,302.7 583.2,303.1 591.7,304.5 600.3,305.6 608.8,306.2 617.3,307.5 625.8,310.3 634.4,311.5 642.9,314.2 651.4,315.2 660.0,317.7 668.5,320.6 677.0,327.3 683.0,349.4 551.6,327.9" fill="url(#bg77)" /><polygon points="477.1,310.0 482.0,303.4 486.8,300.8 491.7,300.1 496.5,299.2 501.3,299.3 506.2,300.1 511.0,301.4 515.9,301.5 520.7,303.8 525.5,304.9 530.4,307.0 535.2,310.7 540.1,314.3 544.9,322.2 550.9,348.9 471.1,336.7" fill="url(#bg78)" /><polygon points="288.5,307.9 296.3,304.2 304.0,303.7 311.8,302.5 319.6,303.3 327.4,305.1 335.2,306.1 343.0,306.8 350.7,307.7 358.5,309.8 366.3,312.6 374.1,314.4 381.9,316.9 389.6,320.9 397.4,326.7 403.4,350.1 282.5,330.5" fill="url(#bg79)" /><polygon points="413.2,313.1 417.4,306.0 421.6,304.4 425.9,303.4 430.1,302.1 434.3,302.4 438.6,303.3 442.8,303.8 447.0,304.7 451.3,304.9 455.5,307.7 459.7,309.6 464.0,311.9 468.2,314.6 472.4,323.4 478.4,344.2 407.2,333.5" fill="url(#bg80)" /><polygon points="301.9,315.4 305.9,308.5 309.8,307.9 313.8,307.0 317.8,305.9 321.7,305.0 325.7,305.5 329.7,307.2 333.6,307.6 337.6,308.8 341.6,310.7 345.5,311.3 349.5,313.7 353.5,317.0 357.4,326.1 363.4,351.7 295.9,341.7" fill="url(#bg81)" /><polygon points="597.4,315.2 603.1,309.4 608.9,308.0 614.6,309.2 620.4,308.1 626.1,308.8 631.9,310.3 637.6,309.9 643.4,311.2 649.1,313.8 654.9,314.3 660.6,317.4 666.4,319.8 672.2,322.1 677.9,328.9 683.9,356.1 591.4,341.6" fill="url(#bg82)" /><polygon points="332.9,317.2 336.5,309.4 340.1,308.4 343.7,306.1 347.3,305.2 350.9,305.7 354.5,305.4 358.1,305.7 361.7,307.1 365.3,307.5 368.9,309.4 372.6,311.9 376.2,313.8 379.8,317.1 383.4,327.1 389.4,355.9 326.9,346.8" fill="url(#bg83)" /><polygon points="649.1,317.9 653.4,312.4 657.7,310.2 662.0,309.7 666.2,308.7 670.5,309.6 674.8,308.8 679.1,310.4 683.4,311.4 687.6,312.6 691.9,313.0 696.2,315.1 700.5,318.1 704.8,321.2 709.0,329.1 715.0,347.0 643.1,336.3" fill="url(#bg84)" /><polygon points="378.1,311.3 387.1,309.7 396.1,310.2 405.1,309.6 414.1,311.5 423.1,312.5 432.1,314.6 441.1,315.9 450.1,316.6 459.1,319.0 468.1,320.8 477.1,323.3 486.1,325.6 495.1,329.4 504.1,334.2 510.1,358.2 372.1,335.5" fill="url(#bg85)" /><polygon points="526.6,320.4 532.1,314.7 537.5,313.4 542.9,312.7 548.3,312.9 553.8,312.2 559.2,313.0 564.6,314.2 570.0,314.6 575.4,315.6 580.9,318.4 586.3,319.4 591.7,321.9 597.1,326.6 602.6,333.6 608.6,358.6 520.6,344.9" fill="url(#bg86)" /><polygon points="459.8,318.7 467.8,314.9 475.8,313.0 483.9,313.8 491.9,314.3 499.9,315.5 508.0,317.2 516.0,318.5 524.1,319.3 532.1,320.6 540.1,323.4 548.2,324.7 556.2,327.7 564.2,331.8 572.3,338.9 578.3,356.4 453.8,336.1" fill="url(#bg87)" /><polygon points="547.0,318.8 555.5,315.7 564.0,316.6 572.4,317.7 580.9,317.5 589.3,318.6 597.8,320.6 606.3,321.1 614.7,323.4 623.2,325.8 631.7,326.7 640.1,328.9 648.6,332.2 657.0,334.8 665.5,339.1 671.5,360.4 541.0,339.1" fill="url(#bg88)" /><polygon points="580.4,324.3 585.2,316.2 590.0,314.4 594.8,313.3 599.6,313.2 604.4,312.8 609.2,314.2 614.1,315.3 618.9,315.4 623.7,317.5 628.5,318.9 633.3,321.2 638.1,323.7 642.9,327.2 647.7,335.5 653.7,358.6 574.4,346.4" fill="url(#bg89)" /><polygon points="384.6,324.6 389.8,321.0 394.9,320.3 400.1,320.1 405.3,320.0 410.5,320.2 415.6,321.2 420.8,321.7 426.0,323.2 431.1,323.1 436.3,325.8 441.5,326.4 446.6,329.5 451.8,332.2 457.0,337.3 463.0,361.2 378.6,348.2" fill="url(#bg90)" /><polygon points="659.0,323.6 665.3,319.1 671.5,318.3 677.8,316.6 684.0,318.0 690.3,318.1 696.5,319.0 702.7,319.2 709.0,320.0 715.2,322.0 721.5,324.6 727.7,326.5 734.0,328.6 740.2,332.7 746.4,340.3 752.4,368.1 653.0,352.4" fill="url(#bg91)" /><polygon points="505.4,326.4 510.2,321.7 515.0,320.6 519.8,319.8 524.6,321.0 529.4,321.5 534.1,321.2 538.9,321.3 543.7,323.1 548.5,324.2 553.3,325.2 558.1,327.6 562.8,330.2 567.6,332.5 572.4,338.4 578.4,361.2 499.4,349.1" fill="url(#bg92)" /><polygon points="413.8,328.1 419.7,325.0 425.5,323.7 431.4,323.4 437.2,323.7 443.1,324.7 449.0,325.7 454.8,326.3 460.7,326.3 466.5,328.2 472.4,329.5 478.2,332.6 484.1,333.9 489.9,337.2 495.8,342.8 501.8,367.5 407.8,352.7" fill="url(#bg93)" /><polygon points="605.0,328.1 613.8,323.1 622.6,322.9 631.4,322.6 640.1,323.0 648.9,323.1 657.7,324.7 666.5,326.4 675.3,327.6 684.1,329.7 692.8,331.7 701.6,335.4 710.4,338.5 719.2,341.2 728.0,349.7 734.0,377.7 599.0,355.6" fill="url(#bg94)" /><polygon points="536.4,331.4 545.7,327.9 555.0,328.3 564.3,329.1 573.6,330.8 582.8,332.2 592.1,333.6 601.4,334.0 610.7,336.9 620.0,338.5 629.3,339.9 638.5,342.5 647.8,345.4 657.1,347.8 666.4,354.4 672.4,381.4 530.4,358.0" fill="url(#bg95)" /><polygon points="270.5,333.3 278.5,329.2 286.5,329.1 294.5,328.8 302.5,329.3 310.5,331.4 318.5,332.2 326.4,332.4 334.4,334.4 342.4,336.2 350.4,339.1 358.4,340.6 366.4,343.3 374.4,347.5 382.3,353.1 388.3,376.5 264.5,356.4" fill="url(#bg96)" /><polygon points="505.5,338.6 509.1,335.7 512.6,335.2 516.2,334.3 519.7,334.1 523.3,333.8 526.8,334.3 530.4,335.7 533.9,335.6 537.5,336.8 541.1,337.4 544.6,339.5 548.2,340.3 551.7,343.5 555.3,348.2 561.3,366.3 499.5,357.4" fill="url(#bg97)" /><polygon points="403.9,345.4 407.6,342.4 411.2,341.3 414.9,341.6 418.5,341.7 422.2,342.6 425.8,341.6 429.5,343.1 433.1,343.3 436.8,344.0 440.4,345.1 444.1,347.5 447.7,348.6 451.4,350.4 455.0,353.3 461.0,372.6 397.9,363.4" fill="url(#bg98)" /><polygon points="643.2,345.0 650.1,340.8 657.1,339.8 664.0,338.5 670.9,339.0 677.8,340.1 684.7,340.0 691.6,342.6 698.6,342.8 705.5,345.5 712.4,347.1 719.3,349.6 726.2,352.3 733.1,354.5 740.1,362.8 746.1,387.3 637.2,369.8" fill="url(#bg99)" /><polygon points="537.4,342.8 546.7,337.7 555.9,335.8 565.1,335.4 574.4,337.0 583.6,336.9 592.8,339.3 602.1,340.0 611.3,342.1 620.5,344.4 629.8,346.7 639.0,350.0 648.2,352.7 657.5,357.6 666.7,366.4 672.7,392.9 531.4,369.7" fill="url(#bg100)" /><polygon points="513.4,349.8 520.6,344.9 527.7,344.1 534.9,343.3 542.1,343.6 549.3,345.4 556.5,345.4 563.7,346.6 570.9,348.0 578.0,350.4 585.2,352.5 592.4,353.8 599.6,356.2 606.8,360.3 614.0,367.8 620.0,394.1 507.4,376.0" fill="url(#bg101)" /><polygon points="568.0,354.3 574.7,349.7 581.3,349.3 587.9,349.7 594.6,349.6 601.2,350.7 607.8,351.7 614.5,352.5 621.1,353.1 627.7,355.8 634.4,357.3 641.0,359.1 647.7,360.9 654.3,364.0 660.9,371.3 666.9,394.7 562.0,378.0" fill="url(#bg102)" /><polygon points="296.3,360.6 302.3,357.1 308.4,355.9 314.5,356.1 320.6,357.6 326.7,358.2 332.8,359.1 338.9,359.8 345.0,360.7 351.1,361.5 357.2,363.7 363.3,365.8 369.4,367.5 375.5,369.7 381.6,375.7 387.6,400.7 290.3,385.3" fill="url(#bg103)" /><polygon points="489.6,360.2 497.6,356.9 505.6,355.9 513.7,355.3 521.7,355.6 529.7,356.1 537.7,357.5 545.7,358.8 553.8,360.9 561.8,362.2 569.8,365.1 577.8,367.0 585.8,369.8 593.9,372.8 601.9,381.3 607.9,406.7 483.6,386.5" fill="url(#bg104)" /><polygon points="482.6,364.6 489.4,361.7 496.3,362.0 503.1,361.4 510.0,362.5 516.8,362.4 523.7,364.6 530.5,365.4 537.3,366.2 544.2,368.0 551.0,369.7 557.9,372.2 564.7,373.1 571.5,376.6 578.4,382.7 584.4,402.5 476.6,385.2" fill="url(#bg105)" /><polygon points="485.6,373.7 492.6,368.1 499.7,368.1 506.8,366.7 513.8,367.7 520.9,368.5 528.0,368.7 535.1,370.6 542.1,372.4 549.2,373.7 556.3,374.8 563.4,378.1 570.4,380.3 577.5,384.5 584.6,391.5 590.6,415.4 479.6,397.5" fill="url(#bg106)" /><polygon points="415.6,376.9 422.0,374.1 428.4,373.8 434.8,374.4 441.2,375.5 447.6,375.4 454.0,377.8 460.4,378.3 466.9,378.9 473.3,380.1 479.7,382.5 486.1,383.7 492.5,386.2 498.9,387.7 505.3,393.3 511.3,421.5 409.6,405.3" fill="url(#bg107)" /><polygon points="398.8,378.0 404.5,373.3 410.2,372.1 415.9,371.7 421.7,372.0 427.4,372.5 433.1,373.0 438.8,373.3 444.5,374.8 450.2,375.4 456.0,377.4 461.7,379.6 467.4,382.2 473.1,386.0 478.8,392.3 484.8,412.0 392.8,397.6" fill="url(#bg108)" /><polygon points="477.7,375.5 486.0,371.2 494.3,369.0 502.7,370.1 511.0,369.5 519.3,370.9 527.6,372.4 536.0,373.4 544.3,375.1 552.6,376.9 561.0,378.6 569.3,382.3 577.6,384.7 585.9,388.5 594.3,396.8 600.3,416.3 471.7,395.3" fill="url(#bg109)" /><polygon points="357.4,380.1 362.5,374.0 367.5,373.3 372.6,372.6 377.6,371.9 382.6,371.9 387.7,372.3 392.7,373.3 397.8,375.0 402.8,374.9 407.9,377.3 412.9,379.7 418.0,382.2 423.0,384.7 428.0,391.8 434.0,421.2 351.4,408.5" fill="url(#bg110)" /><polygon points="498.9,378.2 507.6,376.9 516.3,376.9 524.9,377.9 533.6,378.5 542.3,379.2 550.9,381.1 559.6,382.2 568.3,383.3 576.9,386.4 585.6,387.9 594.3,389.2 602.9,392.1 611.6,394.7 620.2,400.0 626.2,425.5 492.9,403.7" fill="url(#bg111)" /><polygon points="559.5,382.6 564.5,380.5 569.5,379.4 574.5,379.7 579.5,378.9 584.5,379.9 589.5,380.6 594.5,381.3 599.5,381.9 604.5,383.4 609.4,385.0 614.4,386.9 619.4,387.6 624.4,390.1 629.4,395.9 635.4,421.9 553.5,409.3" fill="url(#bg112)" /><polygon points="425.2,384.6 429.1,381.7 433.0,380.6 436.9,380.3 440.8,380.8 444.7,380.6 448.5,380.4 452.4,382.4 456.3,382.6 460.2,382.9 464.1,384.6 467.9,385.6 471.8,388.0 475.7,389.9 479.6,395.2 485.6,412.9 419.2,403.2" fill="url(#bg113)" /><polygon points="429.0,383.2 437.7,377.7 446.4,375.5 455.1,376.4 463.8,376.6 472.5,376.9 481.2,377.3 489.9,379.0 498.6,380.4 507.3,383.0 516.0,386.0 524.7,387.7 533.4,392.1 542.1,396.1 550.8,405.3 556.8,429.4 423.0,407.5" fill="url(#bg114)" /><polygon points="364.0,388.7 368.5,382.8 372.9,380.7 377.3,379.9 381.8,379.3 386.2,379.5 390.6,379.5 395.1,381.3 399.5,382.5 403.9,383.2 408.4,383.8 412.8,386.8 417.2,388.7 421.7,391.8 426.1,401.1 432.1,424.5 358.0,413.3" fill="url(#bg115)" /><polygon points="380.7,387.9 387.7,380.8 394.7,380.6 401.7,380.3 408.6,379.2 415.6,379.3 422.6,381.2 429.6,381.9 436.5,383.2 443.5,385.2 450.5,387.6 457.5,389.9 464.4,393.1 471.4,397.0 478.4,405.7 484.4,423.9 374.7,406.3" fill="url(#bg116)" /><polygon points="300.4,388.5 307.9,384.7 315.4,382.7 322.9,383.8 330.4,384.2 337.9,383.8 345.3,385.9 352.8,386.6 360.3,387.6 367.8,390.0 375.3,392.2 382.7,394.0 390.2,396.9 397.7,400.9 405.2,407.5 411.2,430.3 294.4,411.4" fill="url(#bg117)" /><polygon points="335.5,394.0 339.2,391.5 342.8,390.9 346.5,391.1 350.1,389.8 353.8,390.2 357.5,391.2 361.1,391.6 364.8,392.3 368.5,393.1 372.1,393.9 375.8,395.9 379.4,397.2 383.1,399.8 386.8,403.7 392.8,432.9 329.5,423.6" fill="url(#bg118)" /><polygon points="441.0,389.9 449.1,385.4 457.1,384.9 465.2,386.2 473.2,386.7 481.3,388.1 489.3,388.3 497.3,390.0 505.4,391.6 513.4,392.4 521.5,395.8 529.5,397.8 537.6,399.5 545.6,403.2 553.6,409.7 559.6,435.7 435.0,415.4" fill="url(#bg119)" /><polygon points="313.3,391.9 321.3,385.5 329.4,385.2 337.5,385.5 345.6,385.3 353.7,385.5 361.8,387.3 369.8,388.2 377.9,390.2 386.0,391.9 394.1,394.6 402.2,397.0 410.3,400.4 418.4,403.6 426.4,412.2 432.4,432.3 307.3,411.9" fill="url(#bg120)" /><polygon points="337.7,397.6 340.7,390.3 343.6,387.8 346.6,386.5 349.6,385.4 352.6,384.9 355.6,385.0 358.6,385.6 361.6,387.3 364.5,387.2 367.5,389.3 370.5,390.5 373.5,393.5 376.5,396.1 379.5,405.8 385.5,432.0 331.7,424.5" fill="url(#bg121)" /><polygon points="510.1,395.8 515.4,390.8 520.8,390.3 526.2,390.7 531.5,390.3 536.9,390.8 542.3,391.1 547.6,392.9 553.0,394.4 558.4,394.9 563.7,396.0 569.1,397.5 574.5,401.0 579.8,402.9 585.2,408.6 591.2,429.2 504.1,415.7" fill="url(#bg122)" /><polygon points="369.2,395.0 376.5,393.1 383.7,393.1 391.0,393.7 398.3,393.9 405.5,395.7 412.8,395.9 420.1,396.8 427.4,398.5 434.6,400.5 441.9,402.2 449.2,404.4 456.4,405.8 463.7,408.7 471.0,413.7 477.0,439.7 363.2,421.4" fill="url(#bg123)" /><polygon points="496.9,403.5 502.4,396.3 508.0,394.3 513.5,392.8 519.1,393.1 524.6,392.8 530.2,393.5 535.7,394.8 541.3,395.1 546.8,396.4 552.4,398.0 557.9,400.7 563.5,403.7 569.0,407.6 574.6,416.7 580.6,437.4 490.9,423.4" fill="url(#bg124)" /><polygon points="539.3,399.8 547.8,394.5 556.3,392.3 564.8,392.0 573.3,392.5 581.8,392.6 590.2,394.9 598.7,395.4 607.2,397.3 615.7,399.2 624.2,401.1 632.7,404.6 641.1,407.2 649.6,412.3 658.1,420.7 664.1,444.1 533.3,422.8" fill="url(#bg125)" /><polygon points="475.8,402.9 482.9,399.1 489.9,398.6 497.0,399.7 504.1,400.3 511.2,400.0 518.3,401.1 525.4,402.2 532.5,404.7 539.6,405.9 546.7,407.3 553.8,409.2 560.9,411.6 568.0,414.6 575.0,420.4 581.0,450.7 469.8,432.8" fill="url(#bg126)" /><polygon points="484.2,407.8 488.0,400.2 491.7,398.1 495.5,397.1 499.3,396.5 503.0,396.6 506.8,397.2 510.6,397.5 514.4,398.6 518.1,400.4 521.9,401.6 525.7,403.1 529.4,405.3 533.2,409.4 537.0,416.6 543.0,438.3 478.2,428.8" fill="url(#bg127)" /><polygon points="351.8,409.4 356.8,405.6 361.9,406.6 367.0,406.2 372.1,405.8 377.2,407.0 382.2,408.4 387.3,409.1 392.4,409.3 397.5,410.6 402.5,412.0 407.6,412.8 412.7,415.6 417.8,417.5 422.8,421.0 428.8,439.7 345.8,426.9" fill="url(#bg128)" /><polygon points="350.7,405.1 359.4,403.0 368.1,402.4 376.8,403.4 385.5,404.4 394.2,406.2 402.9,407.8 411.6,407.9 420.3,410.3 429.0,412.3 437.6,413.8 446.3,416.1 455.0,419.2 463.7,421.7 472.4,427.0 478.4,452.3 344.7,430.4" fill="url(#bg129)" /><polygon points="317.1,406.1 325.3,400.4 333.5,401.2 341.7,400.5 349.9,400.3 358.1,401.6 366.3,403.4 374.5,404.9 382.7,406.0 390.9,407.0 399.1,409.3 407.3,412.9 415.5,415.4 423.7,419.3 431.9,426.5 437.9,445.3 311.1,424.7" fill="url(#bg130)" /><polygon points="326.2,406.3 334.7,401.9 343.2,400.7 351.7,401.1 360.2,401.7 368.7,402.8 377.2,404.3 385.7,404.6 394.3,407.3 402.8,408.2 411.3,410.6 419.8,413.3 428.3,415.8 436.8,420.3 445.3,427.0 451.3,453.9 320.2,432.4" fill="url(#bg131)" /><polygon points="307.7,407.9 315.2,402.3 322.6,400.6 330.1,400.1 337.5,400.2 345.0,401.3 352.4,401.3 359.9,402.2 367.3,403.9 374.8,405.5 382.2,408.4 389.7,410.3 397.1,413.6 404.6,417.5 412.0,427.3 418.0,445.4 301.7,426.6" fill="url(#bg132)" /><polygon points="427.8,406.9 436.7,402.6 445.5,401.7 454.3,402.3 463.1,403.4 472.0,403.9 480.8,404.4 489.6,406.1 498.5,408.2 507.3,409.6 516.1,411.6 524.9,415.0 533.8,417.7 542.6,422.0 551.4,428.8 557.4,449.7 421.8,427.4" fill="url(#bg133)" /><polygon points="482.1,409.9 489.2,404.5 496.4,405.1 503.6,403.6 510.8,404.4 517.9,405.0 525.1,406.0 532.3,407.8 539.4,409.5 546.6,410.0 553.8,412.8 560.9,414.1 568.1,417.9 575.3,420.5 582.5,427.1 588.5,457.0 476.1,438.9" fill="url(#bg134)" /><polygon points="411.3,411.4 417.6,407.7 423.9,407.3 430.3,407.5 436.6,406.7 442.9,406.9 449.2,409.1 455.5,409.0 461.8,410.9 468.2,412.5 474.5,414.1 480.8,416.0 487.1,418.2 493.4,421.4 499.7,428.4 505.7,454.9 405.3,439.0" fill="url(#bg135)" /><polygon points="510.4,414.0 517.4,409.4 524.3,407.8 531.2,406.8 538.1,408.0 545.1,408.0 552.0,408.7 558.9,410.2 565.8,411.3 572.8,413.7 579.7,415.3 586.6,417.4 593.5,419.9 600.5,424.8 607.4,431.6 613.4,452.9 504.4,435.5" fill="url(#bg136)" /><polygon points="521.8,417.3 528.2,411.0 534.6,409.3 541.0,409.2 547.4,409.2 553.8,410.0 560.2,410.4 566.6,410.6 573.0,411.8 579.4,413.9 585.8,415.9 592.2,419.0 598.6,421.1 605.0,424.0 611.4,432.2 617.4,461.7 515.8,445.6" fill="url(#bg137)" /><polygon points="285.4,414.9 293.1,412.9 300.8,413.0 308.5,413.1 316.2,412.9 323.9,415.0 331.6,415.4 339.4,417.4 347.1,418.2 354.8,419.9 362.5,422.3 370.2,424.1 377.9,425.6 385.6,429.0 393.3,434.6 399.3,456.4 279.4,437.0" fill="url(#bg138)" /><polygon points="262.7,414.7 271.4,408.8 280.2,408.5 288.9,408.6 297.7,408.5 306.4,409.6 315.2,409.5 323.9,411.8 332.7,412.9 341.4,415.0 350.2,417.4 358.9,420.0 367.7,424.5 376.4,427.8 385.2,436.9 391.2,459.1 256.7,437.0" fill="url(#bg139)" /><polygon points="502.5,420.6 506.8,415.3 511.0,414.5 515.3,412.9 519.5,413.4 523.8,413.2 528.0,413.4 532.3,413.9 536.6,415.6 540.8,416.6 545.1,418.3 549.3,419.8 553.6,421.2 557.8,424.6 562.1,432.2 568.1,454.9 496.5,444.2" fill="url(#bg140)" /><polygon points="262.6,415.2 271.9,409.3 281.2,408.2 290.5,407.9 299.7,407.9 309.0,407.9 318.3,409.4 327.5,410.6 336.8,412.5 346.1,414.6 355.4,417.9 364.6,420.7 373.9,423.7 383.2,429.1 392.4,438.2 398.4,467.1 256.6,443.8" fill="url(#bg141)" /><polygon points="396.2,417.2 404.5,411.7 412.7,409.6 421.0,409.4 429.3,409.9 437.5,410.1 445.8,410.9 454.0,412.5 462.3,414.4 470.6,415.9 478.8,418.3 487.1,421.1 495.3,424.4 503.6,429.6 511.9,438.7 517.9,463.9 390.2,443.1" fill="url(#bg142)" /><polygon points="293.7,420.0 300.4,419.0 307.1,418.5 313.8,418.1 320.6,419.3 327.3,420.1 334.0,420.8 340.7,422.5 347.4,423.5 354.2,425.7 360.9,427.4 367.6,428.4 374.3,431.0 381.1,433.2 387.8,437.9 393.8,455.6 287.7,438.6" fill="url(#bg143)" /><polygon points="513.7,420.1 522.0,414.1 530.3,413.6 538.5,414.4 546.8,414.7 555.0,414.3 563.3,416.5 571.5,417.1 579.8,419.7 588.1,420.9 596.3,423.5 604.6,425.7 612.8,428.0 621.1,432.5 629.4,440.3 635.4,468.0 507.7,447.2" fill="url(#bg144)" /><polygon points="271.7,419.0 280.3,415.7 288.8,415.1 297.4,415.0 306.0,416.1 314.6,416.5 323.1,418.1 331.7,419.6 340.3,421.5 348.9,422.5 357.4,425.0 366.0,427.4 374.6,430.9 383.2,434.1 391.7,441.2 397.7,466.1 265.7,444.5" fill="url(#bg145)" /><polygon points="443.8,425.2 448.1,417.4 452.5,414.8 456.8,414.4 461.1,414.0 465.5,414.4 469.8,414.4 474.2,414.9 478.5,416.2 482.8,417.7 487.2,418.8 491.5,420.4 495.9,424.1 500.2,426.5 504.5,436.4 510.5,458.5 437.8,447.5" fill="url(#bg146)" /><polygon points="319.5,427.6 322.5,423.5 325.4,423.3 328.4,423.4 331.3,423.5 334.3,423.9 337.3,424.0 340.2,423.4 343.2,425.2 346.1,425.1 349.1,425.8 352.1,427.2 355.0,428.5 358.0,430.0 360.9,434.9 366.9,464.8 313.5,457.3" fill="url(#bg147)" /><polygon points="497.4,422.9 504.8,416.0 512.3,415.3 519.8,415.4 527.2,415.3 534.7,414.9 542.1,416.6 549.6,417.3 557.0,418.6 564.5,420.2 571.9,422.6 579.4,426.3 586.9,428.7 594.3,432.8 601.8,441.7 607.8,461.9 491.4,443.1" fill="url(#bg148)" /><polygon points="455.0,422.1 463.9,415.9 472.8,413.6 481.8,414.2 490.7,414.1 499.6,414.5 508.5,415.6 517.5,417.2 526.4,419.4 535.3,420.9 544.3,424.0 553.2,426.2 562.1,429.6 571.0,434.0 580.0,444.5 586.0,469.9 449.0,447.4" fill="url(#bg149)" /><polygon points="322.8,431.0 328.7,427.5 334.6,425.9 340.4,425.8 346.3,425.5 352.2,426.9 358.1,428.0 364.0,427.4 369.9,429.0 375.7,430.5 381.6,432.0 387.5,435.0 393.4,437.0 399.3,439.3 405.2,445.7 411.2,471.1 316.8,456.3" fill="url(#bg150)" /><polygon points="378.3,434.2 381.3,428.7 384.2,426.6 387.2,426.3 390.1,425.8 393.1,426.0 396.1,425.9 399.0,425.7 402.0,427.3 405.0,428.0 407.9,429.5 410.9,430.0 413.8,433.1 416.8,436.2 419.8,441.6 425.8,469.3 372.3,461.8" fill="url(#bg151)" /><polygon points="299.3,428.5 307.7,425.7 316.0,424.9 324.4,425.2 332.8,426.4 341.2,427.4 349.6,428.2 358.0,429.9 366.4,431.4 374.8,433.8 383.2,434.6 391.6,436.8 400.0,440.1 408.4,443.7 416.8,449.7 422.8,478.5 293.3,457.4" fill="url(#bg152)" /><polygon points="391.5,434.4 397.4,430.1 403.2,428.5 409.0,429.5 414.9,429.7 420.7,429.7 426.6,430.0 432.4,430.8 438.2,432.0 444.1,433.5 449.9,435.5 455.8,436.7 461.6,438.9 467.4,442.0 473.3,449.4 479.3,472.9 385.5,458.2" fill="url(#bg153)" /><polygon points="453.5,431.1 462.3,427.9 471.2,428.2 480.0,428.9 488.8,429.9 497.7,429.8 506.5,432.0 515.3,433.2 524.2,433.9 533.0,437.3 541.8,439.2 550.7,441.0 559.5,444.2 568.3,447.0 577.2,453.3 583.2,473.2 447.5,450.9" fill="url(#bg154)" /><polygon points="393.5,440.5 398.7,437.0 403.9,437.5 409.1,436.9 414.3,438.4 419.5,438.1 424.7,438.6 429.9,439.9 435.1,440.4 440.3,442.7 445.5,443.9 450.7,445.6 455.9,447.3 461.1,449.4 466.3,453.6 472.3,478.7 387.5,465.6" fill="url(#bg155)" /><polygon points="509.8,440.5 514.1,437.6 518.5,435.7 522.8,436.7 527.2,436.1 531.5,436.5 535.8,437.1 540.2,437.5 544.5,438.0 548.9,439.8 553.2,440.1 557.6,442.6 561.9,444.1 566.2,446.2 570.6,452.8 576.6,480.5 503.8,469.5" fill="url(#bg156)" /><polygon points="378.9,440.3 387.8,435.2 396.7,434.1 405.6,435.4 414.4,434.6 423.3,435.4 432.2,438.1 441.1,438.9 449.9,441.2 458.8,442.1 467.7,444.2 476.6,447.2 485.4,451.5 494.3,454.7 503.2,463.5 509.2,488.8 372.9,466.4" fill="url(#bg157)" /><polygon points="520.3,447.1 523.7,444.3 527.1,442.5 530.4,442.4 533.8,443.5 537.2,443.4 540.6,442.5 543.9,443.0 547.3,444.7 550.7,445.8 554.0,446.0 557.4,447.2 560.8,448.8 564.2,452.1 567.5,456.2 573.5,485.7 514.3,477.2" fill="url(#bg158)" /><polygon points="345.9,445.0 351.8,437.8 357.7,436.7 363.5,435.4 369.4,435.4 375.3,436.1 381.2,436.1 387.0,436.9 392.9,438.4 398.8,440.1 404.7,441.5 410.5,443.7 416.4,446.5 422.3,451.5 428.2,459.6 434.2,482.2 339.9,467.4" fill="url(#bg159)" /><polygon points="277.0,444.1 284.6,437.5 292.2,435.7 299.8,434.9 307.3,436.1 314.9,436.4 322.5,437.1 330.1,439.0 337.7,440.0 345.3,441.6 352.9,443.7 360.5,446.7 368.1,450.5 375.7,453.4 383.3,464.3 389.3,484.7 271.0,465.6" fill="url(#bg160)" /><polygon points="446.3,447.4 452.4,442.1 458.5,441.9 464.6,441.0 470.7,441.6 476.8,442.3 482.9,443.1 489.0,443.7 495.1,445.3 501.3,445.9 507.4,447.6 513.5,449.9 519.6,452.3 525.7,456.3 531.8,462.1 537.8,483.7 440.3,468.3" fill="url(#bg161)" /><polygon points="365.1,449.1 371.2,444.0 377.4,441.7 383.5,441.4 389.6,441.3 395.7,441.4 401.9,443.4 408.0,444.1 414.1,445.7 420.3,447.1 426.4,448.7 432.5,450.3 438.7,453.8 444.8,456.7 450.9,465.0 456.9,487.3 359.1,471.8" fill="url(#bg162)" /><polygon points="459.8,448.8 467.6,444.5 475.4,444.7 483.1,445.3 490.9,445.6 498.6,446.5 506.4,447.0 514.1,449.3 521.9,449.6 529.6,451.5 537.4,454.6 545.1,457.0 552.9,458.3 560.6,462.3 568.4,468.5 574.4,496.8 453.8,477.2" fill="url(#bg163)" /><polygon points="417.3,452.4 422.9,447.7 428.6,446.0 434.3,446.2 439.9,446.1 445.6,447.1 451.3,446.9 457.0,448.3 462.6,448.8 468.3,450.4 474.0,452.3 479.6,454.4 485.3,457.0 491.0,459.5 496.7,466.5 502.7,485.8 411.3,471.5" fill="url(#bg164)" /><polygon points="477.0,453.0 483.8,449.3 490.6,448.8 497.4,449.3 504.2,448.6 511.0,449.9 517.8,451.5 524.6,452.1 531.5,453.2 538.3,455.6 545.1,456.6 551.9,458.0 558.7,460.5 565.5,464.0 572.3,469.1 578.3,498.6 471.0,481.5" fill="url(#bg165)" /><polygon points="458.6,455.5 464.8,450.4 471.0,450.1 477.2,449.6 483.4,449.2 489.6,449.9 495.8,450.4 502.0,450.9 508.2,452.5 514.4,454.7 520.6,456.7 526.8,458.1 533.0,461.2 539.2,464.4 545.4,470.7 551.4,495.4 452.6,479.8" fill="url(#bg166)" /><polygon points="323.8,456.5 330.0,449.7 336.1,448.3 342.3,447.2 348.5,448.5 354.7,448.0 360.8,448.7 367.0,449.6 373.2,451.4 379.4,452.6 385.5,454.8 391.7,456.6 397.9,459.4 404.1,463.4 410.2,470.8 416.2,491.3 317.8,475.7" fill="url(#bg167)" /><polygon points="396.0,463.6 400.5,456.8 404.9,454.5 409.4,454.9 413.8,454.3 418.2,454.1 422.7,454.1 427.1,454.8 431.6,456.5 436.0,457.0 440.4,459.6 444.9,461.5 449.3,463.7 453.8,466.9 458.2,474.4 464.2,497.1 390.0,485.9" fill="url(#bg168)" /><polygon points="334.7,463.2 339.2,457.5 343.7,456.9 348.2,455.5 352.7,455.2 357.2,455.8 361.7,456.5 366.2,457.6 370.7,457.5 375.2,458.8 379.7,459.8 384.2,462.9 388.6,464.5 393.1,467.4 397.6,474.0 403.6,502.2 328.7,490.8" fill="url(#bg169)" /></g>
<g clip-path="url(#landclip)"><g filter="url(#blur8)"><polygon points="600.0,250.0 755.0,276.0 755.0,300.0 680.0,330.0 560.0,300.0" fill="#4a9e5c" opacity="0.45"/></g></g>
<g clip-path="url(#landclip)"><g filter="url(#blur5)"><polygon points="755.2,297.0 755.2,313.0 677.5,363.0 580.0,426.0 546.8,447.6 530.0,452.0 545.0,428.0 600.0,396.0 700.0,338.0" fill="#1a8a1c" opacity="0.85"/><polygon points="330.0,175.0 520.0,215.0 640.0,240.0 560.0,262.0 440.0,255.0 380.0,250.0 340.0,230.0" fill="#1e861f" opacity="0.8"/></g></g>
<g clip-path="url(#landclip)"><ellipse cx="528" cy="278" rx="70" ry="30" fill="url(#hill2)"/></g>
<g clip-path="url(#landclip)"><polygon points="384.5,262.5 393.0,265.0 410.3,289.6 435.7,315.0 462.0,342.0 490.0,372.0 500.0,420.0 400.0,430.0 300.0,400.0 300.0,340.0 323.4,315.0 348.7,289.6 376.0,266.0" fill="url(#mtn)" /></g>
<polygon points="465.0,380.0 468.0,373.0 470.0,372.0 469.0,378.0 467.0,382.0" fill="#4a4a4a" />
<polygon points="546.0,322.0 550.0,321.0 551.0,324.0 547.0,325.0" fill="#4a4a4a" />
<polyline points="257.9,272.0 257.9,149.6 677.9,272.1 677.9,482.6 668.9,480.0" fill="none" stroke="#000" stroke-width="1.6" stroke-linecap="butt" stroke-linejoin="miter"/>
<polyline points="634.4,249.0 634.4,177.8 356.1,362.5 356.1,573.0 364.6,567.4" fill="none" stroke="#000" stroke-width="1.6" stroke-linecap="butt" stroke-linejoin="miter"/>
<polyline points="752.3,337.5 763.3,340.7 485.0,525.4 65.0,402.9 103.0,377.7" fill="none" stroke="#000" stroke-width="1.6" stroke-linecap="butt" stroke-linejoin="miter"/>
</g>
<rect x="822.5" y="45.5" width="13" height="13" rx="3" fill="url(#cbg)" stroke="#8f8f8f" stroke-width="1"/>
<text x="840.3" y="57" font-size="13" fill="#000" stroke="#000" stroke-width="0.22" font-family='"Liberation Sans", sans-serif' text-anchor="start" textLength="138.3" lengthAdjust="spacingAndGlyphs">Slice volume on X axis</text>
<rect x="822" y="75.0" width="199.5" height="5" rx="2.5" fill="url(#trk)" stroke="#a0a0a0" stroke-width="0.8"/><circle cx="957.3" cy="78.0" r="7.8" fill="url(#knob)" stroke="#8a8a8a" stroke-width="1"/>
<rect x="822.5" y="206.0" width="13" height="13" rx="3" fill="url(#cbg)" stroke="#8f8f8f" stroke-width="1"/>
<text x="840.3" y="216.8" font-size="13" fill="#000" stroke="#000" stroke-width="0.22" font-family='"Liberation Sans", sans-serif' text-anchor="start" textLength="138.3" lengthAdjust="spacingAndGlyphs">Slice volume on Y axis</text>
<rect x="822" y="235.3" width="199.5" height="5" rx="2.5" fill="url(#trk)" stroke="#a0a0a0" stroke-width="0.8"/><circle cx="939.2" cy="238.3" r="7.8" fill="url(#knob)" stroke="#8a8a8a" stroke-width="1"/>
<rect x="822.5" y="466.0" width="13" height="13" rx="3" fill="url(#cbg)" stroke="#8f8f8f" stroke-width="1"/>
<text x="840.3" y="476.8" font-size="13" fill="#000" stroke="#000" stroke-width="0.22" font-family='"Liberation Sans", sans-serif' text-anchor="start" textLength="138.3" lengthAdjust="spacingAndGlyphs">Slice volume on Z axis</text>
<rect x="822" y="495.3" width="199.5" height="5" rx="2.5" fill="url(#trk)" stroke="#a0a0a0" stroke-width="0.8"/><circle cx="957.3" cy="498.3" r="7.8" fill="url(#knob)" stroke="#8a8a8a" stroke-width="1"/>
<rect x="822.5" y="625.5" width="13" height="13" rx="3" fill="url(#cbchk)" stroke="#5a6a8a" stroke-width="1"/><path d="M825,631.5 L828.2,635.5 L834.5,624.5" fill="none" stroke="#101830" stroke-width="2.4" stroke-linecap="round" stroke-linejoin="round"/>
<text x="840.3" y="636.6" font-size="13" fill="#000" stroke="#000" stroke-width="0.22" font-family='"Liberation Sans", sans-serif' text-anchor="start" textLength="110.5" lengthAdjust="spacingAndGlyphs">Draw slice frames</text>
<rect x="1049.5" y="45.5" width="13" height="13" rx="3" fill="url(#cbg)" stroke="#8f8f8f" stroke-width="1"/>
<text x="1067.1" y="57.2" font-size="13" fill="#000" stroke="#000" stroke-width="0.22" font-family='"Liberation Sans", sans-serif' text-anchor="start" textLength="57.5" lengthAdjust="spacingAndGlyphs">Show FPS</text>
<text x="1056.4" y="100.3" font-size="11" fill="#000" stroke="#000" stroke-width="0.22" font-family='"Liberation Sans", sans-serif' text-anchor="start" textLength="72.6" lengthAdjust="spacingAndGlyphs">Texture detail</text>
<rect x="1049.5" y="103.5" width="223" height="81" rx="4" fill="#e4e4e3" stroke="#cacaca" stroke-width="1"/>
<circle cx="1070.7" cy="126.4" r="7" fill="url(#cbg)" stroke="#8f8f8f" stroke-width="1"/>
<text x="1083.5" y="131.2" font-size="13" fill="#000" stroke="#000" stroke-width="0.22" font-family='"Liberation Sans", sans-serif' text-anchor="start" textLength="117.3" lengthAdjust="spacingAndGlyphs">Low (128x64x128)</text>
<circle cx="1070.7" cy="145.6" r="7" fill="url(#cbg)" stroke="#8f8f8f" stroke-width="1"/>
<text x="1083.5" y="150.3" font-size="13" fill="#000" stroke="#000" stroke-width="0.22" font-family='"Liberation Sans", sans-serif' text-anchor="start" textLength="151.1" lengthAdjust="spacingAndGlyphs">Medium (256x128x256)</text>
<circle cx="1070.7" cy="164.8" r="7" fill="url(#rbchk)" stroke="#5a6a8a" stroke-width="1"/><circle cx="1070.7" cy="164.8" r="2.2" fill="#111"/>
<text x="1083.5" y="169.5" font-size="13" fill="#000" stroke="#000" stroke-width="0.22" font-family='"Liberation Sans", sans-serif' text-anchor="start" textLength="131" lengthAdjust="spacingAndGlyphs">High (512x256x512)</text>
<text x="1056.4" y="200.7" font-size="11" fill="#000" stroke="#000" stroke-width="0.22" font-family='"Liberation Sans", sans-serif' text-anchor="start" textLength="56" lengthAdjust="spacingAndGlyphs">Show area</text>
<rect x="1049.5" y="204.5" width="223" height="81" rx="4" fill="#e4e4e3" stroke="#cacaca" stroke-width="1"/>
<circle cx="1070.7" cy="228" r="7" fill="url(#rbchk)" stroke="#5a6a8a" stroke-width="1"/><circle cx="1070.7" cy="228" r="2.2" fill="#111"/>
<text x="1083.5" y="232.2" font-size="13" fill="#000" stroke="#000" stroke-width="0.22" font-family='"Liberation Sans", sans-serif' text-anchor="start" textLength="82.5" lengthAdjust="spacingAndGlyphs">Whole region</text>
<circle cx="1070.7" cy="246.8" r="7" fill="url(#cbg)" stroke="#8f8f8f" stroke-width="1"/>
<text x="1083.5" y="251" font-size="13" fill="#000" stroke="#000" stroke-width="0.22" font-family='"Liberation Sans", sans-serif' text-anchor="start" textLength="57.5" lengthAdjust="spacingAndGlyphs">The mine</text>
<circle cx="1070.7" cy="265.6" r="7" fill="url(#cbg)" stroke="#8f8f8f" stroke-width="1"/>
<text x="1083.5" y="269.8" font-size="13" fill="#000" stroke="#000" stroke-width="0.22" font-family='"Liberation Sans", sans-serif' text-anchor="start" textLength="86.3" lengthAdjust="spacingAndGlyphs">The mountain</text>
<rect x="1049.5" y="303.0" width="13" height="13" rx="3" fill="url(#cbg)" stroke="#8f8f8f" stroke-width="1"/>
<text x="1067.1" y="313.9" font-size="13" fill="#000" stroke="#000" stroke-width="0.22" font-family='"Liberation Sans", sans-serif' text-anchor="start" textLength="128" lengthAdjust="spacingAndGlyphs">Alternate color table</text>
<text x="1049.2" y="337.8" font-size="13" fill="#000" stroke="#000" stroke-width="0.22" font-family='"Liberation Sans", sans-serif' text-anchor="start" textLength="145.5" lengthAdjust="spacingAndGlyphs">Alpha multiplier: 3.500</text>
<rect x="1049.5" y="353.8" width="223.0999999999999" height="5" rx="2.5" fill="url(#trk)" stroke="#a0a0a0" stroke-width="0.8"/><circle cx="1214.1" cy="356.8" r="7.8" fill="url(#knob)" stroke="#8a8a8a" stroke-width="1"/>
<rect x="1049.5" y="377.0" width="13" height="13" rx="3" fill="url(#cbchk)" stroke="#5a6a8a" stroke-width="1"/><path d="M1052,383.0 L1055.2,387.0 L1061.5,376.0" fill="none" stroke="#101830" stroke-width="2.4" stroke-linecap="round" stroke-linejoin="round"/>
<text x="1067.2" y="388.2" font-size="13" fill="#000" stroke="#000" stroke-width="0.22" font-family='"Liberation Sans", sans-serif' text-anchor="start" textLength="100.8" lengthAdjust="spacingAndGlyphs">Preserve opacity</text>
<rect x="1049.5" y="398.5" width="13" height="13" rx="3" fill="url(#cbg)" stroke="#8f8f8f" stroke-width="1"/>
<text x="1067.2" y="409.4" font-size="13" fill="#000" stroke="#000" stroke-width="0.22" font-family='"Liberation Sans", sans-serif' text-anchor="start" textLength="123.8" lengthAdjust="spacingAndGlyphs">Transparent ground</text>
<rect x="1049.5" y="419.0" width="13" height="13" rx="3" fill="url(#cbchk)" stroke="#5a6a8a" stroke-width="1"/><path d="M1052,425.0 L1055.2,429.0 L1061.5,418.0" fill="none" stroke="#101830" stroke-width="2.4" stroke-linecap="round" stroke-linejoin="round"/>
<text x="1067.2" y="429.8" font-size="13" fill="#000" stroke="#000" stroke-width="0.22" font-family='"Liberation Sans", sans-serif' text-anchor="start" textLength="91.2" lengthAdjust="spacingAndGlyphs">Use HD shader</text>
<rect x="1049.5" y="441.5" width="223" height="65" fill="none" stroke="#000" stroke-width="1"/>
<text x="1053.6" y="454.3" font-size="13" fill="#000" stroke="#000" stroke-width="0.22" font-family='"Liberation Sans", sans-serif' text-anchor="start" textLength="208" lengthAdjust="spacingAndGlyphs">Note: A high end graphics card is</text>
<text x="1053.6" y="470.6" font-size="13" fill="#000" stroke="#000" stroke-width="0.22" font-family='"Liberation Sans", sans-serif' text-anchor="start" textLength="213.6" lengthAdjust="spacingAndGlyphs">recommended with the HD shader</text>
<text x="1053.6" y="486.9" font-size="13" fill="#000" stroke="#000" stroke-width="0.22" font-family='"Liberation Sans", sans-serif' text-anchor="start" textLength="211" lengthAdjust="spacingAndGlyphs">when the volume contains a lot of</text>
<text x="1053.6" y="502.7" font-size="13" fill="#000" stroke="#000" stroke-width="0.22" font-family='"Liberation Sans", sans-serif' text-anchor="start" textLength="112.5" lengthAdjust="spacingAndGlyphs">transparent areas.</text>
<rect x="822.5" y="97.5" width="199" height="99" fill="#eceeea" stroke="#000" stroke-width="1"/><rect x="823" y="141.8" width="198" height="54.2" fill="url(#thg)"/><polygon points="823.0,141.8 839.9,141.8 823.0,159.8" fill="#c8c8ec" /><polygon points="839.9,141.5 841.4,140.7 842.9,139.9 844.4,138.9 845.9,137.6 847.4,137.0 849.0,136.7 850.5,136.5 852.0,136.4 853.5,136.0 855.0,135.3 856.5,135.0 858.0,134.9 859.5,134.3 861.0,134.3 862.5,133.7 864.0,133.3 865.6,133.0 867.1,133.2 868.6,133.1 870.1,133.1 871.6,133.8 873.1,134.4 874.6,135.3 876.1,136.4 877.6,137.1 879.1,138.2 880.6,138.7 882.2,138.9 883.7,139.8 885.2,139.9 886.7,140.9 888.2,141.3 889.7,140.6 891.2,139.9 892.7,139.4 894.2,138.6 895.7,138.0 897.2,137.8 898.8,136.7 900.3,135.6 901.8,134.0 903.3,133.1 904.8,132.1 906.3,132.2 907.8,133.5 909.3,134.6 910.8,135.8 912.3,136.5 913.8,136.2 915.4,135.3 916.9,133.8 918.4,133.1 919.9,133.4 921.4,134.1 922.9,134.7 924.4,135.4 925.9,136.1 927.4,137.2 928.9,137.1 930.5,136.3 932.0,135.5 933.5,135.3 935.0,135.5 936.5,135.1 938.0,134.8 939.5,135.6 941.0,136.6 942.5,137.0 944.0,137.9 945.5,138.7 947.1,139.6 948.6,139.7 950.1,139.4 951.6,139.3 953.1,139.8 954.6,139.7 956.1,139.8 957.6,139.7 959.1,139.3 960.6,138.9 962.1,139.3 963.7,139.6 965.2,139.2 966.7,138.5 968.2,137.9 969.7,137.5 971.2,136.9 972.7,136.0 974.2,135.3 975.7,134.5 977.2,133.7 978.7,133.8 980.3,134.4 981.8,134.9 983.3,135.3 984.8,136.3 986.3,136.5 987.8,136.7 989.3,136.8 990.8,136.8 992.3,136.5 993.8,136.4 995.3,135.7 996.9,135.2 998.4,134.7 999.9,134.3 1001.4,133.7 1002.9,133.0 1004.4,132.6 1005.9,132.7 1007.4,132.8 1008.9,132.7 1010.4,132.3 1011.9,131.7 1013.5,131.8 1015.0,131.4 1016.5,131.3 1018.0,130.4 1019.5,129.8 1021.0,129.7 1021.0,141.8 839.9,141.8" fill="#1c881c" /><polygon points="823.0,186.9 825.0,186.8 827.0,186.6 829.0,187.4 831.0,187.4 833.0,187.3 835.0,187.8 837.0,187.9 839.0,188.6 841.0,188.6 843.0,189.4 845.0,189.5 847.0,189.5 849.0,189.8 851.0,189.8 853.0,190.1 855.0,190.0 857.0,189.4 859.0,189.7 861.0,189.6 863.0,189.3 865.0,188.8 867.0,189.1 869.0,189.0 871.0,188.9 873.0,188.8 875.0,188.7 877.0,188.5 879.0,188.4 881.0,188.3 883.0,187.9 885.0,188.0 887.0,187.7 889.0,187.7 891.0,187.6 893.0,187.5 895.0,187.0 897.0,187.2 899.0,187.1 901.0,186.6 903.0,186.0 905.0,185.9 907.0,185.3 909.0,185.6 911.0,185.5 913.0,185.3 915.0,185.1 917.0,185.1 919.0,185.4 921.0,185.1 923.0,184.8 925.0,184.7 927.0,184.4 929.0,184.4 931.0,184.3 933.0,184.1 935.0,184.1 937.0,184.0 939.0,183.4 941.0,183.8 943.0,183.5 945.0,183.3 947.0,183.1 949.0,183.3 951.0,183.4 953.0,183.3 955.0,183.2 957.0,182.6 959.0,182.9 961.0,182.5 963.0,182.5 965.0,182.2 967.0,181.9 969.0,181.7 971.0,181.3 973.0,180.7 975.0,180.7 977.0,180.9 979.0,180.9 981.0,180.5 983.0,180.6 985.0,180.0 987.0,179.9 989.0,180.1 991.0,180.4 993.0,180.3 995.0,180.5 997.0,180.4 999.0,180.3 1001.0,180.4 1003.0,180.8 1005.0,180.9 1007.0,180.9 1009.0,180.9 1011.0,180.8 1013.0,180.7 1015.0,180.8 1017.0,180.8 1019.0,180.7 1021.0,180.7 1021.0,196.5 823.0,196.5" fill="#700000" /><path d="M901.7,137.4 V166.8 H961.2 M901.7,156.8 H961.2 M961.2,138.5 V176.4 H921.3" stroke="#3c3c3c" stroke-width="1.5" fill="none"/>
<rect x="822.5" y="517.5" width="199" height="99" fill="#eceeea" stroke="#000" stroke-width="1"/><rect x="823" y="561.8" width="198" height="54.2" fill="url(#thg)"/><polygon points="823.0,561.8 866.5,561.8 858.2,568.1 849.9,570.6 838.3,569.0 823.0,574.0" fill="#c8c8ec" /><polygon points="866.5,562.3 868.0,561.3 869.5,559.8 871.0,557.8 872.5,556.6 874.0,555.8 875.5,555.2 877.0,554.7 878.5,555.4 880.0,556.4 881.5,557.2 883.0,558.4 884.5,559.3 886.0,560.6 887.5,560.9 889.0,560.8 890.5,560.0 892.0,558.1 893.5,555.7 895.0,554.1 896.5,556.2 898.0,558.1 899.5,559.0 901.0,558.0 902.5,557.3 904.0,555.9 905.5,555.0 907.0,554.8 908.5,556.6 910.0,558.4 911.5,556.7 913.0,554.7 914.5,553.1 916.0,551.8 917.5,550.8 919.0,551.1 920.5,551.7 922.0,551.7 923.5,551.7 925.0,551.9 926.5,552.6 928.0,552.7 929.5,552.7 931.0,553.1 932.5,553.5 934.0,554.0 935.5,554.5 937.0,555.3 938.5,555.5 940.0,555.8 941.5,556.1 943.0,556.5 944.5,557.3 946.0,557.5 947.5,557.3 949.0,557.2 950.5,557.7 952.0,558.0 953.5,558.5 955.0,558.2 956.5,558.4 958.0,558.9 959.5,559.1 961.0,559.5 962.5,559.0 964.0,559.4 965.5,558.7 967.0,558.5 968.5,557.8 970.0,558.0 971.5,557.0 973.0,556.3 974.5,555.4 976.0,554.2 977.5,553.0 979.0,552.8 980.5,553.0 982.0,553.0 983.5,553.4 985.0,553.4 986.5,553.3 988.0,552.9 989.5,553.1 991.0,552.7 992.5,553.1 994.0,553.5 995.5,553.0 997.0,552.4 998.5,552.3 1000.0,551.8 1001.5,551.7 1003.0,552.0 1004.5,551.6 1006.0,551.3 1007.5,551.7 1009.0,551.7 1010.5,551.7 1012.0,552.3 1013.5,552.9 1015.0,553.5 1016.5,553.6 1018.0,553.7 1019.5,553.9 1021.0,554.1 1021.0,561.8 866.5,561.8" fill="#1c881c" /><polygon points="823.0,605.7 825.0,606.1 827.0,605.8 829.0,606.3 831.0,606.1 833.0,606.3 835.0,605.9 837.0,606.2 839.0,605.9 841.0,606.1 843.0,606.4 845.0,606.7 847.0,606.7 849.0,607.0 851.0,607.0 853.0,606.7 855.0,606.7 857.0,607.1 859.0,607.1 861.0,607.1 863.0,607.0 865.0,607.3 867.0,606.9 869.0,607.2 871.0,607.4 873.0,607.1 875.0,606.8 877.0,606.5 879.0,606.5 881.0,606.3 883.0,606.6 885.0,606.9 887.0,606.6 889.0,606.8 891.0,606.2 893.0,605.8 895.0,605.8 897.0,606.1 899.0,606.3 901.0,606.3 903.0,606.2 905.0,605.9 907.0,606.0 909.0,605.9 911.0,605.4 913.0,605.4 915.0,604.9 917.0,604.4 919.0,604.2 921.0,604.3 923.0,604.6 925.0,604.1 927.0,603.9 929.0,604.3 931.0,604.4 933.0,604.3 935.0,603.9 937.0,603.8 939.0,603.4 941.0,603.4 943.0,603.4 945.0,603.2 947.0,603.3 949.0,603.1 951.0,603.0 953.0,603.0 955.0,602.7 957.0,602.3 959.0,602.3 961.0,602.2 963.0,602.5 965.0,602.2 967.0,602.0 969.0,601.5 971.0,601.4 973.0,601.1 975.0,601.0 977.0,601.2 979.0,600.6 981.0,601.1 983.0,601.2 985.0,601.5 987.0,601.4 989.0,601.4 991.0,601.3 993.0,601.1 995.0,600.8 997.0,600.5 999.0,600.2 1001.0,600.0 1003.0,600.3 1005.0,600.6 1007.0,600.6 1009.0,600.1 1011.0,599.8 1013.0,599.7 1015.0,599.9 1017.0,599.7 1019.0,599.8 1021.0,600.1 1021.0,616.5 823.0,616.5" fill="#700000" /><path d="M961.2,559 V596.4 M921.3,576.8 H980.8 M901.1,586.8 H980.8 M941.3,596.4 H980.8" stroke="#3c3c3c" stroke-width="1.5" fill="none"/>
<rect x="822.5" y="257.5" width="199" height="199" fill="#7a7e6a" stroke="#000" stroke-width="1"/>
<polygon points="821.9,322.6 824.5,324.3 828.4,325.9 827.0,329.8 826.5,333.5 829.2,333.9 832.2,334.8 835.5,336.3 837.5,338.0 840.4,339.6 844.8,340.6 843.3,343.1 841.4,345.2 839.2,347.0 840.2,349.1 843.4,351.8 844.1,354.5 843.3,357.4 841.8,358.8 841.7,361.5 842.8,364.4 844.4,367.3 845.2,368.1 845.4,371.1 848.0,372.7 850.2,373.2 852.8,373.6 855.6,374.9 858.2,375.7 860.7,375.3 863.8,376.1 867.4,376.5 869.7,379.0 871.3,380.5 874.4,382.0 876.9,383.1 878.2,384.2 880.5,385.9 882.6,387.6 885.5,390.1 888.0,391.8 889.1,393.4 891.6,393.9 894.3,396.3 891.1,396.0 888.9,397.2 886.1,396.7 883.3,396.5 881.3,398.0 878.2,397.4 875.0,397.5 876.6,400.9 877.2,404.0 879.1,405.8 880.5,409.4 880.8,411.2 882.8,413.3 883.5,417.2 884.4,418.9 887.6,421.4 889.6,422.8 892.0,424.2 894.1,426.4 895.9,428.6 897.5,430.6 899.9,433.0 901.9,434.0 903.3,436.6 905.2,438.1 907.6,440.5 908.7,441.9 911.2,442.9 914.5,444.2 917.4,444.4 919.9,445.7 921.7,446.4 924.4,447.3 926.6,449.5 929.8,449.8 932.4,451.3 934.0,452.2 937.3,452.1 939.5,452.7 942.2,453.2 945.0,452.7 946.3,452.9 949.3,454.0 952.9,454.1 954.5,454.7 958.1,454.5 959.8,454.5 963.6,454.3 965.3,453.0 968.1,452.7 970.3,452.9 974.1,453.9 976.0,454.9 978.2,454.4 980.9,455.5 983.9,456.0 823.0,456.0" fill="#c6c6e2" />
<path d="M921.5,298 V317.6 H981.3 M931.3,298 V317.6 M941.7,298 V317.6 M951.4,298 V317.6 M961.2,317.6 V377.3 M941,327.3 H981.3 M941,337 H981.3 M941,346.8 H981.3 M941,356.5 H981.3 M941,366.3 H981.3" stroke="#333" stroke-width="2" fill="none"/></svg></body></html>
